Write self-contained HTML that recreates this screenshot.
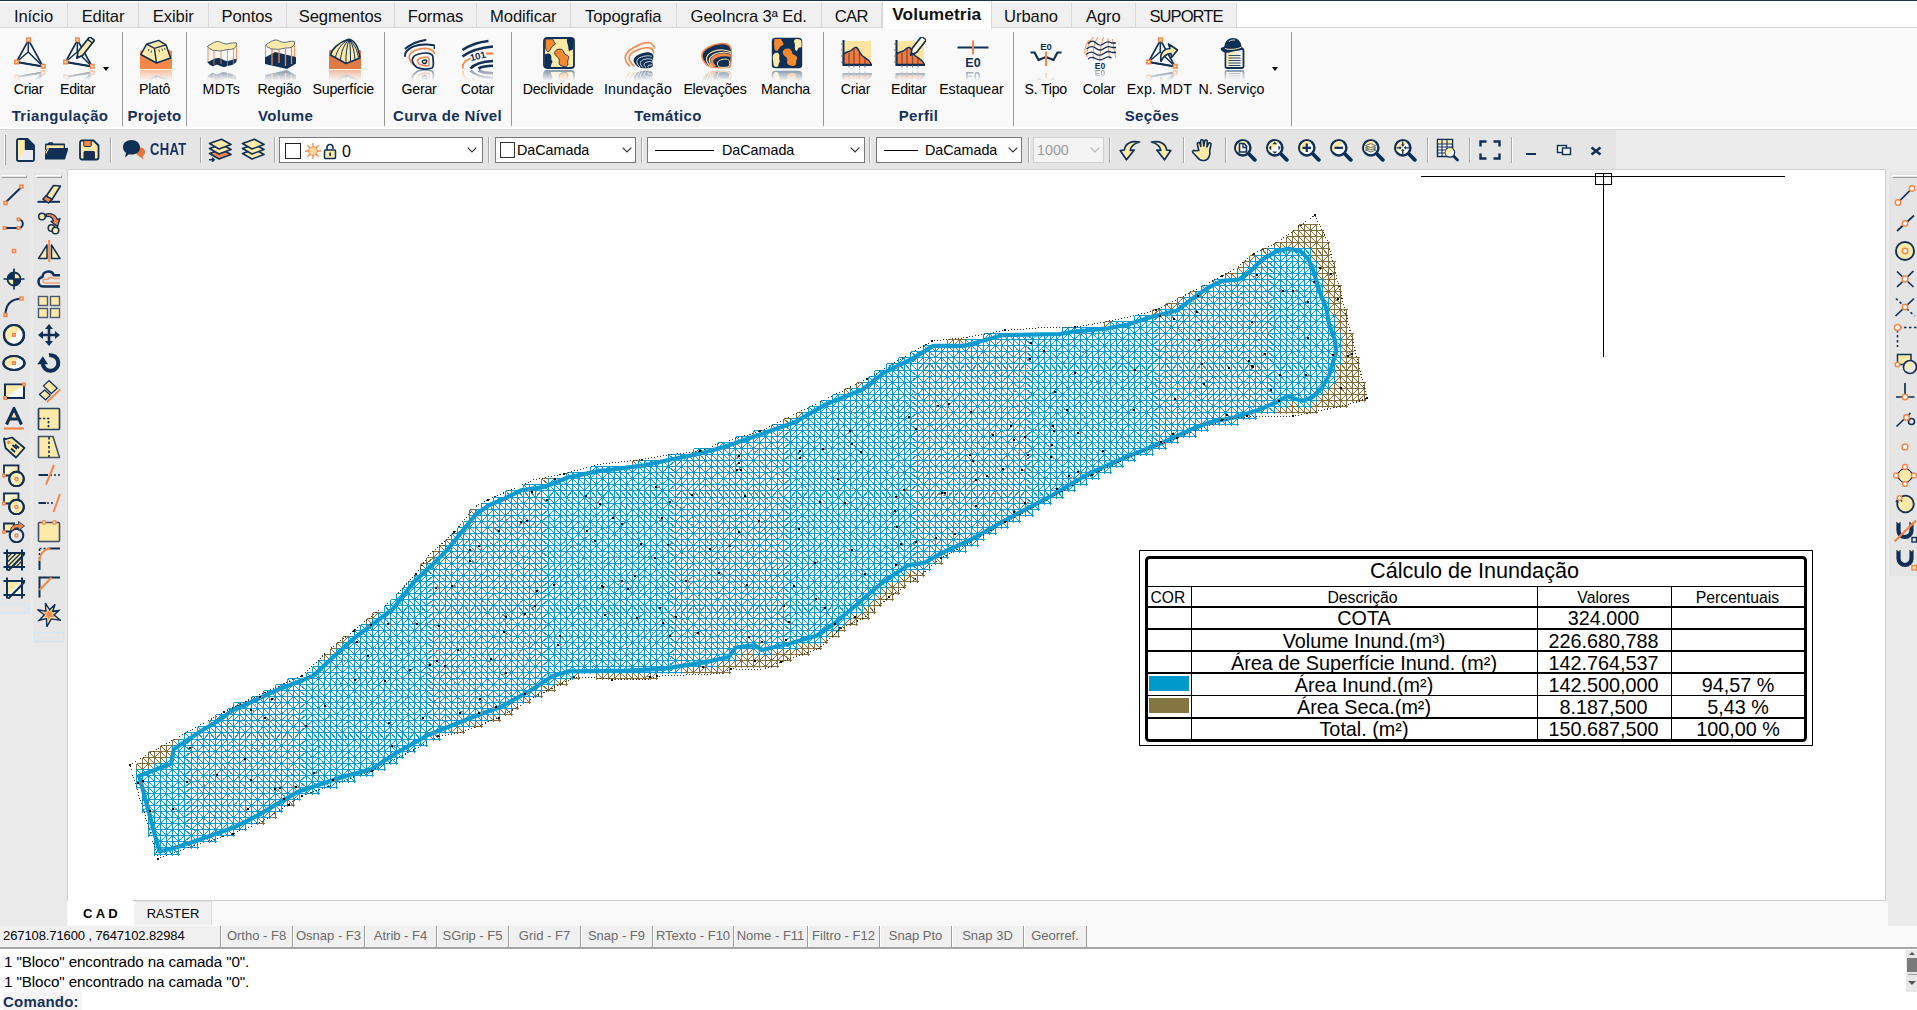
<!DOCTYPE html><html><head><meta charset="utf-8"><title>CAD</title><style>
*{box-sizing:border-box;margin:0;padding:0}
html,body{width:1917px;height:1010px;overflow:hidden;background:#fff}
body{font-family:"Liberation Sans",sans-serif;position:relative;color:#000}
.a{position:absolute}
#topline{left:0;top:0;width:1917px;height:1.4px;background:#1b3558}
#tabbar{left:0;top:3px;width:1917px;height:25px;background:#fff;border-bottom:1px solid #d4d4d4}
.tab{position:absolute;top:0;height:24px;background:#f0f0f0;border-right:1px solid #d9d9d9;font-size:16.6px;line-height:27px;text-align:center;color:#111;letter-spacing:-.1px}
.tab.on{background:#fff;font-weight:bold;top:-2px;height:28px;border-left:1px solid #d9d9d9;border-right:1px solid #d9d9d9;z-index:2;font-size:17.3px;line-height:27px;letter-spacing:.1px}
#ribbon{left:0;top:29px;width:1917px;height:98px;background:#f9f9f9}
.rb{position:absolute;top:7.7px;width:32px;height:46px}
.rl{position:absolute;top:50.6px;height:18px;font-size:14.2px;line-height:18px;white-space:nowrap;transform:translateX(-50%);letter-spacing:-.25px;color:#000}
.gl{position:absolute;top:76.7px;height:20px;font-size:15px;font-weight:bold;line-height:20px;white-space:nowrap;transform:translateX(-50%);color:#17315a;letter-spacing:.35px}
.gs{position:absolute;top:2.5px;width:1px;height:94.5px;background:#9a9a9a}
.dd{position:absolute;width:0;height:0;border-left:3.4px solid transparent;border-right:3.4px solid transparent;border-top:4.6px solid #000}
#ribline{left:0;top:129px;width:1917px;height:1px;background:#d6d6d6}
#toolbar{left:0;top:130px;width:1616px;height:39px;background:#e5e5e5}
#toolbar2{left:1616px;top:130px;width:301px;height:39px;background:#ececec}
.ts{position:absolute;top:12px;width:2px;height:26px;border-left:1px solid #a9a9a9;border-right:1px solid #fafafa}
.ti{position:absolute;top:8px;width:24px;height:24px}
.cb{position:absolute;top:7px;height:26px;background:#fff;border:1px solid #7a7a7a;font-size:14.3px;line-height:24px;white-space:nowrap}
.cb .t{position:absolute;top:0}
.chev{position:absolute;top:9px;width:10px;height:6px}
#leftp{left:0;top:169px;width:67px;height:757px;background:#eaeaea}
#lc1{left:0;top:172px;width:30px;height:442px;background:#e6e6e6}
#lc2{left:33px;top:172px;width:32px;height:471px;background:#e6e6e6}
#rightp{left:1886px;top:169px;width:31px;height:757px;background:#ebebeb}
#rc{left:1889px;top:172px;width:28px;height:404px;background:#e5e5e5}
.li{position:absolute;width:24px;height:24px}
#canvas{left:67px;top:169px;width:1819px;height:732px;background:#fff;border:1px solid #cfcfcf}
#btabs{left:67px;top:901px;width:1821px;height:25px;background:#f9f9f9}
#stat{left:0;top:926px;width:1917px;height:22px;background:#f9f9f9}
#statl{left:0;top:926px;width:1087px;height:22px;background:#f0f0f0}
#statline{left:0;top:947px;width:1917px;height:2px;background:#a6a6a6}
.sb{position:absolute;top:0;height:21px;border-left:1px solid #9d9d9d;font-size:13px;line-height:19px;text-align:center;color:#6a6a6a;white-space:nowrap;box-shadow:inset 1px 0 0 #fff}
#cmd{left:0;top:949px;width:1917px;height:61px;background:#fff;font-size:15.2px}
#cmd div{position:absolute;left:4px;white-space:nowrap;line-height:20px;letter-spacing:-.1px}
</style></head><body><div class="a" id="tabbar"><div class="tab" style="left:0.0px;width:68.0px">Início</div><div class="tab" style="left:68.0px;width:71.0px">Editar</div><div class="tab" style="left:139.0px;width:69.5px">Exibir</div><div class="tab" style="left:208.5px;width:78.0px">Pontos</div><div class="tab" style="left:286.5px;width:108.5px">Segmentos</div><div class="tab" style="left:395.0px;width:82.0px">Formas</div><div class="tab" style="left:477.0px;width:93.5px">Modificar</div><div class="tab" style="left:570.5px;width:106.5px">Topografia</div><div class="tab" style="left:677.0px;width:144.5px">GeoIncra 3ª Ed.</div><div class="tab" style="left:821.5px;width:60.5px;letter-spacing:-.7px">CAR</div><div class="tab on" style="left:882.0px;width:109.5px">Volumetria</div><div class="tab" style="left:991.5px;width:80.0px">Urbano</div><div class="tab" style="left:1071.5px;width:64.5px">Agro</div><div class="tab" style="left:1136.0px;width:101.0px;letter-spacing:-1px">SUPORTE</div></div><div class="a" id="topline"></div><div class="a" id="ribbon"><svg class="rb" style="left:14px" viewBox="0 0 32 46"><defs><linearGradient id="g_tri_criar" x1="0" y1="33" x2="0" y2="46" gradientUnits="userSpaceOnUse"><stop offset="0" stop-color="#fff" stop-opacity=".5"/><stop offset=".85" stop-color="#fff" stop-opacity="0"/></linearGradient><mask id="m_tri_criar" maskUnits="userSpaceOnUse" x="0" y="32" width="32" height="14"><rect x="0" y="32" width="32" height="14" fill="url(#g_tri_criar)"/></mask></defs><g id="i_tri_criar"><g fill="none" stroke="#0f2f55" stroke-linejoin="round"><path d="M14.5 3L2.5 25L29 29.5Z" stroke-width="1.6"/><path d="M2.5 25L29 29.5" stroke-width="2.2"/><path d="M14.5 3L14.2 15L2.5 25M14.2 15L29 29.5" stroke-width="1.5"/></g><rect x="12.0" y="0.2999999999999998" width="5" height="5" fill="#f5874a"/><rect x="13.5" y="1.7999999999999998" width="2" height="2" fill="#fde3c0"/><rect x="0.10000000000000009" y="22.5" width="5" height="5" fill="#f5874a"/><rect x="1.6" y="24.0" width="2" height="2" fill="#fde3c0"/><rect x="26.7" y="26.8" width="5" height="5" fill="#f5874a"/><rect x="28.2" y="28.3" width="2" height="2" fill="#fde3c0"/></g><g mask="url(#m_tri_criar)"><use href="#i_tri_criar" transform="translate(0 65) scale(1 -1)"/></g></svg><div class="rl" style="left:28.5px">Criar</div><svg class="rb" style="left:63px" viewBox="0 0 32 46"><defs><linearGradient id="g_tri_editar" x1="0" y1="33" x2="0" y2="46" gradientUnits="userSpaceOnUse"><stop offset="0" stop-color="#fff" stop-opacity=".5"/><stop offset=".85" stop-color="#fff" stop-opacity="0"/></linearGradient><mask id="m_tri_editar" maskUnits="userSpaceOnUse" x="0" y="32" width="32" height="14"><rect x="0" y="32" width="32" height="14" fill="url(#g_tri_editar)"/></mask></defs><g id="i_tri_editar"><g fill="none" stroke="#0f2f55" stroke-linejoin="round"><path d="M14.5 3L2.5 25L29 29.5Z" stroke-width="1.6"/><path d="M2.5 25L29 29.5" stroke-width="2.2"/><path d="M14.5 3L14.2 15L2.5 25M14.2 15L29 29.5" stroke-width="1.5"/></g><rect x="12.0" y="0.2999999999999998" width="5" height="5" fill="#f5874a"/><rect x="13.5" y="1.7999999999999998" width="2" height="2" fill="#fde3c0"/><rect x="0.10000000000000009" y="22.5" width="5" height="5" fill="#f5874a"/><rect x="1.6" y="24.0" width="2" height="2" fill="#fde3c0"/><rect x="26.7" y="26.8" width="5" height="5" fill="#f5874a"/><rect x="28.2" y="28.3" width="2" height="2" fill="#fde3c0"/><g transform="translate(20.5 12.5) rotate(38)"><path d="M-3 -14h6v19l-3 6l-3 -6z" fill="#fde9a8" stroke="#0f2f55" stroke-width="1.700" stroke-linejoin="round"/><path d="M-3 -10.500h6" stroke="#0f2f55" stroke-width="1.400"/><path d="M-1.600 8l1.600 3l1.600 -3z" fill="#0f2f55"/></g></g><g mask="url(#m_tri_editar)"><use href="#i_tri_editar" transform="translate(0 65) scale(1 -1)"/></g></svg><div class="rl" style="left:77.8px">Editar</div><svg class="rb" style="left:140px" viewBox="0 0 32 46"><defs><linearGradient id="g_plato" x1="0" y1="33" x2="0" y2="46" gradientUnits="userSpaceOnUse"><stop offset="0" stop-color="#fff" stop-opacity=".5"/><stop offset=".85" stop-color="#fff" stop-opacity="0"/></linearGradient><mask id="m_plato" maskUnits="userSpaceOnUse" x="0" y="32" width="32" height="14"><rect x="0" y="32" width="32" height="14" fill="url(#g_plato)"/></mask></defs><g id="i_plato"><path d="M0 14l4 -1.5l24 0l4 1.5V32H0z" fill="#f5874a"/><path d="M6.6 7.2L18.6 3.4L26 7.8L30.6 21L16.5 26L.8 17.5z" fill="#fde9a8" stroke="#0f2f55" stroke-width="1.5" stroke-linejoin="round"/><path d="M6.6 7.2L14.4 11.3L26 7.8M14.4 11.3L16.5 26" fill="none" stroke="#0f2f55" stroke-width="1.4"/><path d="M9 12l-.6 2M11.5 13.5l-.4 2.4M19 12.5l.4 2.6M22 11.5l.5 2.4M24.5 11l.6 2" stroke="#0f2f55" stroke-width=".8" fill="none"/></g><g mask="url(#m_plato)"><use href="#i_plato" transform="translate(0 65) scale(1 -1)"/></g></svg><div class="rl" style="left:154.5px">Platô</div><svg class="rb" style="left:206px" viewBox="0 0 32 46"><defs><linearGradient id="g_mdts" x1="0" y1="33" x2="0" y2="46" gradientUnits="userSpaceOnUse"><stop offset="0" stop-color="#fff" stop-opacity=".5"/><stop offset=".85" stop-color="#fff" stop-opacity="0"/></linearGradient><mask id="m_mdts" maskUnits="userSpaceOnUse" x="0" y="32" width="32" height="14"><rect x="0" y="32" width="32" height="14" fill="url(#g_mdts)"/></mask></defs><g id="i_mdts"><g stroke="#f5874a" stroke-width="1.1" fill="none" opacity=".85"><path d="M2 10V26M8 13V28M15 14V27M21.5 13V29M27.5 11V27M30.5 7V24"/></g><path d="M1.5 25C5 24 8 21 12 21S18 24 21 24S27 22 30.5 22C31 24 30 26 28 27C25 29 23 28 20 29.5S15 29 12 28S8 30 6 29C4 28 2.5 27 1.5 25z" fill="#0f2f55"/><g stroke="#f5874a" stroke-width="1.1" fill="none" opacity=".7"><path d="M8 22V28M15 22V27M21.5 24V29M27.5 22V27"/></g><path d="M1.5 9.5C5 7 8 5 11 4.5S17 7 20 7S27 5 30.5 6C31 8 30 10 28 11.5C25 13 22 12 19 13S13 14 10 13.5S6.5 14 6 12.5C4 12 2.5 11 1.5 9.5z" fill="#fde9a8" stroke="#4a5f73" stroke-width=".9" stroke-linejoin="round"/></g><g mask="url(#m_mdts)"><use href="#i_mdts" transform="translate(0 65) scale(1 -1)"/></g></svg><div class="rl" style="left:221.3px;letter-spacing:.3px">MDTs</div><svg class="rb" style="left:264px" viewBox="0 0 32 46"><defs><linearGradient id="g_regiao" x1="0" y1="33" x2="0" y2="46" gradientUnits="userSpaceOnUse"><stop offset="0" stop-color="#fff" stop-opacity=".5"/><stop offset=".85" stop-color="#fff" stop-opacity="0"/></linearGradient><mask id="m_regiao" maskUnits="userSpaceOnUse" x="0" y="32" width="32" height="14"><rect x="0" y="32" width="32" height="14" fill="url(#g_regiao)"/></mask></defs><g id="i_regiao"><g stroke="#f5874a" stroke-width="1.1" fill="none" opacity=".85"><path d="M1.5 8V25M30.5 6V24"/></g><path d="M1 20.5L11 15L32 20V26.5L23 32L1 27z" fill="#0f2f55"/><g stroke="#f5874a" stroke-width="1.3" fill="none"><path d="M8 12V28M15 13V26M21.5 12V29M27.5 10V27"/></g><path d="M1.5 9.5C5 7 8 5 11 4.5S17 7 20 7S27 5 30.5 6C31 8 30 10 28 11.5C25 13 22 12 19 13S13 14 10 13.5S6.5 14 6 12.5C4 12 2.5 11 1.5 9.5z" transform="translate(0 -1.5)" fill="#fde9a8" stroke="#4a5f73" stroke-width=".9" stroke-linejoin="round"/></g><g mask="url(#m_regiao)"><use href="#i_regiao" transform="translate(0 65) scale(1 -1)"/></g></svg><div class="rl" style="left:279.3px">Região</div><svg class="rb" style="left:329px" viewBox="0 0 32 46"><defs><linearGradient id="g_superficie" x1="0" y1="33" x2="0" y2="46" gradientUnits="userSpaceOnUse"><stop offset="0" stop-color="#fff" stop-opacity=".5"/><stop offset=".85" stop-color="#fff" stop-opacity="0"/></linearGradient><mask id="m_superficie" maskUnits="userSpaceOnUse" x="0" y="32" width="32" height="14"><rect x="0" y="32" width="32" height="14" fill="url(#g_superficie)"/></mask></defs><g id="i_superficie"><path d="M0 13.5L3 12.5H29l3 1V32H0z" fill="#de7b45"/><path d="M1.5 18C3 12 10 5 19.5 2.2C26 3 29.5 10 31 21L17 26.5z" fill="#fde9a8" stroke="#0f2f55" stroke-width="1.5" stroke-linejoin="round"/><path d="M19.5 2.5C12 7 8 13 6.5 20.5M19.8 2.5C15 8 12 15 11.5 23M20 2.5C18 9 16.5 17 17 26M20.3 2.5C21.5 9 21.5 17 21.5 24.5M20.6 2.6C24 8 25.5 15 26 23M21 3C26 8 28.5 14 29.5 21.5" fill="none" stroke="#0f2f55" stroke-width="1"/></g><g mask="url(#m_superficie)"><use href="#i_superficie" transform="translate(0 65) scale(1 -1)"/></g></svg><div class="rl" style="left:343.3px">Superfície</div><svg class="rb" style="left:403px" viewBox="0 0 32 46"><defs><linearGradient id="g_gerar" x1="0" y1="33" x2="0" y2="46" gradientUnits="userSpaceOnUse"><stop offset="0" stop-color="#fff" stop-opacity=".5"/><stop offset=".85" stop-color="#fff" stop-opacity="0"/></linearGradient><mask id="m_gerar" maskUnits="userSpaceOnUse" x="0" y="32" width="32" height="14"><rect x="0" y="32" width="32" height="14" fill="url(#g_gerar)"/></mask></defs><g id="i_gerar"><g fill="none" stroke-linecap="round"><path d="M2.5 11.5C8 7 16 4 22.5 3" stroke="#0f2f55" stroke-width="2"/><path d="M2 19C2 12 12 7 24 7.5S31 10.5 31.5 11" stroke="#0f2f55" stroke-width="2"/><path d="M12.5 29C5 24 3.5 17 12 13.5S30 11 31.5 16.5" stroke="#f5874a" stroke-width="1.7"/><path d="M14 30.5C7 25 8 19 16 17S30 16 30 20.5S31.5 29.5 29 31C24 32.5 18 32 14 30.5z" stroke="#0f2f55" stroke-width="1.7"/><path d="M17 27.5C12.5 24 14.5 21.5 19.5 20.5S26.5 20.5 26 23.5S27 28 25.5 28.5S19.5 28.5 17 27.5z" stroke="#f5874a" stroke-width="1.6"/><path d="M19.5 25.5C18.5 23.5 20 23 22.5 23S23 25 23 26S20.500 26.5 19.5 25.5z" fill="#f4ec8a" stroke="#0f2f55" stroke-width="1.4"/></g></g><g mask="url(#m_gerar)"><use href="#i_gerar" transform="translate(0 65) scale(1 -1)"/></g></svg><div class="rl" style="left:419.0px">Gerar</div><svg class="rb" style="left:461px" viewBox="0 0 32 46"><defs><linearGradient id="g_cotar" x1="0" y1="33" x2="0" y2="46" gradientUnits="userSpaceOnUse"><stop offset="0" stop-color="#fff" stop-opacity=".5"/><stop offset=".85" stop-color="#fff" stop-opacity="0"/></linearGradient><mask id="m_cotar" maskUnits="userSpaceOnUse" x="0" y="32" width="32" height="14"><rect x="0" y="32" width="32" height="14" fill="url(#g_cotar)"/></mask></defs><g id="i_cotar"><g fill="none"><path d="M1.500 13C9 8 18 5 27.500 4" stroke="#0f2f55" stroke-width="2.6"/><path d="M1.500 19.5C9 14 20 10.5 32 9.5" stroke="#0f2f55" stroke-width="2.6"/><path d="M25 16.5H32" stroke="#f5874a" stroke-width="2.2"/><path d="M2 31.500C1 27 4 23.500 9.500 21.5" stroke="#f5874a" stroke-width="1.8"/><path d="M9.5 31.500C13 27.500 21 24.5 32 24" stroke="#0f2f55" stroke-width="2.6"/><path d="M17.5 31.500C21 29.500 26 28.800 32 28.800" stroke="#0f2f55" stroke-width="2.6"/></g><text x="17" y="22.5" font-family="Liberation Sans, sans-serif" font-weight="bold" font-size="9.5" fill="#0f2f55" text-anchor="middle" transform="rotate(-14 17 20)">101</text></g><g mask="url(#m_cotar)"><use href="#i_cotar" transform="translate(0 65) scale(1 -1)"/></g></svg><div class="rl" style="left:477.5px">Cotar</div><svg class="rb" style="left:543px" viewBox="0 0 32 46"><defs><linearGradient id="g_decliv" x1="0" y1="33" x2="0" y2="46" gradientUnits="userSpaceOnUse"><stop offset="0" stop-color="#fff" stop-opacity=".5"/><stop offset=".85" stop-color="#fff" stop-opacity="0"/></linearGradient><mask id="m_decliv" maskUnits="userSpaceOnUse" x="0" y="32" width="32" height="14"><rect x="0" y="32" width="32" height="14" fill="url(#g_decliv)"/></mask></defs><g id="i_decliv"><rect x="1" y="1" width="30" height="30" rx="3" fill="#fde9a8" stroke="#0f2f55" stroke-width="1.8"/><path d="M2.5 2H9.500C10.500 4 11.500 5 12.500 7C11 8.500 8.500 9 8 11S6.500 14.500 5 14.500S3 13 2.500 11z" fill="#f48a2c" stroke="#0f2f55" stroke-width=".8"/><path d="M24 2H30V12C29 14 27 12.500 26.500 14.500C25 13 25.500 10 25 8.500S23.500 4 24 2z" fill="#0f2f55"/><path d="M2 17.500C4.500 16 7 16 8 18.500S7.500 22 9 23.500S7.500 27 8 30H2z" fill="#0f2f55"/><path d="M12 14.500C14 11.500 18.500 11.500 20 13.500S20.500 17 23.500 18S26 21 25 23S25.500 26.500 24.500 28.500S19 29.500 17 28S17.500 23 15.500 21S11 18 12 14.500z" fill="#f48a2c" stroke="#0f2f55" stroke-width=".9"/></g><g mask="url(#m_decliv)"><use href="#i_decliv" transform="translate(0 65) scale(1 -1)"/></g></svg><div class="rl" style="left:558.0px">Declividade</div><svg class="rb" style="left:623px" viewBox="0 0 32 46"><defs><linearGradient id="g_inund" x1="0" y1="33" x2="0" y2="46" gradientUnits="userSpaceOnUse"><stop offset="0" stop-color="#fff" stop-opacity=".5"/><stop offset=".85" stop-color="#fff" stop-opacity="0"/></linearGradient><mask id="m_inund" maskUnits="userSpaceOnUse" x="0" y="32" width="32" height="14"><rect x="0" y="32" width="32" height="14" fill="url(#g_inund)"/></mask></defs><g id="i_inund"><g transform="translate(0 4.500)"><g fill="none" stroke="#f5874a" stroke-width="1.6" stroke-linecap="round"><path d="M6.500 24.500C1.500 19 -1 13 10 6.500S24 1 26.500 1.200S30 4 32 6.500"/><path d="M11 24.500C5 19 3.500 14 12 9.500S27 6 29 7.500S30.500 10 30.500 11.500"/></g><path d="M14.500 25C10 21 8.500 17 15 13.500S27 10 29.500 12.500S28.500 18 29.500 21.500S29 26 26.500 26.500S18 27 14.500 25z" fill="#0f2f55"/><g fill="none" stroke="#e9eef4" stroke-width=".9"><path d="M17 25.500C12.500 21.500 12.500 17.500 18.500 15.500S28 14.500 29 15"/><path d="M20 26C16 22.500 16.500 19.500 21 18S28 17.500 29 18"/><path d="M23 26C20 23.500 20.500 21.500 24 20.500S28.500 20.500 29.500 21"/><path d="M25.500 26C24 24.500 24.500 23.500 29 23.500"/></g></g></g><g mask="url(#m_inund)"><use href="#i_inund" transform="translate(0 65) scale(1 -1)"/></g></svg><div class="rl" style="left:638.0px;letter-spacing:.2px">Inundação</div><svg class="rb" style="left:700px" viewBox="0 0 32 46"><defs><linearGradient id="g_elev" x1="0" y1="33" x2="0" y2="46" gradientUnits="userSpaceOnUse"><stop offset="0" stop-color="#fff" stop-opacity=".5"/><stop offset=".85" stop-color="#fff" stop-opacity="0"/></linearGradient><mask id="m_elev" maskUnits="userSpaceOnUse" x="0" y="32" width="32" height="14"><rect x="0" y="32" width="32" height="14" fill="url(#g_elev)"/></mask></defs><g id="i_elev"><g transform="translate(0 2.500)"><path d="M7.500 26C1 20 -1 13 8 8S27 3 30 7S31.500 15 31 22S30 27.500 26 28S11 28.500 7.500 26z" fill="#0f2f55" stroke="#f5874a" stroke-width="1.5"/><g fill="none"><path d="M10.500 27C5 21.500 5 16 12 12.500S28 10.500 31 12.500" stroke="#fde9a8" stroke-width="1.1"/><path d="M15 27.500C10 22.500 11 18.500 17 16.500S29 15.500 31 16.500" stroke="#f5874a" stroke-width="3"/><path d="M12.500 27.500C7.500 22 8.500 17.500 15 14.500S29 13 31 14" stroke="#fde9a8" stroke-width="1.1"/></g><path d="M19 27.500C16 23.500 17.500 21 22 20S29.500 20 29.500 22.500S30 27 28 27.500S21 28 19 27.500z" fill="#0f2f55" stroke="#fde9a8" stroke-width="1"/></g></g><g mask="url(#m_elev)"><use href="#i_elev" transform="translate(0 65) scale(1 -1)"/></g></svg><div class="rl" style="left:715.0px">Elevações</div><svg class="rb" style="left:771px" viewBox="0 0 32 46"><defs><linearGradient id="g_mancha" x1="0" y1="33" x2="0" y2="46" gradientUnits="userSpaceOnUse"><stop offset="0" stop-color="#fff" stop-opacity=".5"/><stop offset=".85" stop-color="#fff" stop-opacity="0"/></linearGradient><mask id="m_mancha" maskUnits="userSpaceOnUse" x="0" y="32" width="32" height="14"><rect x="0" y="32" width="32" height="14" fill="url(#g_mancha)"/></mask></defs><g id="i_mancha"><rect x=".8" y=".8" width="30.400" height="30.400" rx="3.500" fill="#0f2f55"/><path d="M3.500 2H10C10.500 4 12.500 5.500 12.500 7.500C11 9 9 9 8 11.500S6 14 4.500 13.500S3.500 9 3 7z" fill="#f48a2c"/><path d="M24 2.500C26 1.500 30 2 30.500 4.500V10C29.500 11 28 9.500 27 12S24.500 14.500 24 12S24.500 8 23.500 6S23 3.500 24 2.500z" fill="#fde9a8"/><path d="M2.500 17.500C3.500 15.500 7 15 8 17S7.500 21.500 8.500 23S7.500 26 7.500 28S5 30.500 3.500 29.500S2.500 25.500 2 23S1.500 19.500 2.500 17.500z" fill="#fde9a8"/><path d="M12 14C14 11 18.500 11 20 13S20.500 17 23.500 18S26.500 21 25.500 23S26 26.500 24.500 28S19 29 17 27.500S17.500 22.500 15.500 20.500S11 17.500 12 14z" fill="#f48a2c"/></g><g mask="url(#m_mancha)"><use href="#i_mancha" transform="translate(0 65) scale(1 -1)"/></g></svg><div class="rl" style="left:785.5px">Mancha</div><svg class="rb" style="left:841px" viewBox="0 0 32 46"><defs><linearGradient id="g_perf_criar" x1="0" y1="33" x2="0" y2="46" gradientUnits="userSpaceOnUse"><stop offset="0" stop-color="#fff" stop-opacity=".5"/><stop offset=".85" stop-color="#fff" stop-opacity="0"/></linearGradient><mask id="m_perf_criar" maskUnits="userSpaceOnUse" x="0" y="32" width="32" height="14"><rect x="0" y="32" width="32" height="14" fill="url(#g_perf_criar)"/></mask></defs><g id="i_perf_criar"><rect x="3" y="4" width="27" height="24.500" fill="#fde5a0"/><path d="M2.500 27.500V17C5 14.500 8 15 10 13.500S13.500 9.500 15.500 10.500S18.500 16 21 18.500S27 21.500 30 26.500V27.500z" fill="#f5793a" stroke="#0f2f55" stroke-width="1.400" stroke-linejoin="round"/><path d="M8 16V27M13 11V27M18.500 16V27M24 21V27" stroke="#0f2f55" stroke-width="1.300" opacity=".55"/><path d="M2.500 3V28H31" fill="none" stroke="#0f2f55" stroke-width="2"/><path d="M0 7h2.500M0 13h2.500M0 19h2.500M0 25h2.500M8 28v2.500M13 28v2.500M18.500 28v2.500M24 28v2.500" stroke="#5b6b7d" stroke-width="1"/></g><g mask="url(#m_perf_criar)"><use href="#i_perf_criar" transform="translate(0 65) scale(1 -1)"/></g></svg><div class="rl" style="left:855.5px">Criar</div><svg class="rb" style="left:894px" viewBox="0 0 32 46"><defs><linearGradient id="g_perf_editar" x1="0" y1="33" x2="0" y2="46" gradientUnits="userSpaceOnUse"><stop offset="0" stop-color="#fff" stop-opacity=".5"/><stop offset=".85" stop-color="#fff" stop-opacity="0"/></linearGradient><mask id="m_perf_editar" maskUnits="userSpaceOnUse" x="0" y="32" width="32" height="14"><rect x="0" y="32" width="32" height="14" fill="url(#g_perf_editar)"/></mask></defs><g id="i_perf_editar"><rect x="3" y="4" width="27" height="24.500" fill="#fde5a0"/><path d="M2.500 27.500V17C5 14.500 8 15 10 13.500S13.500 9.500 15.500 10.500S18.500 16 21 18.500S27 21.500 30 26.500V27.500z" fill="#f5793a" stroke="#0f2f55" stroke-width="1.400" stroke-linejoin="round"/><path d="M8 16V27M13 11V27M18.500 16V27M24 21V27" stroke="#0f2f55" stroke-width="1.300" opacity=".55"/><path d="M2.500 3V28H31" fill="none" stroke="#0f2f55" stroke-width="2"/><path d="M0 7h2.500M0 13h2.500M0 19h2.500M0 25h2.500M8 28v2.500M13 28v2.500M18.500 28v2.500M24 28v2.500" stroke="#5b6b7d" stroke-width="1"/><g transform="translate(23.5 9.5) rotate(38)"><path d="M-3 -14h6v19l-3 6l-3 -6z" fill="#fff7d8" stroke="#0f2f55" stroke-width="1.700" stroke-linejoin="round"/><path d="M-3 -10.500h6" stroke="#0f2f55" stroke-width="1.400"/><path d="M-1.600 8l1.600 3l1.600 -3z" fill="#0f2f55"/></g></g><g mask="url(#m_perf_editar)"><use href="#i_perf_editar" transform="translate(0 65) scale(1 -1)"/></g></svg><div class="rl" style="left:908.8px">Editar</div><svg class="rb" style="left:957px" viewBox="0 0 32 46"><defs><linearGradient id="g_estaq" x1="0" y1="33" x2="0" y2="46" gradientUnits="userSpaceOnUse"><stop offset="0" stop-color="#fff" stop-opacity=".5"/><stop offset=".85" stop-color="#fff" stop-opacity="0"/></linearGradient><mask id="m_estaq" maskUnits="userSpaceOnUse" x="0" y="32" width="32" height="14"><rect x="0" y="32" width="32" height="14" fill="url(#g_estaq)"/></mask></defs><g id="i_estaq"><path d="M.500 10.500H31.500" stroke="#0f2f55" stroke-width="2"/><path d="M16 3.500V17.500" stroke="#f5874a" stroke-width="2"/><text x="16" y="30" font-family="Liberation Sans, sans-serif" font-weight="bold" font-size="12.500" fill="#0f2f55" text-anchor="middle">E0</text></g><g mask="url(#m_estaq)"><use href="#i_estaq" transform="translate(0 65) scale(1 -1)"/></g></svg><div class="rl" style="left:971.5px;letter-spacing:0">Estaquear</div><svg class="rb" style="left:1030px" viewBox="0 0 32 46"><defs><linearGradient id="g_stipo" x1="0" y1="33" x2="0" y2="46" gradientUnits="userSpaceOnUse"><stop offset="0" stop-color="#fff" stop-opacity=".5"/><stop offset=".85" stop-color="#fff" stop-opacity="0"/></linearGradient><mask id="m_stipo" maskUnits="userSpaceOnUse" x="0" y="32" width="32" height="14"><rect x="0" y="32" width="32" height="14" fill="url(#g_stipo)"/></mask></defs><g id="i_stipo"><text x="16" y="12.500" font-family="Liberation Sans, sans-serif" font-weight="bold" font-size="9.500" fill="#0f2f55" text-anchor="middle">E0</text><path d="M.500 15.500H4.500L8.500 23L16 20L23.500 23L27.500 15.500H31.500" fill="none" stroke="#0f2f55" stroke-width="2.200" stroke-linejoin="round"/><path d="M16 14.500V29" stroke="#f5874a" stroke-width="2"/></g><g mask="url(#m_stipo)"><use href="#i_stipo" transform="translate(0 65) scale(1 -1)"/></g></svg><div class="rl" style="left:1045.8px">S. Tipo</div><svg class="rb" style="left:1084px" viewBox="0 0 32 46"><defs><linearGradient id="g_colar" x1="0" y1="33" x2="0" y2="46" gradientUnits="userSpaceOnUse"><stop offset="0" stop-color="#fff" stop-opacity=".5"/><stop offset=".85" stop-color="#fff" stop-opacity="0"/></linearGradient><mask id="m_colar" maskUnits="userSpaceOnUse" x="0" y="32" width="32" height="14"><rect x="0" y="32" width="32" height="14" fill="url(#g_colar)"/></mask></defs><g id="i_colar"><g fill="none" stroke="#f5874a" stroke-width="1.100" opacity=".8"><path d="M9.500 0C5 5 2.500 12 3 20M14 0C10 6 8.500 14 9.500 23M19.500 0C17 7 15.500 16 16 24M24 1C24 8 24.500 16 26 22M28.500 2C29.500 9 30.500 16 32 21M5 3C2 7 .500 12 1 17"/></g><g fill="none" stroke="#0f2f55" stroke-width="1.300"><path d="M4 6.500C7 3.500 9 3 12 6S17 9 20 6.500S25 4.500 27.500 6H32"/><path d="M2.500 12C6 9 8.500 8.500 11.500 11S17 14 20 11.500S25 9 28 10.500H32"/><path d="M2 17.500C5 15 8.500 14.500 11 16.500S16.500 19 20 16.500S25 14 28 15.500H32"/><path d="M4 22C7 19.500 9 20 11.500 21.500S17 23.500 20 21.500S25 19 27.500 21"/></g><text x="16" y="32" font-family="Liberation Sans, sans-serif" font-weight="bold" font-size="8.500" fill="#0f2f55" text-anchor="middle">E0</text></g><g mask="url(#m_colar)"><use href="#i_colar" transform="translate(0 65) scale(1 -1)"/></g></svg><div class="rl" style="left:1099.0px">Colar</div><svg class="rb" style="left:1146px" viewBox="0 0 32 46"><defs><linearGradient id="g_expmdt" x1="0" y1="33" x2="0" y2="46" gradientUnits="userSpaceOnUse"><stop offset="0" stop-color="#fff" stop-opacity=".5"/><stop offset=".85" stop-color="#fff" stop-opacity="0"/></linearGradient><mask id="m_expmdt" maskUnits="userSpaceOnUse" x="0" y="32" width="32" height="14"><rect x="0" y="32" width="32" height="14" fill="url(#g_expmdt)"/></mask></defs><g id="i_expmdt"><g fill="none" stroke="#0f2f55" stroke-linejoin="round"><path d="M14.500 3L2.500 25L29 29.500Z" stroke-width="1.600"/><path d="M2.500 25L29 29.500" stroke-width="2.200"/><path d="M14.500 3L14.200 15L2.500 25M14.200 15L29 29.500" stroke-width="1.500"/></g><rect x="12.0" y="0.2999999999999998" width="5" height="5" fill="#f5874a"/><rect x="13.5" y="1.7999999999999998" width="2" height="2" fill="#fde3c0"/><rect x="0.10000000000000009" y="22.5" width="5" height="5" fill="#f5874a"/><rect x="1.6" y="24.0" width="2" height="2" fill="#fde3c0"/><rect x="26.7" y="26.8" width="5" height="5" fill="#f5874a"/><rect x="28.2" y="28.3" width="2" height="2" fill="#fde3c0"/><path d="M15 24.500C13.500 17 17 12 24 11.500L22.500 7L31.500 13L25.500 20.500L25 16.500C21 16.500 17.500 19 15 24.500z" fill="#fde9a8" stroke="#0f2f55" stroke-width="1.600" stroke-linejoin="round"/></g><g mask="url(#m_expmdt)"><use href="#i_expmdt" transform="translate(0 65) scale(1 -1)"/></g></svg><div class="rl" style="left:1159.5px;letter-spacing:.3px">Exp. MDT</div><svg class="rb" style="left:1217px" viewBox="0 0 32 46"><defs><linearGradient id="g_nserv" x1="0" y1="33" x2="0" y2="46" gradientUnits="userSpaceOnUse"><stop offset="0" stop-color="#fff" stop-opacity=".5"/><stop offset=".85" stop-color="#fff" stop-opacity="0"/></linearGradient><mask id="m_nserv" maskUnits="userSpaceOnUse" x="0" y="32" width="32" height="14"><rect x="0" y="32" width="32" height="14" fill="url(#g_nserv)"/></mask></defs><g id="i_nserv"><rect x="8.500" y="12" width="18" height="19" rx="1.500" fill="#f3f1e6" stroke="#0f2f55" stroke-width="1.800"/><path d="M9.500 13H19L11 30H9.500z" fill="#fde9a8" opacity=".8"/><path d="M11.500 18.500H23.500M11.500 21H23.500M11.500 23.500H23.500M11.500 26H23.500M11.500 28.500H23.500" stroke="#0f2f55" stroke-width="1" opacity=".85"/><path d="M4 11C5 10.500 7 10 7.500 9C8 4 11.500 1 16 1S24 4 24.500 9.500C25.500 10.500 26.500 11 26.500 12.500C22 14 19 13.500 16 14.500S9 16.500 6.500 15S3 12 4 11z" fill="#0f2f55"/><path d="M8 11.500C12 13 20 12.500 24.500 10" fill="none" stroke="#fde9a8" stroke-width="1"/><path d="M12 4.500C14 3 16 2.800 18 3.200" fill="none" stroke="#fde9a8" stroke-width=".9"/></g><g mask="url(#m_nserv)"><use href="#i_nserv" transform="translate(0 65) scale(1 -1)"/></g></svg><div class="rl" style="left:1231.5px;letter-spacing:.05px">N. Serviço</div><div class="gs" style="left:122.0px"></div><div class="gs" style="left:186.0px"></div><div class="gs" style="left:384.0px"></div><div class="gs" style="left:511.0px"></div><div class="gs" style="left:823.0px"></div><div class="gs" style="left:1013.0px"></div><div class="gs" style="left:1291.0px"></div><div class="gl" style="left:60.0px">Triangulação</div><div class="gl" style="left:154.5px">Projeto</div><div class="gl" style="left:285.5px">Volume</div><div class="gl" style="left:447.5px">Curva de Nível</div><div class="gl" style="left:668.0px">Temático</div><div class="gl" style="left:918.5px">Perfil</div><div class="gl" style="left:1152.0px">Seções</div><div class="dd" style="left:103.2px;top:37.5px"></div><div class="dd" style="left:1272.2px;top:37.5px"></div></div><div class="a" id="ribline"></div><div class="a" id="toolbar2"></div><div class="a" id="toolbar"><div class="ts" style="left:4px;top:5px;height:30px;border-left-color:#fff;border-right-color:#a0a0a0"></div><div class="ts" style="left:109.5px;top:7px"></div><div class="ts" style="left:199.5px;top:7px"></div><div class="ts" style="left:273.5px;top:7px"></div><div class="ts" style="left:488.0px;top:7px"></div><div class="ts" style="left:640.5px;top:7px"></div><div class="ts" style="left:869.0px;top:7px"></div><div class="ts" style="left:1027.5px;top:7px"></div><div class="ts" style="left:1108.5px;top:7px"></div><div class="ts" style="left:1182.5px;top:7px"></div><div class="ts" style="left:1224.5px;top:7px"></div><div class="ts" style="left:1426.5px;top:7px"></div><div class="ts" style="left:1468.5px;top:7px"></div><div class="ts" style="left:1510.5px;top:7px"></div><svg class="ti" style="left:13px" viewBox="0 0 24 24"><path d="M4 2.800A1.800 1.800 0 0 1 5.800 1H14.500L21 7.500V21.200a1.800 1.800 0 0 1 -1.800 1.800H5.800A1.800 1.800 0 0 1 4 21.200z" fill="#e9edf1" stroke="#0f2f55" stroke-width="1.900" stroke-linejoin="round"/><path d="M5 2H11.800V11.500L5 21.800z" fill="#fde9a8"/><path d="M11.800 1.500H14.500L20.500 7.700V12H11.800z" fill="#0f2f55"/></svg><svg class="ti" style="left:44px" viewBox="0 0 24 24"><path d="M1 6.500a1 1 0 0 1 1 -1h2l.800 -1.200h3.800l.800 1.200h10.600a1 1 0 0 1 1 1V12H1z" fill="#0f2f55"/><path d="M2.300 7.300H19.700V14H2.300z" fill="#fde9a8"/><path d="M1 21.500V13.500L4 10H24.500L21 21.500z" fill="#0f2f55"/><path d="M1.800 15.500L4.500 10.500" stroke="#fde9a8" stroke-width="1.200"/></svg><svg class="ti" style="left:77px" viewBox="0 0 24 24"><path d="M3 4.500A2 2 0 0 1 5 2.500H16.500L21.500 7.500V19.500a2 2 0 0 1 -2 2H5a2 2 0 0 1 -2 -2z" fill="#fde9a8" stroke="#0f2f55" stroke-width="1.800" stroke-linejoin="round"/><path d="M6.800 2.500h7.400v5a1 1 0 0 1 -1 1H7.800a1 1 0 0 1 -1 -1z" fill="#f5874a" stroke="#0f2f55" stroke-width="1"/><path d="M6.500 21V14.500a1.500 1.500 0 0 1 1.500 -1.500H16.500a1.500 1.500 0 0 1 1.500 1.500V21z" fill="#1b3050"/></svg><svg class="ti" style="left:122px" viewBox="0 0 24 24"><path d="M14 13.500C14 11 16 9.500 18.500 9.500S23 11 23 14C23 16 22 17.500 20.500 18L21.500 21.500L17.500 18.500C15.500 18 14 16 14 13.500z" fill="#e5743b"/><path d="M1 9C1 5 4.500 2 9.500 2S18 5 18 9.500S14.500 16.500 9.500 16.500C8.500 16.500 7.500 16.400 6.800 16.200L3 19.500L4 15C2 13.500 1 11.500 1 9z" fill="#0f2f55"/></svg><svg class="ti" style="left:208px" viewBox="0 0 24 24"><path d="M1.500 15.5 L13.500 11.2 L23 16.5 L11 21.0 Z" fill="#f5874a" stroke="#0f2f55" stroke-width="1.600" stroke-linejoin="round"/><path d="M1.500 10.5 L13.500 6.2 L23 11.5 L11 16.0 Z" fill="#fde9a8" stroke="#0f2f55" stroke-width="1.600" stroke-linejoin="round"/><path d="M1.500 5.5 L13.500 1.2000000000000002 L23 6.5 L11 11.0 Z" fill="#fde9a8" stroke="#0f2f55" stroke-width="1.600" stroke-linejoin="round"/><path d="M1 21.800h4.500M4 19.800l2.200 2l-2.200 2" fill="none" stroke="#0f2f55" stroke-width="1.500"/></svg><svg class="ti" style="left:241px" viewBox="0 0 24 24"><path d="M1.500 15.5 L13.500 11.2 L23 16.5 L11 21.0 Z" fill="#fde9a8" stroke="#0f2f55" stroke-width="1.600" stroke-linejoin="round"/><path d="M1.500 10.5 L13.500 6.2 L23 11.5 L11 16.0 Z" fill="#fde9a8" stroke="#0f2f55" stroke-width="1.600" stroke-linejoin="round"/><path d="M1.500 5.5 L13.500 1.2000000000000002 L23 6.5 L11 11.0 Z" fill="#fde9a8" stroke="#0f2f55" stroke-width="1.600" stroke-linejoin="round"/></svg><svg class="ti" style="left:1117px" viewBox="0 0 24 24"><path d="M22.500 4C14 2.300 8.300 5.500 7.300 12L3.200 12.600L9.500 21.800L17.200 12L13.200 12.300C13.800 8.500 17 5.500 22.500 4z" fill="#fde9a8" stroke="#0f2f55" stroke-width="1.700" stroke-linejoin="round"/></svg><svg class="ti" style="left:1150px" viewBox="0 0 24 24"><path d="M1.500 4C10 2.300 15.700 5.500 16.700 12L20.800 12.600L14.500 21.800L6.800 12L10.800 12.300C10.200 8.500 7 5.500 1.500 4z" fill="#fde9a8" stroke="#0f2f55" stroke-width="1.700" stroke-linejoin="round"/></svg><svg class="ti" style="left:1191px" viewBox="0 0 24 24"><path d="M7.800 12.500L6.300 6.200a1.350 1.350 0 0 1 2.600 -.700L9.800 8.500L9.600 3.200a1.350 1.350 0 0 1 2.700 -.100L12.800 8L13.600 3.300a1.350 1.350 0 0 1 2.700 .400L15.900 9L17.500 5.600a1.350 1.350 0 0 1 2.500 1L18.700 12.500C19.600 17 17.500 22.500 13 22.500H11.500C9 22.500 7.500 21 6 19L1.800 14.500C.900 13.200 2.600 11.700 4 12.800z" fill="#fde9a8" stroke="#0f2f55" stroke-width="1.600" stroke-linejoin="round"/></svg><svg class="ti" style="left:1233px" viewBox="0 0 24 24"><path d="M15.500 15.500L21.800 21.800" stroke="#0f2f55" stroke-width="3.800" stroke-linecap="round"/><circle cx="9.800" cy="9.800" r="7.600" fill="#fff" stroke="#0f2f55" stroke-width="2.500"/><path d="M4.300 14A7 7 0 0 1 14 4.300z" fill="#fde9a8"/><path d="M6.500 5.500h4.500l2.500 2.500v6h-7z" fill="#fff" stroke="#0f2f55" stroke-width="1.600"/><path d="M10 6v3.500h3.500" fill="none" stroke="#0f2f55" stroke-width="1.300"/></svg><svg class="ti" style="left:1265px" viewBox="0 0 24 24"><path d="M15.500 15.500L21.800 21.800" stroke="#0f2f55" stroke-width="3.800" stroke-linecap="round"/><circle cx="9.800" cy="9.800" r="7.600" fill="#fff" stroke="#0f2f55" stroke-width="2.500"/><path d="M4.300 14A7 7 0 0 1 14 4.300z" fill="#fde9a8"/><path d="M9.800 3.800l2.400 2.400h-4.800zM9.800 15.800l2.400 -2.400h-4.800zM3.800 9.800l2.400 -2.400v4.800zM15.800 9.800l-2.400 -2.400v4.800z" fill="#0f2f55"/></svg><svg class="ti" style="left:1297px" viewBox="0 0 24 24"><path d="M15.500 15.500L21.800 21.800" stroke="#0f2f55" stroke-width="3.800" stroke-linecap="round"/><circle cx="9.800" cy="9.800" r="7.600" fill="#fff" stroke="#0f2f55" stroke-width="2.500"/><path d="M4.300 14A7 7 0 0 1 14 4.300z" fill="#fde9a8"/><path d="M5.500 9.800h8.600M9.800 5.500v8.600" stroke="#0f2f55" stroke-width="2.200"/></svg><svg class="ti" style="left:1329px" viewBox="0 0 24 24"><path d="M15.500 15.500L21.800 21.800" stroke="#0f2f55" stroke-width="3.800" stroke-linecap="round"/><circle cx="9.800" cy="9.800" r="7.600" fill="#fff" stroke="#0f2f55" stroke-width="2.500"/><path d="M4.300 14A7 7 0 0 1 14 4.300z" fill="#fde9a8"/><path d="M5.500 9.800h8.600" stroke="#0f2f55" stroke-width="2.200"/></svg><svg class="ti" style="left:1361px" viewBox="0 0 24 24"><path d="M15.500 15.500L21.800 21.800" stroke="#0f2f55" stroke-width="3.800" stroke-linecap="round"/><circle cx="9.800" cy="9.800" r="7.600" fill="#fff" stroke="#0f2f55" stroke-width="2.500"/><path d="M4.300 14A7 7 0 0 1 14 4.300z" fill="#fde9a8"/><g fill="#fde9a8" stroke="#56657a" stroke-width=".9"><path d="M4.500 12l5.300 -2l5.300 2l-5.300 2z"/><path d="M4.500 9.800l5.300 -2l5.300 2l-5.300 2z"/><path d="M4.500 7.600l5.300 -2l5.300 2l-5.300 2z"/></g></svg><svg class="ti" style="left:1393px" viewBox="0 0 24 24"><path d="M15.500 15.500L21.800 21.800" stroke="#0f2f55" stroke-width="3.800" stroke-linecap="round"/><circle cx="9.800" cy="9.800" r="7.600" fill="#fff" stroke="#0f2f55" stroke-width="2.500"/><path d="M4.300 14A7 7 0 0 1 14 4.300z" fill="#fde9a8"/><path d="M9.800 3.500v4M9.800 16v-4M3.500 9.800h4M16 9.800h-4" stroke="#0f2f55" stroke-width="1.300"/><path d="M9.800 8.800l-1.800 -2.200h3.600zM9.800 10.800l-1.800 2.200h3.600zM8.800 9.800l-2.200 -1.800v3.600zM10.800 9.800l2.200 -1.800v3.600z" fill="#0f2f55"/></svg><svg class="ti" style="left:1435px" viewBox="0 0 24 24"><rect x="2.500" y="1.500" width="15" height="17" fill="#fff" stroke="#0f2f55" stroke-width="1.500"/><rect x="3.200" y="2.200" width="13.600" height="3.500" fill="#fde9a8"/><path d="M2.500 6h15M2.500 9h15M2.500 12h15M2.500 15h15M7 1.500v17M12 1.500v17" stroke="#0f2f55" stroke-width="1.100"/><path d="M18 17.500L22.500 22" stroke="#0f2f55" stroke-width="2.600" stroke-linecap="round"/><circle cx="15" cy="14.500" r="4.600" fill="#fff" stroke="#0f2f55" stroke-width="1.300"/><path d="M11.800 17.700A4.500 4.500 0 0 1 18.200 11.300z" fill="#fde9a8"/></svg><svg class="ti" style="left:1478px" viewBox="0 0 24 24"><path d="M2.500 8.500V3.500H8.500M15.500 3.500H21.500V8.500M21.500 15.500V20.500H15.500M8.500 20.500H2.500V15.500" fill="none" stroke="#0f2f55" stroke-width="2.400"/></svg><svg class="ti" style="left:1519px" viewBox="0 0 24 24"><rect x="7" y="15" width="10" height="2" fill="#0f2f55"/></svg><svg class="ti" style="left:1551px" viewBox="0 0 24 24"><rect x="6.500" y="7.500" width="9" height="7" fill="#f2f2f2" stroke="#0f2f55" stroke-width="1.400"/><rect x="11.500" y="10" width="8" height="6.500" fill="#f2f2f2" stroke="#0f2f55" stroke-width="1.400"/></svg><svg class="ti" style="left:1584px" viewBox="0 0 24 24"><path d="M7.500 9.500L16.500 16.500M16.500 9.500L7.500 16.500" stroke="#0f2f55" stroke-width="2.500"/></svg><div class="a" style="left:150px;top:10.5px;font-size:16px;font-weight:bold;color:#17315a;letter-spacing:.3px;line-height:18px;transform:scaleX(.82);transform-origin:0 0">CHAT</div><div class="cb" style="left:279px;width:204px"><svg class="a" style="left:5px;top:3px" width="62" height="20" viewBox="0 0 62 20"><rect x=".500" y="2.500" width="15" height="15" fill="#fff" stroke="#222" stroke-width="1"/><g stroke="#f5874a" stroke-width="1.300"><path d="M28 2v16M20 10h16M22.300 4.300l11.400 11.400M33.700 4.300L22.300 15.700"/></g><circle cx="28" cy="10" r="4.300" fill="#fcd9a0" stroke="#f5874a" stroke-width="1"/><path d="M42 9V6.500a3 3 0 0 1 6 0V8" fill="none" stroke="#0f2f55" stroke-width="1.600"/><rect x="39.500" y="9" width="11" height="8.500" rx="1" fill="#fde9a8" stroke="#0f2f55" stroke-width="1.500"/><rect x="44.300" y="11.500" width="1.600" height="3.500" fill="#0f2f55"/></svg><span class="t" style="left:62px;top:1.5px;font-size:16px">0</span><svg class="chev" style="left:187px" viewBox="0 0 10 6"><path d="M.7 .7L5 5L9.3 .7" fill="none" stroke="#333" stroke-width="1.2"/></svg></div><div class="cb" style="left:495px;width:141px"><div class="a" style="left:4px;top:4px;width:15px;height:16px;border:1px solid #333;background:#fff"></div><span class="t" style="left:21px">DaCamada</span><svg class="chev" style="left:126px" viewBox="0 0 10 6"><path d="M.7 .7L5 5L9.3 .7" fill="none" stroke="#333" stroke-width="1.2"/></svg></div><div class="cb" style="left:647px;width:218px"><div class="a" style="left:7px;top:12px;width:59px;height:1px;background:#000"></div><span class="t" style="left:74px">DaCamada</span><svg class="chev" style="left:202px" viewBox="0 0 10 6"><path d="M.7 .7L5 5L9.3 .7" fill="none" stroke="#333" stroke-width="1.2"/></svg></div><div class="cb" style="left:876px;width:146px"><div class="a" style="left:7px;top:12px;width:34px;height:1px;background:#000"></div><span class="t" style="left:48px">DaCamada</span><svg class="chev" style="left:131px" viewBox="0 0 10 6"><path d="M.7 .7L5 5L9.3 .7" fill="none" stroke="#333" stroke-width="1.2"/></svg></div><div class="cb" style="left:1033px;width:71px;border-color:#cfcfcf;background:#f4f4f4;color:#9a9a9a"><span class="t" style="left:3px">1000</span><svg class="chev" style="left:56px" viewBox="0 0 10 6"><path d="M.7 .7L5 5L9.3 .7" fill="none" stroke="#b5b5b5" stroke-width="1.2"/></svg></div></div><div class="a" id="leftp"></div><div class="a" id="lc1"></div><div class="a" id="lc2"></div><div class="a" id="rightp"></div><div class="a" id="rc"></div><div class="a" style="left:1px;top:175px;width:26px;height:3px;border-top:1px solid #fff;border-left:1px solid #fff;border-bottom:1px solid #a0a0a0;border-right:1px solid #a0a0a0"></div><div class="a" style="left:36px;top:175px;width:26px;height:3px;border-top:1px solid #fff;border-left:1px solid #fff;border-bottom:1px solid #a0a0a0;border-right:1px solid #a0a0a0"></div><div class="a" style="left:1892px;top:175px;width:26px;height:3px;border-top:1px solid #fff;border-left:1px solid #fff;border-bottom:1px solid #a0a0a0;border-right:1px solid #a0a0a0"></div><div class="a" style="left:-1px;top:604px;width:30px;height:10px;border:1px solid #cfe6fb"></div><div class="a" style="left:34px;top:632px;width:30px;height:10px;border:1px solid #cfe6fb"></div><svg class="li" style="left:2px;top:183px" viewBox="0 0 24 24"><path d="M3 20L20 3.500" stroke="#0f2f55" stroke-width="2"/><rect x="1.25" y="17.75" width="4.5" height="4.5" fill="#f5874a"/><rect x="2.75" y="19.25" width="1.5" height="1.5" fill="#fde3c0"/><rect x="17.25" y="1.25" width="4.5" height="4.5" fill="#f5874a"/><rect x="18.75" y="2.75" width="1.5" height="1.5" fill="#fde3c0"/></svg><svg class="li" style="left:2px;top:211px" viewBox="0 0 24 24"><g transform="translate(0 1)"><path d="M2.500 16H16.500a4.300 4.300 0 0 0 0 -8.600" fill="none" stroke="#0f2f55" stroke-width="2"/><rect x="0.5" y="14.0" width="4" height="4" fill="#f5874a"/><rect x="2.0" y="15.5" width="1" height="1" fill="#fde3c0"/><rect x="14.5" y="14.0" width="4" height="4" fill="#f5874a"/><rect x="16.0" y="15.5" width="1" height="1" fill="#fde3c0"/><rect x="14.5" y="5.4" width="4" height="4" fill="#f5874a"/><rect x="16.0" y="6.9" width="1" height="1" fill="#fde3c0"/></g></svg><svg class="li" style="left:2px;top:239px" viewBox="0 0 24 24"><rect x="9.75" y="9.75" width="4.5" height="4.5" fill="#f5874a"/><rect x="11.25" y="11.25" width="1.5" height="1.5" fill="#fde3c0"/></svg><svg class="li" style="left:2px;top:267px" viewBox="0 0 24 24"><circle cx="12" cy="12" r="6.500" fill="#fde9a8" stroke="#0f2f55" stroke-width="1.800"/><path d="M12 12V5.500A6.500 6.500 0 0 0 5.500 12zM12 12V18.500A6.500 6.500 0 0 0 18.500 12z" fill="#0f2f55"/><path d="M12 1.500V22.500M1.500 12H22.500" stroke="#0f2f55" stroke-width="1.700"/></svg><svg class="li" style="left:2px;top:295px" viewBox="0 0 24 24"><path d="M3.500 20C3.500 10 9 4 19.500 3.500" fill="none" stroke="#0f2f55" stroke-width="2"/><rect x="17.25" y="1.25" width="4.5" height="4.5" fill="#f5874a"/><rect x="18.75" y="2.75" width="1.5" height="1.5" fill="#fde3c0"/><rect x="1.25" y="17.75" width="4.5" height="4.5" fill="#f5874a"/><rect x="2.75" y="19.25" width="1.5" height="1.5" fill="#fde3c0"/></svg><svg class="li" style="left:2px;top:323px" viewBox="0 0 24 24"><circle cx="12" cy="12" r="10" fill="#fff" stroke="#0f2f55" stroke-width="2.200"/><path d="M12 12L19 4.800A10 10 0 0 1 22 12A10 10 0 0 1 5 19z" fill="#fde9a8" transform="rotate(180 12 12)"/><circle cx="12" cy="12" r="10" fill="none" stroke="#0f2f55" stroke-width="2.200"/><rect x="10.0" y="10.0" width="4" height="4" fill="#f5874a"/><rect x="11.5" y="11.5" width="1" height="1" fill="#fde3c0"/></svg><svg class="li" style="left:2px;top:351px" viewBox="0 0 24 24"><ellipse cx="12" cy="12" rx="10.500" ry="7" fill="#fff" stroke="#0f2f55" stroke-width="2.200"/><path d="M2 12A10 6.500 0 0 1 17 6.200L6 17.500A10 6.500 0 0 1 2 12z" fill="#fde9a8"/><ellipse cx="12" cy="12" rx="10.500" ry="7" fill="none" stroke="#0f2f55" stroke-width="2.200"/><rect x="10.0" y="10.0" width="4" height="4" fill="#f5874a"/><rect x="11.5" y="11.5" width="1" height="1" fill="#fde3c0"/></svg><svg class="li" style="left:2px;top:379px" viewBox="0 0 24 24"><rect x="3" y="5.500" width="19" height="13.500" fill="#fff" stroke="#0f2f55" stroke-width="2"/><path d="M4 6.500H21L4 18z" fill="#fde9a8"/><rect x="1.0" y="17.0" width="4" height="4" fill="#f5874a"/><rect x="2.5" y="18.5" width="1" height="1" fill="#fde3c0"/><rect x="20.0" y="3.5" width="4" height="4" fill="#f5874a"/><rect x="21.5" y="5.0" width="1" height="1" fill="#fde3c0"/></svg><svg class="li" style="left:2px;top:407px" viewBox="0 0 24 24"><path d="M12 4L8.500 11.500H15.500z" fill="#fde9a8"/><path d="M4.500 17.500L12 1.500L19.500 17.500M7.500 12H16.500" fill="none" stroke="#0f2f55" stroke-width="3"/><path d="M2 21.500H22" stroke="#f5874a" stroke-width="2.200"/></svg><svg class="li" style="left:2px;top:435px" viewBox="0 0 24 24"><path d="M2 4.500L10 2.500L22.500 13L14 22.500L3.500 13z" fill="#fde9a8" stroke="#0f2f55" stroke-width="1.800" stroke-linejoin="round"/><circle cx="6.800" cy="7.500" r="1.800" fill="#f5874a"/><path d="M10.500 10l4.500 4M9 13.500l4 3.500M13 9.500l4 3.500" stroke="#0f2f55" stroke-width="1.800"/><path d="M1.500 3l3 1.500" stroke="#0f2f55" stroke-width="1.600"/></svg><svg class="li" style="left:2px;top:463px" viewBox="0 0 24 24"><path d="M2 2.500H16.500V12.500H2z" fill="#fde9a8" stroke="#0f2f55" stroke-width="1.800"/><path d="M3 3.500H15.500L3 11.500z" fill="#fff" opacity=".55"/><circle cx="14.500" cy="16" r="7.300" fill="#fde9a8" stroke="#0f2f55" stroke-width="2"/><path d="M9.500 20.500L19.500 11" stroke="#fff" stroke-width="2.500" opacity=".7"/><circle cx="14.500" cy="16" r="7.300" fill="none" stroke="#0f2f55" stroke-width="2"/><circle cx="1.8" cy="12.5" r="1.5" fill="#fff" stroke="#f5874a" stroke-width="1.5"/><circle cx="14.5" cy="16" r="1.5" fill="#fff" stroke="#f5874a" stroke-width="1.5"/></svg><svg class="li" style="left:2px;top:491px" viewBox="0 0 24 24"><path d="M2 2.500H16.500V12.500H2z" fill="#fde9a8" stroke="#0f2f55" stroke-width="1.800"/><path d="M3 3.500H15.500L3 11.500z" fill="#fff" opacity=".55"/><circle cx="14.500" cy="16" r="7.300" fill="#fde9a8" stroke="#0f2f55" stroke-width="2"/><path d="M9.500 20.500L19.500 11" stroke="#fff" stroke-width="2.500" opacity=".7"/><circle cx="14.500" cy="16" r="7.300" fill="none" stroke="#0f2f55" stroke-width="2"/><circle cx="1.8" cy="12.5" r="1.5" fill="#fff" stroke="#f5874a" stroke-width="1.5"/><circle cx="14.5" cy="16" r="1.5" fill="#fff" stroke="#f5874a" stroke-width="1.5"/></svg><svg class="li" style="left:2px;top:519px" viewBox="0 0 24 24"><path d="M2 4.500H12V12.500H2z" fill="#fde9a8" stroke="#0f2f55" stroke-width="1.800"/><circle cx="14.500" cy="16.500" r="6.800" fill="#e8e8e8" stroke="#0f2f55" stroke-width="2"/><path d="M8.500 11.500C9 7 12.500 5 16.500 5.500V2.500L22.500 7L16.500 11.500V8.800C13.500 8.300 11.500 9.500 11 11.800z" fill="#f5874a" stroke="#0f2f55" stroke-width=".8" stroke-linejoin="round"/><circle cx="1.8" cy="13" r="1.5" fill="#fff" stroke="#f5874a" stroke-width="1.5"/><circle cx="14.5" cy="16.5" r="1.5" fill="#fff" stroke="#f5874a" stroke-width="1.5"/></svg><svg class="li" style="left:2px;top:547px" viewBox="0 0 24 24"><g transform="translate(0 1)"><rect x="5" y="5" width="15" height="14" fill="#fde9a8"/><g stroke="#0f2f55" stroke-width="1.300"><path d="M5 10l5 -5M5 14.500l9.500 -9.500M5 19l14 -14M9.500 19l10.500 -10.500M14 19l6 -6"/></g><path d="M5 1.500V22.500M20 1.500V22.500M1.500 5H23M1.500 19H23M6 23L22.500 6" fill="none" stroke="#0f2f55" stroke-width="2"/></g></svg><svg class="li" style="left:2px;top:575px" viewBox="0 0 24 24"><g transform="translate(0 1)"><rect x="5" y="5" width="15" height="14" fill="#fff"/><path d="M5.500 5.500H19.500L5.500 18.500z" fill="#fde9a8"/><path d="M5 1.500V22.500M20 1.500V22.500M1.500 5H23M1.500 19H23M6 23L22.500 6" fill="none" stroke="#0f2f55" stroke-width="2"/></g></svg><svg class="li" style="left:37px;top:183px" viewBox="0 0 24 24"><path d="M.500 18.800H23" stroke="#0f2f55" stroke-width="2"/><path d="M9 13.500L16.500 2.500L23.500 3L15 16.500z" fill="#fde9a8" stroke="#0f2f55" stroke-width="1.700" stroke-linejoin="round"/><path d="M5.800 16.200L9 12.800L15 16.300L11.500 20z" fill="#f5874a" stroke="#0f2f55" stroke-width="1.500" stroke-linejoin="round"/></svg><svg class="li" style="left:37px;top:211px" viewBox="0 0 24 24"><circle cx="5" cy="5.500" r="3.300" fill="#fde9a8" stroke="#0f2f55" stroke-width="1.500"/><circle cx="14.500" cy="17" r="3.300" fill="#fde9a8" stroke="#0f2f55" stroke-width="1.500"/><circle cx="18.500" cy="19.500" r="3.300" fill="#fde9a8" stroke="#0f2f55" stroke-width="1.500"/><path d="M9 3C14 1.500 19 4 20.500 8.500L23 7.500L20.500 15.500L14 10.500L16.500 9.800C15.500 6.500 13 5 9.500 5.500z" fill="#f5874a" stroke="#0f2f55" stroke-width="1.300" stroke-linejoin="round"/></svg><svg class="li" style="left:37px;top:239px" viewBox="0 0 24 24"><path d="M10 6V19.500H1.500zM14.500 6V19.500H23z" fill="#fde9a8" stroke="#0f2f55" stroke-width="1.500" stroke-linejoin="round"/><path d="M12.200 1V23" stroke="#f5874a" stroke-width="2"/></svg><svg class="li" style="left:37px;top:267px" viewBox="0 0 24 24"><path d="M23 19.500H6a4.800 4.800 0 0 1 -.600 -9.500a6 6 0 0 1 11.500 -1.800H23" fill="none" stroke="#0f2f55" stroke-width="2.500" stroke-linejoin="round"/><path d="M23 16H8a1.900 1.900 0 0 1 0 -3.800h3.300a2.500 2.500 0 0 1 4.500 -.800H23" fill="none" stroke="#f0a27c" stroke-width="1.500"/></svg><svg class="li" style="left:37px;top:295px" viewBox="0 0 24 24"><g fill="#fde9a8" stroke="#4a5a70" stroke-width="1.400"><rect x="1.500" y="1.500" width="9" height="9"/><rect x="13.500" y="1.500" width="9" height="9"/><rect x="1.500" y="13.500" width="9" height="9"/><rect x="13.500" y="13.500" width="9" height="9"/></g></svg><svg class="li" style="left:37px;top:323px" viewBox="0 0 24 24"><path d="M12 1L16 6H13.300V10.700H18V8L23 12L18 16V13.300H13.300V18H16L12 23L8 18H10.700V13.300H6V16L1 12L6 8V10.700H10.700V6H8z" fill="#0f2f55"/></svg><svg class="li" style="left:37px;top:351px" viewBox="0 0 24 24"><path d="M12.100 4.300A7.800 7.800 0 1 1 5.700 12" fill="none" stroke="#0f2f55" stroke-width="4"/><path d="M.300 13.200H11L5.800 5.300z" fill="#0f2f55"/></svg><svg class="li" style="left:37px;top:379px" viewBox="0 0 24 24"><path d="M11.900 1.600L20.200 9.200L14.400 14.500L6.400 6.900z" fill="#fde9a8" stroke="#0f2f55" stroke-width="1.300" stroke-linejoin="round"/><path d="M7.700 10.900L13.300 16.100L8.600 20.700L2.400 15.400z" fill="#fde9a8" stroke="#0f2f55" stroke-width="1.300" stroke-linejoin="round"/><path d="M9.900 23L23.300 10.500" stroke="#f5874a" stroke-width="1.800"/></svg><svg class="li" style="left:37px;top:407px" viewBox="0 0 24 24"><rect x="1.500" y="1.500" width="21" height="21" rx="1" fill="#fde9a8" stroke="#26405e" stroke-width="1.700"/><path d="M2 11.500H11.500V22" fill="none" stroke="#0f2f55" stroke-width="1.700" stroke-dasharray="2.200 1.800"/></svg><svg class="li" style="left:37px;top:435px" viewBox="0 0 24 24"><path d="M3 1.500H16L22.500 22.500H1.500V1.500z" fill="#fde9a8" stroke="#3e5068" stroke-width="1.600" stroke-linejoin="round"/><path d="M12 2V22" stroke="#0f2f55" stroke-width="1.600" stroke-dasharray="2.500 2"/></svg><svg class="li" style="left:37px;top:463px" viewBox="0 0 24 24"><path d="M1.500 12H11" stroke="#0f2f55" stroke-width="2"/><path d="M13 12H23" stroke="#0f2f55" stroke-width="1.500" stroke-dasharray="2 2"/><path d="M9 21.500L17 2" stroke="#f5874a" stroke-width="2"/></svg><svg class="li" style="left:37px;top:491px" viewBox="0 0 24 24"><path d="M1.500 12H9" stroke="#0f2f55" stroke-width="2"/><path d="M10 12H17" stroke="#0f2f55" stroke-width="1.500" stroke-dasharray="2 2"/><path d="M16.500 21L23 3" stroke="#f5874a" stroke-width="2"/></svg><svg class="li" style="left:37px;top:519px" viewBox="0 0 24 24"><rect x="1.500" y="3.500" width="21" height="19" rx="1" fill="#fde9a8" stroke="#3e5068" stroke-width="1.600"/><circle cx="7" cy="3.5" r="1.7" fill="#fff" stroke="#f5874a" stroke-width="1.5"/><circle cx="17.5" cy="3.5" r="1.7" fill="#fff" stroke="#f5874a" stroke-width="1.5"/></svg><svg class="li" style="left:37px;top:547px" viewBox="0 0 24 24"><path d="M2.500 1.500H12" stroke="#0f2f55" stroke-width="1.600" stroke-dasharray="2 2"/><path d="M2.500 2v10" stroke="#0f2f55" stroke-width="1.600" stroke-dasharray="2 2"/><path d="M12 1.500H23M2.500 13.500V23" stroke="#0f2f55" stroke-width="2"/><path d="M2.500 14C2.500 7 7 2 13.500 1.500" fill="none" stroke="#f5874a" stroke-width="2"/></svg><svg class="li" style="left:37px;top:575px" viewBox="0 0 24 24"><path d="M2.500 22.500V2.500H23" fill="none" stroke="#0f2f55" stroke-width="2"/><path d="M2.500 15L14.500 2.500" stroke="#f5874a" stroke-width="2"/></svg><svg class="li" style="left:37px;top:603px" viewBox="0 0 24 24"><path d="M8.4 0.2L12.7 6.8L18.1 1.2L15.7 8.3L21.9 7.5L17.0 12.0L23.3 17.2L14.3 15.9L9.8 23.7L9.5 15.5L2.2 17.2L7.4 11.8L0.4 6.8L8.9 8.1z" fill="#fde9a8" stroke="#0f2f55" stroke-width="1.400" stroke-linejoin="miter"/><path d="M10.3 5.9L12.4 9.2L15.2 6.4L13.9 9.9L17.0 9.6L14.6 11.8L17.8 14.4L13.2 13.8L11.0 17.6L10.8 13.6L7.2 14.4L9.8 11.7L6.3 9.2L10.6 9.8z" fill="#f5874a"/></svg><svg class="li" style="left:1893px;top:183px" viewBox="0 0 24 24"><path d="M5 19.500L19 5.500" stroke="#0f2f55" stroke-width="1.700"/><circle cx="5" cy="19.5" r="2.7" fill="#fff" stroke="#f5874a" stroke-width="1.5"/><circle cx="19" cy="5.5" r="2.7" fill="#fff" stroke="#f5874a" stroke-width="1.5"/></svg><svg class="li" style="left:1893px;top:211px" viewBox="0 0 24 24"><path d="M4 20L21 4.500" stroke="#0f2f55" stroke-width="1.700"/><circle cx="12" cy="12.5" r="2.7" fill="#fff" stroke="#f5874a" stroke-width="1.5"/></svg><svg class="li" style="left:1893px;top:239px" viewBox="0 0 24 24"><circle cx="12" cy="12" r="9" fill="#fde9a8" stroke="#0f2f55" stroke-width="1.900"/><circle cx="12" cy="12" r="2.7" fill="#fff" stroke="#f5874a" stroke-width="1.5"/></svg><svg class="li" style="left:1893px;top:267px" viewBox="0 0 24 24"><path d="M4 4.500L20.500 20M20.500 4L4 20" stroke="#0f2f55" stroke-width="1.700"/><circle cx="12" cy="12" r="2.9" fill="#fff" stroke="#f5874a" stroke-width="1.5"/></svg><svg class="li" style="left:1893px;top:295px" viewBox="0 0 24 24"><path d="M3 3.500L21.500 21" stroke="#0f2f55" stroke-width="1.600" stroke-dasharray="2.500 2.500"/><path d="M21 3.500L2.500 21" stroke="#0f2f55" stroke-width="1.700"/><circle cx="12" cy="12" r="2.7" fill="#fff" stroke="#f5874a" stroke-width="1.5"/></svg><svg class="li" style="left:1893px;top:323px" viewBox="0 0 24 24"><path d="M6 4.500H24M4.500 7V24" stroke="#0f2f55" stroke-width="1.600" stroke-dasharray="2.500 2.500"/><circle cx="4.5" cy="4.5" r="3" fill="#fff" stroke="#f5874a" stroke-width="1.5"/></svg><svg class="li" style="left:1893px;top:351px" viewBox="0 0 24 24"><rect x="4.500" y="3.500" width="13.500" height="10" fill="#fde9a8" stroke="#0f2f55" stroke-width="1.500"/><circle cx="17" cy="16" r="6.500" fill="#e8e8e8" stroke="#0f2f55" stroke-width="1.700"/><path d="M12 20A6.500 6.500 0 0 1 21 12z" fill="#fde9a8"/><circle cx="4.5" cy="13.5" r="2.3" fill="#fff" stroke="#f5874a" stroke-width="1.5"/></svg><svg class="li" style="left:1893px;top:379px" viewBox="0 0 24 24"><path d="M12 4V18M3 18H21.500" stroke="#0f2f55" stroke-width="1.700"/><circle cx="12" cy="18" r="2.7" fill="#fff" stroke="#f5874a" stroke-width="1.5"/></svg><svg class="li" style="left:1893px;top:407px" viewBox="0 0 24 24"><path d="M3.500 19.500L17.500 6" stroke="#0f2f55" stroke-width="1.700"/><circle cx="18.500" cy="14.500" r="3" fill="#e8e8e8" stroke="#0f2f55" stroke-width="1.600"/><circle cx="13.5" cy="10.5" r="2.7" fill="#fff" stroke="#f5874a" stroke-width="1.5"/></svg><svg class="li" style="left:1893px;top:435px" viewBox="0 0 24 24"><circle cx="12" cy="12" r="3" fill="#fff" stroke="#f5874a" stroke-width="1.5"/></svg><svg class="li" style="left:1893px;top:463px" viewBox="0 0 24 24"><path d="M12 4L21 12.500L12 21L3 12.500z" fill="#fde9a8" stroke="#0f2f55" stroke-width="1.800" stroke-linejoin="round"/><circle cx="12" cy="12.500" r="6.300" fill="#fde9a8"/><circle cx="12" cy="4" r="2.5" fill="#fff" stroke="#f5874a" stroke-width="1.5"/><circle cx="21" cy="12.5" r="2.5" fill="#fff" stroke="#f5874a" stroke-width="1.5"/><circle cx="12" cy="21" r="2.5" fill="#fff" stroke="#f5874a" stroke-width="1.5"/><circle cx="3" cy="12.5" r="2.5" fill="#fff" stroke="#f5874a" stroke-width="1.5"/></svg><svg class="li" style="left:1893px;top:491px" viewBox="0 0 24 24"><circle cx="12.500" cy="13" r="8.300" fill="#fde9a8" stroke="#0f2f55" stroke-width="1.800"/><path d="M3 11l3 -4l3 3.500" fill="none" stroke="#0f2f55" stroke-width="1.600"/><circle cx="6.5" cy="7" r="2.3" fill="#fff" stroke="#f5874a" stroke-width="1.5"/></svg><svg class="li" style="left:1893px;top:519px" viewBox="0 0 24 24"><path d="M5.500 3V11.500a6.500 6.500 0 0 0 13 0V3" fill="none" stroke="#0f2f55" stroke-width="4.200"/><path d="M4.500 3.500h2M17.500 3.500h2" stroke="#fde9a8" stroke-width="1.500"/><rect x="19" y="18.500" width="4.500" height="4.500" fill="#e8e8e8" stroke="#0f2f55" stroke-width="1.400"/><path d="M1.500 22.500L23 1.500" stroke="#f5874a" stroke-width="2.400"/></svg><svg class="li" style="left:1893px;top:547px" viewBox="0 0 24 24"><path d="M5.500 3V11.500a6.500 6.500 0 0 0 13 0V3" fill="none" stroke="#0f2f55" stroke-width="4.200"/><path d="M4.500 3.500h2M17.500 3.500h2" stroke="#fde9a8" stroke-width="1.500"/><rect x="19" y="18.500" width="4.500" height="4.500" fill="#fde9a8" stroke="#f5874a" stroke-width="1.400"/></svg><div class="a" id="canvas"></div><svg class="a" style="left:0;top:0" width="1917" height="1010" viewBox="0 0 1917 1010"><g transform="translate(.5 .5)" stroke="#85703d" stroke-width="1" fill="none" shape-rendering="crispEdges"><path d="M1298 224H1317M1292 230H1323M1286 236H1323M1274 242H1329M1261 248H1268M1310 248H1329M1249 255H1256M1310 255H1329M1243 261H1250M1316 261H1335M1237 267H1244M1316 267H1335M1225 273H1238M1316 273H1335M1322 279H1335M1322 285H1341M1189 291H1196M1322 291H1341M1177 297H1184M1328 297H1341M1165 303H1178M1328 303H1341M1152 309H1160M1328 309H1347M1334 315H1347M1104 321H1111M1334 321H1347M1334 327H1347M1340 333H1353M947 339H966M1340 339H1353M1340 345H1353M1340 351H1353M1340 357H1359M1340 363H1359M1334 370H1359M1334 376H1359M856 382H863M1334 382H1365M844 388H851M1328 388H1365M1322 394H1365M1316 400H1365M1286 406H1299M1310 406H1347M796 412H803M1274 412H1317M783 418H791M632 460H639M541 478H549M469 509H476M445 539H452M439 545H446M433 551H440M426 557H434M420 563H427M935 563H942M904 575H924M898 581H918M886 587H905M880 593H899M874 599H893M868 605H881M372 612H379M862 612H875M366 618H373M850 618H869M844 624H857M838 630H845M342 636H349M826 636H839M336 642H343M820 642H827M330 648H337M796 648H821M324 654H331M741 654H754M771 654H809M735 660H791M717 666H778M681 672H730M572 678H579M596 678H657M554 684H567M541 690H555M535 696H542M523 702H530M511 708H518M499 714H512M487 720H500M469 726H482M451 732H464M172 739H179M160 745H173M148 751H173M142 757H167M136 763H155M287 805H294M269 817H276M257 823H264"/><path d="M136 763V770M142 757V770M148 751V770M154 751V764M160 745V764M166 745V758M172 739V746M263 817V824M275 811V818M293 799V806M324 654V661M330 648V655M336 642V649M342 636V643M366 618V625M372 612V619M420 563V570M426 557V564M433 551V558M439 545V552M445 539V546M457 726V733M463 726V733M469 509V516M475 720V727M481 720V727M493 714V721M499 714V721M505 708V715M511 708V715M517 702V709M529 696V703M541 478V485M541 690V697M548 684V691M554 684V691M560 678V685M566 678V685M578 672V679M596 672V679M602 672V679M608 672V679M614 672V679M620 672V679M626 672V679M632 460V467M632 672V679M638 672V679M644 672V679M650 672V679M656 672V679M687 666V673M693 666V673M699 666V673M705 666V673M711 666V673M717 666V673M723 660V673M729 660V673M735 660V667M741 654V667M747 648V667M753 654V667M759 654V667M765 654V667M771 654V667M777 648V667M783 418V425M783 648V661M790 648V661M796 412V419M796 648V655M802 642V655M808 642V655M814 642V649M820 642V649M826 636V643M832 630V637M838 630V637M844 388V395M844 624V631M850 618V625M856 382V389M856 612V625M862 612V619M868 605V619M874 599V613M880 593V606M886 587V600M892 581V600M898 581V594M904 575V588M910 569V582M917 569V582M923 569V576M941 557V564M947 339V346M953 339V346M959 339V346M1104 321V328M1152 309V316M1165 303V310M1171 303V310M1177 297V304M1189 291V298M1225 273V280M1231 273V280M1237 267V274M1243 261V268M1249 255V262M1261 248V256M1274 242V249M1280 242V249M1280 406V413M1286 236V249M1286 406V413M1292 230V249M1292 400V413M1298 224V249M1298 406V413M1304 224V249M1304 406V413M1310 224V249M1310 406V413M1316 224V262M1316 400V413M1322 230V280M1322 394V407M1328 242V298M1328 388V407M1334 261V316M1334 382V407M1340 285V334M1340 363V407M1346 309V407M1352 333V401M1358 357V401M1364 382V401"/><path transform="translate(.5 .5)" d="M1298 224l5 5M1304 224l5 5M1310 229l5 -5M1292 230l5 5M1298 230l5 5M1304 230l5 5M1310 230l5 5M1316 230l5 5M1286 236l5 5M1292 236l5 5M1298 236l5 5M1304 236l5 5M1310 236l5 5M1316 241l5 -5M1274 242l5 5M1280 242l5 5M1286 247l5 -5M1292 247l5 -5M1298 242l5 5M1304 242l5 5M1310 247l5 -5M1316 242l5 5M1322 247l5 -5M1261 248l5 6M1310 248l5 6M1316 248l5 6M1322 248l5 6M1249 260l5 -5M1310 255l5 5M1316 255l5 5M1322 260l5 -5M1243 261l5 5M1316 261l5 5M1322 261l5 5M1328 261l5 5M1237 267l5 5M1316 272l5 -5M1322 267l5 5M1328 267l5 5M1225 273l5 5M1231 273l5 5M1316 273l5 5M1322 278l5 -5M1328 278l5 -5M1322 279l5 5M1328 279l5 5M1322 285l5 5M1328 290l5 -5M1334 290l5 -5M1189 291l5 5M1322 296l5 -5M1328 291l5 5M1334 291l5 5M1177 302l5 -5M1328 297l5 5M1334 297l5 5M1165 303l5 5M1171 308l5 -5M1328 308l5 -5M1334 303l5 5M1152 314l6 -5M1328 309l5 5M1334 314l5 -5M1340 309l5 5M1334 315l5 5M1340 315l5 5M1104 326l5 -5M1334 326l5 -5M1340 321l5 5M1334 332l5 -5M1340 327l5 5M1340 338l5 -5M1346 338l5 -5M947 344l5 -5M953 344l5 -5M959 339l5 5M1340 339l5 5M1346 344l5 -5M1340 345l5 5M1346 345l5 5M1340 351l5 5M1346 351l5 5M1340 357l5 5M1346 362l5 -5M1352 357l5 5M1334 363l5 6M1340 363l5 6M1346 369l5 -6M1352 363l5 6M1334 370l5 5M1340 370l5 5M1346 375l5 -5M1352 375l5 -5M1334 381l5 -5M1340 376l5 5M1346 376l5 5M1352 376l5 5M856 387l5 -5M1328 387l5 -5M1334 382l5 5M1340 382l5 5M1346 382l5 5M1352 382l5 5M1358 382l5 5M844 388l5 5M1322 388l5 5M1328 388l5 5M1334 388l5 5M1340 388l5 5M1346 388l5 5M1352 393l5 -5M1358 393l5 -5M1316 394l5 5M1322 394l5 5M1328 399l5 -5M1334 394l5 5M1340 399l5 -5M1346 399l5 -5M1352 399l5 -5M1358 399l5 -5M1286 400l5 5M1292 400l5 5M1310 400l5 5M1316 405l5 -5M1322 400l5 5M1328 400l5 5M1334 400l5 5M1340 400l5 5M1274 406l5 5M1280 406l5 5M1286 406l5 5M1292 406l5 5M1298 406l5 5M1304 406l5 5M1310 406l5 5M796 417l5 -5M783 418l6 5M632 460l5 5M541 478l6 5M469 509l5 5M445 539l5 5M439 545l5 5M433 556l5 -5M426 562l6 -5M935 557l5 5M420 563l5 5M904 569l5 5M910 569l6 5M917 569l5 5M898 575l5 5M904 580l5 -5M910 575l6 5M886 581l5 5M892 586l5 -5M898 581l5 5M880 587l5 5M886 587l5 5M892 587l5 5M874 593l5 5M880 598l5 -5M886 598l5 -5M868 604l5 -5M874 599l5 5M862 605l5 6M868 605l5 6M372 617l5 -5M850 612l5 5M856 617l5 -5M862 612l5 5M366 618l5 5M844 623l5 -5M850 623l5 -5M838 629l5 -5M826 635l5 -5M832 635l5 -5M342 641l5 -5M820 636l5 5M336 642l5 5M796 642l5 5M802 642l5 5M808 642l5 5M814 642l5 5M330 648l5 5M741 653l5 -5M747 653l5 -5M771 648l5 5M777 653l5 -5M783 653l6 -5M790 653l5 -5M796 648l5 5M802 648l5 5M324 654l5 5M735 654l5 5M741 654l5 5M747 659l5 -5M753 659l5 -5M759 659l5 -5M765 654l5 5M771 659l5 -5M777 659l5 -5M783 654l6 5M717 665l5 -5M723 665l5 -5M729 665l5 -5M735 665l5 -5M741 660l5 5M747 660l5 5M753 665l5 -5M759 660l5 5M765 665l5 -5M771 665l5 -5M681 666l5 5M687 666l5 5M693 671l5 -5M699 671l5 -5M705 666l5 5M711 666l5 5M717 666l5 5M723 671l5 -5M572 677l5 -5M596 672l5 5M602 677l5 -5M608 677l5 -5M614 677l5 -5M620 672l5 5M626 672l5 5M632 672l5 5M638 672l5 5M644 677l5 -5M650 677l5 -5M554 678l5 5M560 683l5 -5M541 684l6 5M548 689l5 -5M535 695l5 -5M523 696l5 5M511 702l5 5M499 708l5 5M505 708l5 5M487 714l5 5M493 714l5 5M469 720l5 5M475 720l5 5M451 731l5 -5M457 726l5 5M172 739l5 5M160 745l5 5M166 750l5 -5M148 751l5 5M154 756l5 -5M160 751l5 5M166 751l5 5M142 757l5 5M148 757l5 5M154 757l5 5M160 757l5 5M136 763l5 5M142 768l5 -5M148 763l5 5M287 799l5 5M269 816l5 -5M257 817l5 5"/></g>
<g transform="translate(.5 .5)" stroke="#0c9bd0" stroke-width="1" fill="none" shape-rendering="crispEdges"><path d="M1267 248H1311M1255 255H1311M1249 261H1317M1243 267H1317M1237 273H1317M1213 279H1323M1201 285H1323M1195 291H1323M1183 297H1329M1177 303H1329M1159 309H1329M1134 315H1335M1110 321H1335M1062 327H1335M983 333H1341M965 339H1341M923 345H1341M910 351H1341M898 357H1341M886 363H1341M874 370H1335M868 376H1335M862 382H1335M850 388H1329M832 394H1323M820 400H1317M808 406H1287M1298 406H1311M802 412H1275M790 418H1256M771 424H1238M753 430H1208M735 436H1196M717 442H1178M693 448H1166M668 454H1153M638 460H1135M590 466H1123M566 472H1111M548 478H1099M523 484H1087M505 490H1075M493 497H1063M481 503H1051M475 509H1039M469 515H1033M463 521H1020M457 527H1008M451 533H996M451 539H984M445 545H978M439 551H966M433 557H948M426 563H936M420 569H930M414 575H905M408 581H899M402 587H887M396 593H881M390 599H875M384 605H869M378 612H863M372 618H851M360 624H845M354 630H839M348 636H827M342 642H821M336 648H797M330 654H742M753 654H772M318 660H736M312 666H718M306 672H682M287 678H573M275 684H555M263 690H542M251 696H536M233 702H524M227 708H512M215 714H500M209 720H488M197 726H470M184 732H452M178 739H440M172 745H427M172 751H415M166 757H403M154 763H397M136 769H385M136 775H373M136 781H355M136 787H337M142 793H319M142 799H300M142 805H288M142 811H282M148 817H270M148 823H258M148 829H246M148 835H234M154 841H216M154 847H198M154 854H179"/><path d="M136 769V788M142 769V812M148 769V836M154 763V855M160 763V855M166 757V855M172 745V855M178 739V855M184 732V848M191 732V848M197 726V848M203 726V842M209 720V842M215 714V842M221 714V836M227 708V836M233 702V836M239 702V830M245 702V830M251 696V824M257 696V824M263 690V818M269 690V818M275 684V812M281 684V812M287 678V806M293 678V800M299 678V800M306 672V794M312 666V794M318 660V794M324 660V788M330 654V788M336 648V788M342 642V782M348 636V782M354 630V782M360 624V776M366 624V776M372 618V776M378 612V770M384 605V770M390 599V764M396 593V764M402 587V758M408 581V752M414 575V752M420 569V746M426 563V746M433 557V740M439 551V740M445 545V733M451 533V733M457 527V727M463 521V727M469 515V727M475 509V721M481 503V721M487 503V721M493 497V715M499 497V715M505 490V709M511 490V709M517 490V703M523 484V703M529 484V697M535 484V697M541 484V691M548 478V685M554 478V685M560 478V679M566 472V679M572 472V679M578 472V673M584 472V673M590 466V673M596 466V673M602 466V673M608 466V673M614 466V673M620 466V673M626 466V673M632 466V673M638 460V673M644 460V673M650 460V673M656 460V673M662 460V673M668 454V673M675 454V673M681 454V673M687 454V667M693 448V667M699 448V667M705 448V667M711 448V667M717 442V667M723 442V661M729 442V661M735 436V661M741 436V655M747 436V649M753 430V655M759 430V655M765 430V655M771 424V655M777 424V649M783 424V649M790 418V649M796 418V649M802 412V643M808 406V643M814 406V643M820 400V643M826 400V637M832 394V631M838 394V631M844 394V625M850 388V619M856 388V613M862 382V613M868 376V606M874 370V600M880 370V594M886 363V588M892 363V582M898 357V582M904 357V576M910 351V570M917 351V570M923 345V570M929 345V570M935 345V564M941 345V558M947 345V558M953 345V552M959 345V552M965 339V552M971 339V546M977 339V546M983 333V540M989 333V534M995 333V534M1001 333V528M1007 333V528M1013 333V522M1019 333V522M1025 333V516M1032 333V516M1038 333V510M1044 333V504M1050 333V504M1056 333V498M1062 327V498M1068 327V491M1074 327V491M1080 327V485M1086 327V485M1092 327V479M1098 327V479M1104 327V473M1110 321V473M1116 321V467M1122 321V467M1128 321V461M1134 315V461M1140 315V455M1146 315V455M1152 315V455M1159 309V449M1165 309V449M1171 309V443M1177 303V443M1183 297V437M1189 297V437M1195 291V437M1201 285V431M1207 285V431M1213 279V425M1219 279V425M1225 279V425M1231 279V425M1237 273V425M1243 267V419M1249 261V419M1255 255V419M1261 255V413M1267 248V413M1274 248V413M1280 248V407M1286 248V407M1292 248V401M1298 248V407M1304 248V407M1310 248V407M1316 261V401M1322 279V395M1328 297V389M1334 315V383M1340 333V364"/><path transform="translate(.5 .5)" d="M1267 248l6 6M1274 248l5 6M1280 248l5 6M1286 254l5 -6M1292 248l5 6M1298 248l5 6M1304 248l5 6M1255 255l5 5M1261 260l5 -5M1267 255l6 5M1274 255l5 5M1280 260l5 -5M1286 260l5 -5M1292 255l5 5M1298 255l5 5M1304 255l5 5M1249 261l5 5M1255 266l5 -5M1261 261l5 5M1267 261l6 5M1274 261l5 5M1280 266l5 -5M1286 266l5 -5M1292 266l5 -5M1298 266l5 -5M1304 261l5 5M1310 261l5 5M1243 272l5 -5M1249 272l5 -5M1255 267l5 5M1261 267l5 5M1267 267l6 5M1274 267l5 5M1280 267l5 5M1286 267l5 5M1292 272l5 -5M1298 272l5 -5M1304 272l5 -5M1310 267l5 5M1237 278l5 -5M1243 278l5 -5M1249 273l5 5M1255 278l5 -5M1261 278l5 -5M1267 273l6 5M1274 278l5 -5M1280 273l5 5M1286 273l5 5M1292 278l5 -5M1298 278l5 -5M1304 273l5 5M1310 273l5 5M1213 279l5 5M1219 279l5 5M1225 279l5 5M1231 279l5 5M1237 284l5 -5M1243 279l5 5M1249 279l5 5M1255 279l5 5M1261 279l5 5M1267 279l6 5M1274 284l5 -5M1280 279l5 5M1286 279l5 5M1292 284l5 -5M1298 284l5 -5M1304 284l5 -5M1310 279l5 5M1316 279l5 5M1201 285l5 5M1207 290l5 -5M1213 285l5 5M1219 285l5 5M1225 285l5 5M1231 290l5 -5M1237 290l5 -5M1243 285l5 5M1249 285l5 5M1255 290l5 -5M1261 285l5 5M1267 290l6 -5M1274 285l5 5M1280 285l5 5M1286 290l5 -5M1292 285l5 5M1298 285l5 5M1304 290l5 -5M1310 290l5 -5M1316 290l5 -5M1195 291l5 5M1201 296l5 -5M1207 291l5 5M1213 296l5 -5M1219 291l5 5M1225 291l5 5M1231 291l5 5M1237 296l5 -5M1243 291l5 5M1249 291l5 5M1255 291l5 5M1261 291l5 5M1267 291l6 5M1274 291l5 5M1280 291l5 5M1286 291l5 5M1292 291l5 5M1298 291l5 5M1304 296l5 -5M1310 291l5 5M1316 291l5 5M1183 297l5 5M1189 297l5 5M1195 297l5 5M1201 297l5 5M1207 297l5 5M1213 302l5 -5M1219 297l5 5M1225 297l5 5M1231 297l5 5M1237 302l5 -5M1243 297l5 5M1249 302l5 -5M1255 297l5 5M1261 297l5 5M1267 302l6 -5M1274 297l5 5M1280 297l5 5M1286 302l5 -5M1292 302l5 -5M1298 297l5 5M1304 302l5 -5M1310 302l5 -5M1316 302l5 -5M1322 297l5 5M1177 303l5 5M1183 303l5 5M1189 303l5 5M1195 303l5 5M1201 308l5 -5M1207 303l5 5M1213 303l5 5M1219 303l5 5M1225 308l5 -5M1231 308l5 -5M1237 308l5 -5M1243 303l5 5M1249 303l5 5M1255 303l5 5M1261 303l5 5M1267 303l6 5M1274 303l5 5M1280 303l5 5M1286 308l5 -5M1292 308l5 -5M1298 303l5 5M1304 303l5 5M1310 308l5 -5M1316 303l5 5M1322 303l5 5M1159 309l5 5M1165 309l5 5M1171 309l5 5M1177 309l5 5M1183 309l5 5M1189 309l5 5M1195 309l5 5M1201 309l5 5M1207 309l5 5M1213 309l5 5M1219 309l5 5M1225 309l5 5M1231 309l5 5M1237 309l5 5M1243 309l5 5M1249 309l5 5M1255 314l5 -5M1261 314l5 -5M1267 314l6 -5M1274 314l5 -5M1280 309l5 5M1286 309l5 5M1292 314l5 -5M1298 309l5 5M1304 314l5 -5M1310 314l5 -5M1316 309l5 5M1322 314l5 -5M1134 320l5 -5M1140 320l5 -5M1146 320l5 -5M1152 320l6 -5M1159 315l5 5M1165 315l5 5M1171 315l5 5M1177 320l5 -5M1183 320l5 -5M1189 320l5 -5M1195 315l5 5M1201 320l5 -5M1207 320l5 -5M1213 320l5 -5M1219 315l5 5M1225 315l5 5M1231 315l5 5M1237 315l5 5M1243 315l5 5M1249 320l5 -5M1255 315l5 5M1261 320l5 -5M1267 320l6 -5M1274 320l5 -5M1280 315l5 5M1286 315l5 5M1292 320l5 -5M1298 320l5 -5M1304 315l5 5M1310 315l5 5M1316 320l5 -5M1322 315l5 5M1328 320l5 -5M1110 321l5 5M1116 321l5 5M1122 321l5 5M1128 326l5 -5M1134 321l5 5M1140 326l5 -5M1146 326l5 -5M1152 321l6 5M1159 321l5 5M1165 321l5 5M1171 326l5 -5M1177 326l5 -5M1183 321l5 5M1189 326l5 -5M1195 321l5 5M1201 321l5 5M1207 321l5 5M1213 326l5 -5M1219 321l5 5M1225 321l5 5M1231 321l5 5M1237 321l5 5M1243 321l5 5M1249 326l5 -5M1255 326l5 -5M1261 326l5 -5M1267 321l6 5M1274 321l5 5M1280 321l5 5M1286 321l5 5M1292 321l5 5M1298 326l5 -5M1304 321l5 5M1310 326l5 -5M1316 326l5 -5M1322 321l5 5M1328 321l5 5M1062 332l5 -5M1068 332l5 -5M1074 327l5 5M1080 327l5 5M1086 327l5 5M1092 332l5 -5M1098 327l5 5M1104 327l5 5M1110 327l5 5M1116 327l5 5M1122 332l5 -5M1128 327l5 5M1134 332l5 -5M1140 327l5 5M1146 332l5 -5M1152 332l6 -5M1159 327l5 5M1165 332l5 -5M1171 327l5 5M1177 327l5 5M1183 327l5 5M1189 327l5 5M1195 327l5 5M1201 327l5 5M1207 327l5 5M1213 327l5 5M1219 327l5 5M1225 332l5 -5M1231 327l5 5M1237 332l5 -5M1243 332l5 -5M1249 327l5 5M1255 332l5 -5M1261 332l5 -5M1267 332l6 -5M1274 327l5 5M1280 327l5 5M1286 327l5 5M1292 332l5 -5M1298 327l5 5M1304 327l5 5M1310 327l5 5M1316 327l5 5M1322 327l5 5M1328 327l5 5M983 338l5 -5M989 333l5 5M995 338l5 -5M1001 333l5 5M1007 333l5 5M1013 333l5 5M1019 333l5 5M1025 333l6 5M1032 338l5 -5M1038 338l5 -5M1044 338l5 -5M1050 338l5 -5M1056 338l5 -5M1062 338l5 -5M1068 333l5 5M1074 338l5 -5M1080 333l5 5M1086 338l5 -5M1092 333l5 5M1098 338l5 -5M1104 338l5 -5M1110 333l5 5M1116 333l5 5M1122 338l5 -5M1128 333l5 5M1134 333l5 5M1140 333l5 5M1146 333l5 5M1152 338l6 -5M1159 338l5 -5M1165 333l5 5M1171 338l5 -5M1177 333l5 5M1183 333l5 5M1189 333l5 5M1195 333l5 5M1201 333l5 5M1207 333l5 5M1213 338l5 -5M1219 333l5 5M1225 333l5 5M1231 338l5 -5M1237 338l5 -5M1243 333l5 5M1249 333l5 5M1255 333l5 5M1261 333l5 5M1267 333l6 5M1274 333l5 5M1280 333l5 5M1286 333l5 5M1292 333l5 5M1298 338l5 -5M1304 338l5 -5M1310 333l5 5M1316 333l5 5M1322 333l5 5M1328 333l5 5M1334 333l5 5M965 339l5 5M971 339l5 5M977 344l5 -5M983 339l5 5M989 339l5 5M995 344l5 -5M1001 344l5 -5M1007 339l5 5M1013 339l5 5M1019 339l5 5M1025 339l6 5M1032 339l5 5M1038 344l5 -5M1044 344l5 -5M1050 344l5 -5M1056 339l5 5M1062 339l5 5M1068 344l5 -5M1074 344l5 -5M1080 339l5 5M1086 339l5 5M1092 339l5 5M1098 339l5 5M1104 344l5 -5M1110 344l5 -5M1116 344l5 -5M1122 344l5 -5M1128 339l5 5M1134 339l5 5M1140 339l5 5M1146 339l5 5M1152 344l6 -5M1159 344l5 -5M1165 344l5 -5M1171 344l5 -5M1177 344l5 -5M1183 339l5 5M1189 339l5 5M1195 339l5 5M1201 344l5 -5M1207 339l5 5M1213 344l5 -5M1219 344l5 -5M1225 339l5 5M1231 339l5 5M1237 339l5 5M1243 344l5 -5M1249 344l5 -5M1255 339l5 5M1261 339l5 5M1267 339l6 5M1274 339l5 5M1280 339l5 5M1286 339l5 5M1292 339l5 5M1298 339l5 5M1304 339l5 5M1310 339l5 5M1316 344l5 -5M1322 344l5 -5M1328 344l5 -5M1334 339l5 5M923 345l5 5M929 345l5 5M935 350l5 -5M941 350l5 -5M947 345l5 5M953 345l5 5M959 345l5 5M965 350l5 -5M971 345l5 5M977 345l5 5M983 350l5 -5M989 350l5 -5M995 345l5 5M1001 345l5 5M1007 345l5 5M1013 345l5 5M1019 350l5 -5M1025 345l6 5M1032 350l5 -5M1038 350l5 -5M1044 345l5 5M1050 345l5 5M1056 350l5 -5M1062 345l5 5M1068 350l5 -5M1074 345l5 5M1080 345l5 5M1086 350l5 -5M1092 345l5 5M1098 350l5 -5M1104 345l5 5M1110 345l5 5M1116 345l5 5M1122 345l5 5M1128 350l5 -5M1134 350l5 -5M1140 345l5 5M1146 345l5 5M1152 345l6 5M1159 350l5 -5M1165 345l5 5M1171 345l5 5M1177 345l5 5M1183 345l5 5M1189 350l5 -5M1195 350l5 -5M1201 350l5 -5M1207 350l5 -5M1213 350l5 -5M1219 345l5 5M1225 345l5 5M1231 350l5 -5M1237 350l5 -5M1243 345l5 5M1249 350l5 -5M1255 345l5 5M1261 345l5 5M1267 345l6 5M1274 345l5 5M1280 345l5 5M1286 345l5 5M1292 345l5 5M1298 350l5 -5M1304 345l5 5M1310 350l5 -5M1316 345l5 5M1322 345l5 5M1328 350l5 -5M1334 350l5 -5M910 351l6 5M917 351l5 5M923 351l5 5M929 351l5 5M935 356l5 -5M941 351l5 5M947 351l5 5M953 356l5 -5M959 351l5 5M965 351l5 5M971 356l5 -5M977 356l5 -5M983 351l5 5M989 351l5 5M995 351l5 5M1001 356l5 -5M1007 351l5 5M1013 356l5 -5M1019 356l5 -5M1025 351l6 5M1032 351l5 5M1038 356l5 -5M1044 351l5 5M1050 351l5 5M1056 356l5 -5M1062 351l5 5M1068 351l5 5M1074 351l5 5M1080 356l5 -5M1086 356l5 -5M1092 356l5 -5M1098 356l5 -5M1104 351l5 5M1110 351l5 5M1116 351l5 5M1122 356l5 -5M1128 356l5 -5M1134 351l5 5M1140 351l5 5M1146 351l5 5M1152 351l6 5M1159 356l5 -5M1165 351l5 5M1171 356l5 -5M1177 356l5 -5M1183 356l5 -5M1189 356l5 -5M1195 351l5 5M1201 351l5 5M1207 351l5 5M1213 351l5 5M1219 356l5 -5M1225 351l5 5M1231 351l5 5M1237 356l5 -5M1243 351l5 5M1249 351l5 5M1255 351l5 5M1261 351l5 5M1267 351l6 5M1274 356l5 -5M1280 356l5 -5M1286 356l5 -5M1292 351l5 5M1298 351l5 5M1304 351l5 5M1310 351l5 5M1316 356l5 -5M1322 351l5 5M1328 351l5 5M1334 351l5 5M898 362l5 -5M904 362l5 -5M910 362l6 -5M917 362l5 -5M923 362l5 -5M929 357l5 5M935 362l5 -5M941 357l5 5M947 357l5 5M953 357l5 5M959 362l5 -5M965 357l5 5M971 357l5 5M977 357l5 5M983 357l5 5M989 362l5 -5M995 357l5 5M1001 357l5 5M1007 357l5 5M1013 362l5 -5M1019 357l5 5M1025 357l6 5M1032 362l5 -5M1038 362l5 -5M1044 362l5 -5M1050 357l5 5M1056 357l5 5M1062 362l5 -5M1068 362l5 -5M1074 362l5 -5M1080 357l5 5M1086 357l5 5M1092 357l5 5M1098 357l5 5M1104 362l5 -5M1110 357l5 5M1116 362l5 -5M1122 357l5 5M1128 362l5 -5M1134 357l5 5M1140 357l5 5M1146 362l5 -5M1152 362l6 -5M1159 357l5 5M1165 357l5 5M1171 357l5 5M1177 357l5 5M1183 357l5 5M1189 357l5 5M1195 357l5 5M1201 357l5 5M1207 357l5 5M1213 362l5 -5M1219 357l5 5M1225 357l5 5M1231 357l5 5M1237 362l5 -5M1243 357l5 5M1249 357l5 5M1255 357l5 5M1261 362l5 -5M1267 357l6 5M1274 357l5 5M1280 357l5 5M1286 357l5 5M1292 357l5 5M1298 362l5 -5M1304 357l5 5M1310 357l5 5M1316 362l5 -5M1322 357l5 5M1328 357l5 5M1334 357l5 5M886 369l5 -6M892 363l5 6M898 363l5 6M904 363l5 6M910 363l6 6M917 369l5 -6M923 369l5 -6M929 363l5 6M935 363l5 6M941 369l5 -6M947 363l5 6M953 363l5 6M959 369l5 -6M965 363l5 6M971 369l5 -6M977 363l5 6M983 369l5 -6M989 363l5 6M995 363l5 6M1001 363l5 6M1007 363l5 6M1013 369l5 -6M1019 369l5 -6M1025 363l6 6M1032 369l5 -6M1038 363l5 6M1044 363l5 6M1050 363l5 6M1056 363l5 6M1062 363l5 6M1068 369l5 -6M1074 363l5 6M1080 363l5 6M1086 369l5 -6M1092 369l5 -6M1098 363l5 6M1104 363l5 6M1110 369l5 -6M1116 369l5 -6M1122 363l5 6M1128 363l5 6M1134 369l5 -6M1140 363l5 6M1146 369l5 -6M1152 369l6 -6M1159 369l5 -6M1165 363l5 6M1171 369l5 -6M1177 363l5 6M1183 363l5 6M1189 369l5 -6M1195 369l5 -6M1201 363l5 6M1207 363l5 6M1213 363l5 6M1219 363l5 6M1225 363l5 6M1231 363l5 6M1237 363l5 6M1243 369l5 -6M1249 369l5 -6M1255 363l5 6M1261 363l5 6M1267 369l6 -6M1274 363l5 6M1280 369l5 -6M1286 363l5 6M1292 363l5 6M1298 363l5 6M1304 369l5 -6M1310 363l5 6M1316 363l5 6M1322 363l5 6M1328 363l5 6M874 375l5 -5M880 370l5 5M886 370l5 5M892 370l5 5M898 370l5 5M904 370l5 5M910 370l6 5M917 375l5 -5M923 375l5 -5M929 370l5 5M935 370l5 5M941 370l5 5M947 370l5 5M953 370l5 5M959 370l5 5M965 370l5 5M971 370l5 5M977 370l5 5M983 370l5 5M989 375l5 -5M995 370l5 5M1001 375l5 -5M1007 375l5 -5M1013 370l5 5M1019 370l5 5M1025 370l6 5M1032 370l5 5M1038 375l5 -5M1044 370l5 5M1050 375l5 -5M1056 375l5 -5M1062 375l5 -5M1068 375l5 -5M1074 370l5 5M1080 375l5 -5M1086 370l5 5M1092 375l5 -5M1098 375l5 -5M1104 370l5 5M1110 375l5 -5M1116 375l5 -5M1122 370l5 5M1128 370l5 5M1134 375l5 -5M1140 370l5 5M1146 375l5 -5M1152 370l6 5M1159 375l5 -5M1165 370l5 5M1171 370l5 5M1177 375l5 -5M1183 370l5 5M1189 370l5 5M1195 370l5 5M1201 370l5 5M1207 370l5 5M1213 370l5 5M1219 370l5 5M1225 375l5 -5M1231 375l5 -5M1237 375l5 -5M1243 370l5 5M1249 375l5 -5M1255 370l5 5M1261 370l5 5M1267 375l6 -5M1274 370l5 5M1280 375l5 -5M1286 370l5 5M1292 370l5 5M1298 375l5 -5M1304 370l5 5M1310 375l5 -5M1316 375l5 -5M1322 370l5 5M1328 375l5 -5M868 376l5 5M874 381l5 -5M880 376l5 5M886 376l5 5M892 381l5 -5M898 376l5 5M904 376l5 5M910 381l6 -5M917 376l5 5M923 381l5 -5M929 376l5 5M935 381l5 -5M941 381l5 -5M947 376l5 5M953 381l5 -5M959 376l5 5M965 376l5 5M971 376l5 5M977 376l5 5M983 376l5 5M989 376l5 5M995 376l5 5M1001 381l5 -5M1007 376l5 5M1013 376l5 5M1019 381l5 -5M1025 376l6 5M1032 376l5 5M1038 376l5 5M1044 376l5 5M1050 376l5 5M1056 376l5 5M1062 376l5 5M1068 376l5 5M1074 376l5 5M1080 381l5 -5M1086 376l5 5M1092 376l5 5M1098 381l5 -5M1104 376l5 5M1110 376l5 5M1116 376l5 5M1122 381l5 -5M1128 381l5 -5M1134 381l5 -5M1140 376l5 5M1146 376l5 5M1152 376l6 5M1159 381l5 -5M1165 376l5 5M1171 376l5 5M1177 381l5 -5M1183 376l5 5M1189 381l5 -5M1195 381l5 -5M1201 376l5 5M1207 381l5 -5M1213 376l5 5M1219 376l5 5M1225 376l5 5M1231 376l5 5M1237 376l5 5M1243 381l5 -5M1249 376l5 5M1255 376l5 5M1261 381l5 -5M1267 376l6 5M1274 376l5 5M1280 376l5 5M1286 376l5 5M1292 381l5 -5M1298 381l5 -5M1304 376l5 5M1310 376l5 5M1316 376l5 5M1322 376l5 5M1328 381l5 -5M862 387l5 -5M868 387l5 -5M874 382l5 5M880 387l5 -5M886 387l5 -5M892 382l5 5M898 387l5 -5M904 382l5 5M910 382l6 5M917 382l5 5M923 382l5 5M929 382l5 5M935 382l5 5M941 387l5 -5M947 387l5 -5M953 387l5 -5M959 387l5 -5M965 382l5 5M971 382l5 5M977 382l5 5M983 387l5 -5M989 382l5 5M995 382l5 5M1001 387l5 -5M1007 387l5 -5M1013 382l5 5M1019 387l5 -5M1025 382l6 5M1032 382l5 5M1038 382l5 5M1044 387l5 -5M1050 387l5 -5M1056 387l5 -5M1062 382l5 5M1068 387l5 -5M1074 382l5 5M1080 382l5 5M1086 387l5 -5M1092 387l5 -5M1098 387l5 -5M1104 387l5 -5M1110 387l5 -5M1116 382l5 5M1122 387l5 -5M1128 387l5 -5M1134 387l5 -5M1140 382l5 5M1146 387l5 -5M1152 382l6 5M1159 382l5 5M1165 382l5 5M1171 387l5 -5M1177 382l5 5M1183 387l5 -5M1189 382l5 5M1195 382l5 5M1201 382l5 5M1207 387l5 -5M1213 382l5 5M1219 382l5 5M1225 382l5 5M1231 382l5 5M1237 387l5 -5M1243 387l5 -5M1249 387l5 -5M1255 387l5 -5M1261 382l5 5M1267 382l6 5M1274 382l5 5M1280 387l5 -5M1286 387l5 -5M1292 387l5 -5M1298 382l5 5M1304 387l5 -5M1310 387l5 -5M1316 387l5 -5M1322 382l5 5M850 388l5 5M856 388l5 5M862 388l5 5M868 393l5 -5M874 393l5 -5M880 393l5 -5M886 393l5 -5M892 393l5 -5M898 388l5 5M904 388l5 5M910 388l6 5M917 393l5 -5M923 388l5 5M929 388l5 5M935 388l5 5M941 388l5 5M947 388l5 5M953 388l5 5M959 393l5 -5M965 388l5 5M971 388l5 5M977 393l5 -5M983 388l5 5M989 393l5 -5M995 388l5 5M1001 388l5 5M1007 388l5 5M1013 388l5 5M1019 393l5 -5M1025 388l6 5M1032 393l5 -5M1038 388l5 5M1044 388l5 5M1050 393l5 -5M1056 388l5 5M1062 393l5 -5M1068 388l5 5M1074 388l5 5M1080 388l5 5M1086 393l5 -5M1092 393l5 -5M1098 388l5 5M1104 388l5 5M1110 388l5 5M1116 393l5 -5M1122 388l5 5M1128 388l5 5M1134 388l5 5M1140 393l5 -5M1146 388l5 5M1152 393l6 -5M1159 388l5 5M1165 388l5 5M1171 393l5 -5M1177 388l5 5M1183 388l5 5M1189 393l5 -5M1195 388l5 5M1201 393l5 -5M1207 393l5 -5M1213 393l5 -5M1219 393l5 -5M1225 388l5 5M1231 388l5 5M1237 388l5 5M1243 393l5 -5M1249 388l5 5M1255 393l5 -5M1261 388l5 5M1267 388l6 5M1274 388l5 5M1280 393l5 -5M1286 388l5 5M1292 388l5 5M1298 393l5 -5M1304 388l5 5M1310 388l5 5M1316 388l5 5M832 399l5 -5M838 399l5 -5M844 399l5 -5M850 394l5 5M856 394l5 5M862 394l5 5M868 399l5 -5M874 399l5 -5M880 399l5 -5M886 394l5 5M892 394l5 5M898 399l5 -5M904 394l5 5M910 394l6 5M917 394l5 5M923 399l5 -5M929 394l5 5M935 394l5 5M941 394l5 5M947 399l5 -5M953 399l5 -5M959 394l5 5M965 394l5 5M971 394l5 5M977 394l5 5M983 394l5 5M989 394l5 5M995 394l5 5M1001 394l5 5M1007 399l5 -5M1013 399l5 -5M1019 394l5 5M1025 399l6 -5M1032 394l5 5M1038 394l5 5M1044 399l5 -5M1050 399l5 -5M1056 399l5 -5M1062 394l5 5M1068 394l5 5M1074 399l5 -5M1080 394l5 5M1086 394l5 5M1092 394l5 5M1098 394l5 5M1104 394l5 5M1110 399l5 -5M1116 399l5 -5M1122 394l5 5M1128 399l5 -5M1134 394l5 5M1140 394l5 5M1146 394l5 5M1152 394l6 5M1159 399l5 -5M1165 399l5 -5M1171 394l5 5M1177 394l5 5M1183 399l5 -5M1189 394l5 5M1195 394l5 5M1201 399l5 -5M1207 399l5 -5M1213 399l5 -5M1219 399l5 -5M1225 399l5 -5M1231 399l5 -5M1237 399l5 -5M1243 394l5 5M1249 394l5 5M1255 399l5 -5M1261 394l5 5M1267 394l6 5M1274 399l5 -5M1280 399l5 -5M1286 399l5 -5M1292 394l5 5M1298 394l5 5M1304 394l5 5M1310 399l5 -5M820 400l5 5M826 405l5 -5M832 405l5 -5M838 400l5 5M844 405l5 -5M850 405l5 -5M856 400l5 5M862 400l5 5M868 405l5 -5M874 400l5 5M880 400l5 5M886 400l5 5M892 405l5 -5M898 405l5 -5M904 400l5 5M910 400l6 5M917 400l5 5M923 400l5 5M929 405l5 -5M935 400l5 5M941 405l5 -5M947 405l5 -5M953 400l5 5M959 400l5 5M965 405l5 -5M971 400l5 5M977 405l5 -5M983 400l5 5M989 405l5 -5M995 400l5 5M1001 405l5 -5M1007 400l5 5M1013 400l5 5M1019 400l5 5M1025 400l6 5M1032 400l5 5M1038 400l5 5M1044 400l5 5M1050 405l5 -5M1056 400l5 5M1062 400l5 5M1068 400l5 5M1074 405l5 -5M1080 405l5 -5M1086 400l5 5M1092 400l5 5M1098 405l5 -5M1104 400l5 5M1110 400l5 5M1116 400l5 5M1122 405l5 -5M1128 405l5 -5M1134 405l5 -5M1140 400l5 5M1146 400l5 5M1152 400l6 5M1159 405l5 -5M1165 400l5 5M1171 405l5 -5M1177 405l5 -5M1183 405l5 -5M1189 400l5 5M1195 400l5 5M1201 400l5 5M1207 400l5 5M1213 405l5 -5M1219 400l5 5M1225 405l5 -5M1231 400l5 5M1237 400l5 5M1243 400l5 5M1249 400l5 5M1255 400l5 5M1261 400l5 5M1267 405l6 -5M1274 400l5 5M1280 400l5 5M1298 400l5 5M1304 400l5 5M808 406l5 5M814 411l5 -5M820 411l5 -5M826 406l5 5M832 411l5 -5M838 411l5 -5M844 406l5 5M850 411l5 -5M856 411l5 -5M862 411l5 -5M868 406l5 5M874 411l5 -5M880 411l5 -5M886 406l5 5M892 406l5 5M898 411l5 -5M904 411l5 -5M910 406l6 5M917 406l5 5M923 406l5 5M929 406l5 5M935 411l5 -5M941 406l5 5M947 406l5 5M953 411l5 -5M959 411l5 -5M965 406l5 5M971 411l5 -5M977 406l5 5M983 411l5 -5M989 411l5 -5M995 411l5 -5M1001 411l5 -5M1007 411l5 -5M1013 406l5 5M1019 411l5 -5M1025 406l6 5M1032 411l5 -5M1038 406l5 5M1044 411l5 -5M1050 406l5 5M1056 406l5 5M1062 406l5 5M1068 406l5 5M1074 406l5 5M1080 406l5 5M1086 406l5 5M1092 406l5 5M1098 406l5 5M1104 406l5 5M1110 406l5 5M1116 411l5 -5M1122 406l5 5M1128 411l5 -5M1134 406l5 5M1140 406l5 5M1146 411l5 -5M1152 411l6 -5M1159 406l5 5M1165 406l5 5M1171 411l5 -5M1177 406l5 5M1183 411l5 -5M1189 411l5 -5M1195 406l5 5M1201 406l5 5M1207 411l5 -5M1213 411l5 -5M1219 406l5 5M1225 411l5 -5M1231 406l5 5M1237 406l5 5M1243 411l5 -5M1249 406l5 5M1255 411l5 -5M1261 411l5 -5M1267 406l6 5M802 417l5 -5M808 412l5 5M814 412l5 5M820 412l5 5M826 417l5 -5M832 412l5 5M838 412l5 5M844 412l5 5M850 412l5 5M856 417l5 -5M862 412l5 5M868 417l5 -5M874 412l5 5M880 412l5 5M886 412l5 5M892 412l5 5M898 417l5 -5M904 417l5 -5M910 417l6 -5M917 412l5 5M923 412l5 5M929 412l5 5M935 412l5 5M941 417l5 -5M947 417l5 -5M953 412l5 5M959 417l5 -5M965 417l5 -5M971 412l5 5M977 412l5 5M983 412l5 5M989 412l5 5M995 412l5 5M1001 417l5 -5M1007 412l5 5M1013 417l5 -5M1019 417l5 -5M1025 417l6 -5M1032 412l5 5M1038 412l5 5M1044 417l5 -5M1050 417l5 -5M1056 412l5 5M1062 417l5 -5M1068 412l5 5M1074 417l5 -5M1080 412l5 5M1086 417l5 -5M1092 412l5 5M1098 412l5 5M1104 412l5 5M1110 417l5 -5M1116 417l5 -5M1122 417l5 -5M1128 412l5 5M1134 417l5 -5M1140 417l5 -5M1146 412l5 5M1152 412l6 5M1159 412l5 5M1165 412l5 5M1171 412l5 5M1177 412l5 5M1183 417l5 -5M1189 417l5 -5M1195 412l5 5M1201 412l5 5M1207 412l5 5M1213 412l5 5M1219 417l5 -5M1225 412l5 5M1231 417l5 -5M1237 412l5 5M1243 412l5 5M1249 412l5 5M790 418l5 5M796 423l5 -5M802 423l5 -5M808 418l5 5M814 418l5 5M820 418l5 5M826 423l5 -5M832 418l5 5M838 418l5 5M844 418l5 5M850 418l5 5M856 423l5 -5M862 418l5 5M868 423l5 -5M874 418l5 5M880 423l5 -5M886 418l5 5M892 418l5 5M898 423l5 -5M904 418l5 5M910 423l6 -5M917 418l5 5M923 418l5 5M929 423l5 -5M935 423l5 -5M941 423l5 -5M947 423l5 -5M953 418l5 5M959 423l5 -5M965 423l5 -5M971 418l5 5M977 423l5 -5M983 418l5 5M989 423l5 -5M995 423l5 -5M1001 418l5 5M1007 418l5 5M1013 423l5 -5M1019 423l5 -5M1025 418l6 5M1032 418l5 5M1038 423l5 -5M1044 418l5 5M1050 423l5 -5M1056 418l5 5M1062 418l5 5M1068 418l5 5M1074 418l5 5M1080 418l5 5M1086 423l5 -5M1092 418l5 5M1098 423l5 -5M1104 418l5 5M1110 423l5 -5M1116 423l5 -5M1122 418l5 5M1128 418l5 5M1134 423l5 -5M1140 423l5 -5M1146 423l5 -5M1152 418l6 5M1159 418l5 5M1165 418l5 5M1171 423l5 -5M1177 423l5 -5M1183 423l5 -5M1189 418l5 5M1195 418l5 5M1201 423l5 -5M1207 423l5 -5M1213 418l5 5M1219 418l5 5M1225 418l5 5M1231 423l5 -5M771 424l5 5M777 429l5 -5M783 424l6 5M790 429l5 -5M796 429l5 -5M802 424l5 5M808 424l5 5M814 424l5 5M820 424l5 5M826 424l5 5M832 429l5 -5M838 429l5 -5M844 424l5 5M850 429l5 -5M856 429l5 -5M862 429l5 -5M868 424l5 5M874 424l5 5M880 429l5 -5M886 429l5 -5M892 429l5 -5M898 429l5 -5M904 424l5 5M910 424l6 5M917 424l5 5M923 429l5 -5M929 424l5 5M935 429l5 -5M941 429l5 -5M947 424l5 5M953 424l5 5M959 429l5 -5M965 424l5 5M971 424l5 5M977 424l5 5M983 429l5 -5M989 429l5 -5M995 424l5 5M1001 424l5 5M1007 429l5 -5M1013 429l5 -5M1019 424l5 5M1025 424l6 5M1032 429l5 -5M1038 429l5 -5M1044 424l5 5M1050 424l5 5M1056 424l5 5M1062 424l5 5M1068 424l5 5M1074 424l5 5M1080 429l5 -5M1086 424l5 5M1092 424l5 5M1098 424l5 5M1104 424l5 5M1110 424l5 5M1116 424l5 5M1122 429l5 -5M1128 424l5 5M1134 424l5 5M1140 429l5 -5M1146 429l5 -5M1152 424l6 5M1159 424l5 5M1165 424l5 5M1171 424l5 5M1177 424l5 5M1183 424l5 5M1189 429l5 -5M1195 429l5 -5M1201 424l5 5M753 430l5 5M759 430l5 5M765 435l5 -5M771 430l5 5M777 435l5 -5M783 435l6 -5M790 435l5 -5M796 435l5 -5M802 430l5 5M808 430l5 5M814 430l5 5M820 430l5 5M826 430l5 5M832 430l5 5M838 430l5 5M844 435l5 -5M850 430l5 5M856 435l5 -5M862 435l5 -5M868 430l5 5M874 430l5 5M880 430l5 5M886 430l5 5M892 435l5 -5M898 430l5 5M904 430l5 5M910 435l6 -5M917 435l5 -5M923 435l5 -5M929 430l5 5M935 430l5 5M941 430l5 5M947 435l5 -5M953 435l5 -5M959 430l5 5M965 430l5 5M971 430l5 5M977 430l5 5M983 435l5 -5M989 435l5 -5M995 435l5 -5M1001 430l5 5M1007 435l5 -5M1013 435l5 -5M1019 435l5 -5M1025 435l6 -5M1032 430l5 5M1038 430l5 5M1044 435l5 -5M1050 435l5 -5M1056 435l5 -5M1062 430l5 5M1068 430l5 5M1074 435l5 -5M1080 430l5 5M1086 430l5 5M1092 430l5 5M1098 430l5 5M1104 430l5 5M1110 430l5 5M1116 430l5 5M1122 430l5 5M1128 435l5 -5M1134 430l5 5M1140 435l5 -5M1146 430l5 5M1152 430l6 5M1159 435l5 -5M1165 430l5 5M1171 435l5 -5M1177 435l5 -5M1183 435l5 -5M1189 430l5 5M735 436l5 5M741 436l5 5M747 441l5 -5M753 441l5 -5M759 441l5 -5M765 436l5 5M771 436l5 5M777 441l5 -5M783 436l6 5M790 441l5 -5M796 436l5 5M802 436l5 5M808 436l5 5M814 441l5 -5M820 436l5 5M826 436l5 5M832 441l5 -5M838 436l5 5M844 436l5 5M850 436l5 5M856 436l5 5M862 441l5 -5M868 436l5 5M874 436l5 5M880 436l5 5M886 436l5 5M892 441l5 -5M898 436l5 5M904 441l5 -5M910 436l6 5M917 441l5 -5M923 441l5 -5M929 436l5 5M935 436l5 5M941 436l5 5M947 436l5 5M953 436l5 5M959 436l5 5M965 441l5 -5M971 441l5 -5M977 441l5 -5M983 436l5 5M989 436l5 5M995 441l5 -5M1001 436l5 5M1007 441l5 -5M1013 436l5 5M1019 441l5 -5M1025 436l6 5M1032 441l5 -5M1038 436l5 5M1044 436l5 5M1050 436l5 5M1056 441l5 -5M1062 436l5 5M1068 436l5 5M1074 436l5 5M1080 441l5 -5M1086 436l5 5M1092 436l5 5M1098 436l5 5M1104 436l5 5M1110 441l5 -5M1116 441l5 -5M1122 436l5 5M1128 436l5 5M1134 436l5 5M1140 436l5 5M1146 436l5 5M1152 436l6 5M1159 436l5 5M1165 436l5 5M1171 441l5 -5M717 447l5 -5M723 442l5 5M729 442l5 5M735 442l5 5M741 447l5 -5M747 442l5 5M753 447l5 -5M759 442l5 5M765 447l5 -5M771 442l5 5M777 447l5 -5M783 447l6 -5M790 442l5 5M796 442l5 5M802 447l5 -5M808 442l5 5M814 447l5 -5M820 442l5 5M826 442l5 5M832 447l5 -5M838 442l5 5M844 442l5 5M850 442l5 5M856 442l5 5M862 442l5 5M868 442l5 5M874 442l5 5M880 442l5 5M886 442l5 5M892 447l5 -5M898 447l5 -5M904 447l5 -5M910 442l6 5M917 447l5 -5M923 442l5 5M929 447l5 -5M935 442l5 5M941 447l5 -5M947 447l5 -5M953 442l5 5M959 442l5 5M965 442l5 5M971 442l5 5M977 442l5 5M983 447l5 -5M989 442l5 5M995 442l5 5M1001 442l5 5M1007 442l5 5M1013 447l5 -5M1019 442l5 5M1025 442l6 5M1032 447l5 -5M1038 442l5 5M1044 442l5 5M1050 442l5 5M1056 442l5 5M1062 442l5 5M1068 447l5 -5M1074 442l5 5M1080 447l5 -5M1086 447l5 -5M1092 442l5 5M1098 442l5 5M1104 442l5 5M1110 442l5 5M1116 442l5 5M1122 442l5 5M1128 442l5 5M1134 442l5 5M1140 442l5 5M1146 447l5 -5M1152 442l6 5M1159 442l5 5M693 453l5 -5M699 448l5 5M705 453l5 -5M711 453l5 -5M717 448l5 5M723 448l5 5M729 453l5 -5M735 448l5 5M741 448l5 5M747 453l5 -5M753 453l5 -5M759 448l5 5M765 448l5 5M771 448l5 5M777 448l5 5M783 453l6 -5M790 453l5 -5M796 453l5 -5M802 453l5 -5M808 453l5 -5M814 448l5 5M820 448l5 5M826 453l5 -5M832 453l5 -5M838 448l5 5M844 448l5 5M850 453l5 -5M856 448l5 5M862 448l5 5M868 448l5 5M874 448l5 5M880 448l5 5M886 448l5 5M892 448l5 5M898 453l5 -5M904 453l5 -5M910 453l6 -5M917 453l5 -5M923 453l5 -5M929 453l5 -5M935 453l5 -5M941 448l5 5M947 453l5 -5M953 448l5 5M959 453l5 -5M965 448l5 5M971 448l5 5M977 453l5 -5M983 453l5 -5M989 448l5 5M995 448l5 5M1001 448l5 5M1007 453l5 -5M1013 448l5 5M1019 448l5 5M1025 453l6 -5M1032 448l5 5M1038 448l5 5M1044 453l5 -5M1050 448l5 5M1056 448l5 5M1062 448l5 5M1068 448l5 5M1074 448l5 5M1080 448l5 5M1086 448l5 5M1092 448l5 5M1098 448l5 5M1104 448l5 5M1110 448l5 5M1116 448l5 5M1122 448l5 5M1128 453l5 -5M1134 448l5 5M1140 448l5 5M1146 453l5 -5M668 454l6 5M675 459l5 -5M681 454l5 5M687 454l5 5M693 454l5 5M699 454l5 5M705 454l5 5M711 454l5 5M717 454l5 5M723 454l5 5M729 454l5 5M735 454l5 5M741 454l5 5M747 454l5 5M753 459l5 -5M759 454l5 5M765 454l5 5M771 454l5 5M777 454l5 5M783 459l6 -5M790 454l5 5M796 459l5 -5M802 454l5 5M808 454l5 5M814 459l5 -5M820 454l5 5M826 454l5 5M832 454l5 5M838 454l5 5M844 459l5 -5M850 454l5 5M856 454l5 5M862 459l5 -5M868 459l5 -5M874 454l5 5M880 454l5 5M886 454l5 5M892 459l5 -5M898 454l5 5M904 459l5 -5M910 459l6 -5M917 454l5 5M923 459l5 -5M929 459l5 -5M935 459l5 -5M941 454l5 5M947 459l5 -5M953 459l5 -5M959 459l5 -5M965 454l5 5M971 459l5 -5M977 454l5 5M983 459l5 -5M989 454l5 5M995 454l5 5M1001 459l5 -5M1007 454l5 5M1013 454l5 5M1019 459l5 -5M1025 459l6 -5M1032 454l5 5M1038 454l5 5M1044 454l5 5M1050 454l5 5M1056 459l5 -5M1062 454l5 5M1068 454l5 5M1074 454l5 5M1080 454l5 5M1086 454l5 5M1092 459l5 -5M1098 459l5 -5M1104 454l5 5M1110 454l5 5M1116 454l5 5M1122 454l5 5M1128 454l5 5M638 460l5 5M644 460l5 5M650 460l5 5M656 465l5 -5M662 460l5 5M668 465l6 -5M675 465l5 -5M681 465l5 -5M687 460l5 5M693 460l5 5M699 465l5 -5M705 460l5 5M711 460l5 5M717 460l5 5M723 460l5 5M729 465l5 -5M735 465l5 -5M741 460l5 5M747 465l5 -5M753 460l5 5M759 460l5 5M765 465l5 -5M771 460l5 5M777 460l5 5M783 460l6 5M790 460l5 5M796 465l5 -5M802 465l5 -5M808 460l5 5M814 460l5 5M820 460l5 5M826 460l5 5M832 460l5 5M838 460l5 5M844 465l5 -5M850 465l5 -5M856 460l5 5M862 460l5 5M868 465l5 -5M874 465l5 -5M880 460l5 5M886 460l5 5M892 465l5 -5M898 460l5 5M904 460l5 5M910 465l6 -5M917 465l5 -5M923 460l5 5M929 460l5 5M935 465l5 -5M941 465l5 -5M947 465l5 -5M953 465l5 -5M959 465l5 -5M965 460l5 5M971 460l5 5M977 460l5 5M983 460l5 5M989 460l5 5M995 460l5 5M1001 460l5 5M1007 465l5 -5M1013 460l5 5M1019 460l5 5M1025 465l6 -5M1032 465l5 -5M1038 460l5 5M1044 460l5 5M1050 465l5 -5M1056 460l5 5M1062 465l5 -5M1068 460l5 5M1074 460l5 5M1080 465l5 -5M1086 460l5 5M1092 465l5 -5M1098 460l5 5M1104 460l5 5M1110 460l5 5M1116 460l5 5M590 471l5 -5M596 466l5 5M602 471l5 -5M608 466l5 5M614 466l5 5M620 466l5 5M626 466l5 5M632 471l5 -5M638 466l5 5M644 466l5 5M650 466l5 5M656 466l5 5M662 471l5 -5M668 466l6 5M675 471l5 -5M681 466l5 5M687 466l5 5M693 471l5 -5M699 466l5 5M705 471l5 -5M711 466l5 5M717 466l5 5M723 466l5 5M729 466l5 5M735 471l5 -5M741 466l5 5M747 466l5 5M753 466l5 5M759 466l5 5M765 466l5 5M771 471l5 -5M777 466l5 5M783 471l6 -5M790 466l5 5M796 471l5 -5M802 466l5 5M808 466l5 5M814 471l5 -5M820 471l5 -5M826 466l5 5M832 471l5 -5M838 471l5 -5M844 466l5 5M850 466l5 5M856 471l5 -5M862 466l5 5M868 471l5 -5M874 466l5 5M880 466l5 5M886 471l5 -5M892 466l5 5M898 466l5 5M904 471l5 -5M910 466l6 5M917 471l5 -5M923 466l5 5M929 466l5 5M935 466l5 5M941 466l5 5M947 471l5 -5M953 466l5 5M959 466l5 5M965 466l5 5M971 466l5 5M977 466l5 5M983 466l5 5M989 466l5 5M995 466l5 5M1001 471l5 -5M1007 466l5 5M1013 466l5 5M1019 466l5 5M1025 466l6 5M1032 466l5 5M1038 466l5 5M1044 471l5 -5M1050 466l5 5M1056 466l5 5M1062 471l5 -5M1068 466l5 5M1074 466l5 5M1080 471l5 -5M1086 466l5 5M1092 466l5 5M1098 471l5 -5M1104 471l5 -5M566 472l5 5M572 472l5 5M578 477l5 -5M584 472l5 5M590 477l5 -5M596 472l5 5M602 477l5 -5M608 472l5 5M614 472l5 5M620 472l5 5M626 472l5 5M632 477l5 -5M638 472l5 5M644 477l5 -5M650 472l5 5M656 472l5 5M662 472l5 5M668 472l6 5M675 472l5 5M681 477l5 -5M687 472l5 5M693 472l5 5M699 472l5 5M705 472l5 5M711 477l5 -5M717 472l5 5M723 477l5 -5M729 472l5 5M735 472l5 5M741 472l5 5M747 472l5 5M753 472l5 5M759 477l5 -5M765 472l5 5M771 477l5 -5M777 472l5 5M783 472l6 5M790 472l5 5M796 472l5 5M802 472l5 5M808 472l5 5M814 472l5 5M820 472l5 5M826 472l5 5M832 477l5 -5M838 472l5 5M844 472l5 5M850 477l5 -5M856 477l5 -5M862 477l5 -5M868 477l5 -5M874 472l5 5M880 472l5 5M886 472l5 5M892 477l5 -5M898 477l5 -5M904 472l5 5M910 472l6 5M917 477l5 -5M923 477l5 -5M929 472l5 5M935 477l5 -5M941 472l5 5M947 477l5 -5M953 472l5 5M959 472l5 5M965 477l5 -5M971 477l5 -5M977 477l5 -5M983 472l5 5M989 472l5 5M995 472l5 5M1001 472l5 5M1007 472l5 5M1013 472l5 5M1019 472l5 5M1025 472l6 5M1032 477l5 -5M1038 472l5 5M1044 477l5 -5M1050 472l5 5M1056 477l5 -5M1062 472l5 5M1068 472l5 5M1074 477l5 -5M1080 472l5 5M1086 472l5 5M1092 477l5 -5M548 483l5 -5M554 478l5 5M560 478l5 5M566 483l5 -5M572 478l5 5M578 478l5 5M584 478l5 5M590 478l5 5M596 483l5 -5M602 478l5 5M608 483l5 -5M614 483l5 -5M620 478l5 5M626 483l5 -5M632 478l5 5M638 483l5 -5M644 483l5 -5M650 478l5 5M656 478l5 5M662 483l5 -5M668 478l6 5M675 483l5 -5M681 483l5 -5M687 483l5 -5M693 483l5 -5M699 483l5 -5M705 478l5 5M711 478l5 5M717 483l5 -5M723 478l5 5M729 478l5 5M735 483l5 -5M741 478l5 5M747 483l5 -5M753 478l5 5M759 483l5 -5M765 483l5 -5M771 478l5 5M777 478l5 5M783 483l6 -5M790 483l5 -5M796 478l5 5M802 478l5 5M808 478l5 5M814 478l5 5M820 478l5 5M826 478l5 5M832 478l5 5M838 478l5 5M844 483l5 -5M850 483l5 -5M856 478l5 5M862 478l5 5M868 478l5 5M874 478l5 5M880 483l5 -5M886 478l5 5M892 478l5 5M898 483l5 -5M904 478l5 5M910 478l6 5M917 478l5 5M923 483l5 -5M929 478l5 5M935 483l5 -5M941 478l5 5M947 483l5 -5M953 478l5 5M959 478l5 5M965 483l5 -5M971 483l5 -5M977 478l5 5M983 478l5 5M989 478l5 5M995 478l5 5M1001 478l5 5M1007 478l5 5M1013 478l5 5M1019 483l5 -5M1025 478l6 5M1032 478l5 5M1038 478l5 5M1044 478l5 5M1050 478l5 5M1056 478l5 5M1062 478l5 5M1068 478l5 5M1074 483l5 -5M1080 483l5 -5M523 484l5 5M529 489l5 -5M535 489l5 -5M541 484l6 5M548 484l5 5M554 484l5 5M560 484l5 5M566 484l5 5M572 484l5 5M578 484l5 5M584 489l5 -5M590 489l5 -5M596 489l5 -5M602 489l5 -5M608 489l5 -5M614 484l5 5M620 484l5 5M626 484l5 5M632 484l5 5M638 489l5 -5M644 489l5 -5M650 484l5 5M656 484l5 5M662 489l5 -5M668 489l6 -5M675 489l5 -5M681 484l5 5M687 489l5 -5M693 489l5 -5M699 489l5 -5M705 484l5 5M711 484l5 5M717 489l5 -5M723 484l5 5M729 484l5 5M735 484l5 5M741 484l5 5M747 489l5 -5M753 484l5 5M759 484l5 5M765 484l5 5M771 489l5 -5M777 489l5 -5M783 489l6 -5M790 489l5 -5M796 489l5 -5M802 484l5 5M808 484l5 5M814 484l5 5M820 484l5 5M826 484l5 5M832 484l5 5M838 489l5 -5M844 484l5 5M850 484l5 5M856 489l5 -5M862 484l5 5M868 484l5 5M874 484l5 5M880 484l5 5M886 489l5 -5M892 484l5 5M898 489l5 -5M904 489l5 -5M910 489l6 -5M917 484l5 5M923 484l5 5M929 489l5 -5M935 484l5 5M941 484l5 5M947 484l5 5M953 484l5 5M959 489l5 -5M965 489l5 -5M971 489l5 -5M977 484l5 5M983 484l5 5M989 484l5 5M995 484l5 5M1001 484l5 5M1007 484l5 5M1013 484l5 5M1019 484l5 5M1025 484l6 5M1032 489l5 -5M1038 489l5 -5M1044 489l5 -5M1050 489l5 -5M1056 489l5 -5M1062 484l5 5M1068 489l5 -5M505 490l5 6M511 496l5 -6M517 490l5 6M523 490l5 6M529 490l5 6M535 496l5 -6M541 490l6 6M548 496l5 -6M554 490l5 6M560 490l5 6M566 496l5 -6M572 490l5 6M578 490l5 6M584 496l5 -6M590 490l5 6M596 490l5 6M602 496l5 -6M608 490l5 6M614 490l5 6M620 490l5 6M626 490l5 6M632 490l5 6M638 490l5 6M644 490l5 6M650 490l5 6M656 496l5 -6M662 490l5 6M668 490l6 6M675 496l5 -6M681 490l5 6M687 490l5 6M693 490l5 6M699 490l5 6M705 490l5 6M711 490l5 6M717 490l5 6M723 490l5 6M729 490l5 6M735 490l5 6M741 490l5 6M747 490l5 6M753 490l5 6M759 490l5 6M765 490l5 6M771 496l5 -6M777 490l5 6M783 496l6 -6M790 496l5 -6M796 490l5 6M802 496l5 -6M808 496l5 -6M814 490l5 6M820 496l5 -6M826 490l5 6M832 490l5 6M838 496l5 -6M844 490l5 6M850 496l5 -6M856 490l5 6M862 496l5 -6M868 490l5 6M874 490l5 6M880 490l5 6M886 490l5 6M892 490l5 6M898 490l5 6M904 490l5 6M910 496l6 -6M917 490l5 6M923 496l5 -6M929 496l5 -6M935 496l5 -6M941 490l5 6M947 496l5 -6M953 496l5 -6M959 490l5 6M965 496l5 -6M971 490l5 6M977 496l5 -6M983 496l5 -6M989 496l5 -6M995 490l5 6M1001 490l5 6M1007 496l5 -6M1013 496l5 -6M1019 496l5 -6M1025 490l6 6M1032 490l5 6M1038 490l5 6M1044 490l5 6M1050 496l5 -6M1056 490l5 6M493 502l5 -5M499 502l5 -5M505 497l5 5M511 497l5 5M517 497l5 5M523 502l5 -5M529 497l5 5M535 497l5 5M541 497l6 5M548 497l5 5M554 502l5 -5M560 497l5 5M566 497l5 5M572 497l5 5M578 502l5 -5M584 497l5 5M590 497l5 5M596 502l5 -5M602 497l5 5M608 502l5 -5M614 502l5 -5M620 502l5 -5M626 497l5 5M632 497l5 5M638 497l5 5M644 497l5 5M650 502l5 -5M656 502l5 -5M662 497l5 5M668 497l6 5M675 502l5 -5M681 502l5 -5M687 497l5 5M693 497l5 5M699 497l5 5M705 502l5 -5M711 497l5 5M717 502l5 -5M723 497l5 5M729 497l5 5M735 497l5 5M741 497l5 5M747 502l5 -5M753 497l5 5M759 497l5 5M765 497l5 5M771 497l5 5M777 497l5 5M783 497l6 5M790 497l5 5M796 497l5 5M802 497l5 5M808 497l5 5M814 497l5 5M820 497l5 5M826 497l5 5M832 502l5 -5M838 497l5 5M844 497l5 5M850 502l5 -5M856 497l5 5M862 497l5 5M868 497l5 5M874 497l5 5M880 497l5 5M886 497l5 5M892 502l5 -5M898 502l5 -5M904 497l5 5M910 497l6 5M917 502l5 -5M923 502l5 -5M929 502l5 -5M935 502l5 -5M941 502l5 -5M947 497l5 5M953 497l5 5M959 502l5 -5M965 502l5 -5M971 502l5 -5M977 502l5 -5M983 497l5 5M989 502l5 -5M995 502l5 -5M1001 497l5 5M1007 502l5 -5M1013 497l5 5M1019 497l5 5M1025 497l6 5M1032 497l5 5M1038 497l5 5M1044 497l5 5M481 508l5 -5M487 503l5 5M493 503l5 5M499 503l5 5M505 503l5 5M511 503l5 5M517 503l5 5M523 503l5 5M529 508l5 -5M535 503l5 5M541 503l6 5M548 503l5 5M554 503l5 5M560 503l5 5M566 503l5 5M572 503l5 5M578 503l5 5M584 508l5 -5M590 503l5 5M596 508l5 -5M602 503l5 5M608 508l5 -5M614 503l5 5M620 503l5 5M626 503l5 5M632 503l5 5M638 508l5 -5M644 503l5 5M650 508l5 -5M656 503l5 5M662 508l5 -5M668 503l6 5M675 503l5 5M681 508l5 -5M687 503l5 5M693 503l5 5M699 503l5 5M705 503l5 5M711 503l5 5M717 508l5 -5M723 503l5 5M729 503l5 5M735 503l5 5M741 503l5 5M747 508l5 -5M753 508l5 -5M759 503l5 5M765 508l5 -5M771 508l5 -5M777 503l5 5M783 503l6 5M790 508l5 -5M796 508l5 -5M802 503l5 5M808 503l5 5M814 503l5 5M820 503l5 5M826 508l5 -5M832 508l5 -5M838 508l5 -5M844 503l5 5M850 503l5 5M856 508l5 -5M862 508l5 -5M868 503l5 5M874 508l5 -5M880 503l5 5M886 503l5 5M892 503l5 5M898 503l5 5M904 508l5 -5M910 503l6 5M917 503l5 5M923 503l5 5M929 503l5 5M935 503l5 5M941 503l5 5M947 508l5 -5M953 503l5 5M959 508l5 -5M965 503l5 5M971 503l5 5M977 508l5 -5M983 503l5 5M989 503l5 5M995 503l5 5M1001 503l5 5M1007 508l5 -5M1013 503l5 5M1019 508l5 -5M1025 503l6 5M1032 503l5 5M475 509l5 5M481 509l5 5M487 514l5 -5M493 509l5 5M499 509l5 5M505 514l5 -5M511 509l5 5M517 514l5 -5M523 514l5 -5M529 514l5 -5M535 509l5 5M541 514l6 -5M548 514l5 -5M554 509l5 5M560 509l5 5M566 509l5 5M572 514l5 -5M578 509l5 5M584 509l5 5M590 509l5 5M596 514l5 -5M602 514l5 -5M608 509l5 5M614 514l5 -5M620 509l5 5M626 514l5 -5M632 509l5 5M638 509l5 5M644 509l5 5M650 509l5 5M656 509l5 5M662 509l5 5M668 509l6 5M675 514l5 -5M681 509l5 5M687 509l5 5M693 509l5 5M699 514l5 -5M705 514l5 -5M711 509l5 5M717 509l5 5M723 514l5 -5M729 509l5 5M735 514l5 -5M741 509l5 5M747 514l5 -5M753 509l5 5M759 514l5 -5M765 509l5 5M771 509l5 5M777 514l5 -5M783 509l6 5M790 514l5 -5M796 509l5 5M802 514l5 -5M808 509l5 5M814 514l5 -5M820 509l5 5M826 509l5 5M832 509l5 5M838 514l5 -5M844 514l5 -5M850 514l5 -5M856 509l5 5M862 509l5 5M868 509l5 5M874 509l5 5M880 509l5 5M886 509l5 5M892 514l5 -5M898 514l5 -5M904 509l5 5M910 514l6 -5M917 509l5 5M923 509l5 5M929 509l5 5M935 514l5 -5M941 514l5 -5M947 509l5 5M953 514l5 -5M959 514l5 -5M965 509l5 5M971 509l5 5M977 509l5 5M983 514l5 -5M989 509l5 5M995 514l5 -5M1001 509l5 5M1007 509l5 5M1013 509l5 5M1019 514l5 -5M1025 509l6 5M469 520l5 -5M475 515l5 5M481 520l5 -5M487 520l5 -5M493 515l5 5M499 520l5 -5M505 520l5 -5M511 515l5 5M517 515l5 5M523 515l5 5M529 520l5 -5M535 515l5 5M541 520l6 -5M548 515l5 5M554 520l5 -5M560 515l5 5M566 515l5 5M572 520l5 -5M578 515l5 5M584 515l5 5M590 520l5 -5M596 520l5 -5M602 520l5 -5M608 520l5 -5M614 515l5 5M620 515l5 5M626 520l5 -5M632 520l5 -5M638 515l5 5M644 515l5 5M650 515l5 5M656 515l5 5M662 515l5 5M668 515l6 5M675 520l5 -5M681 515l5 5M687 520l5 -5M693 515l5 5M699 515l5 5M705 515l5 5M711 515l5 5M717 515l5 5M723 520l5 -5M729 515l5 5M735 520l5 -5M741 515l5 5M747 515l5 5M753 515l5 5M759 515l5 5M765 520l5 -5M771 515l5 5M777 515l5 5M783 520l6 -5M790 520l5 -5M796 520l5 -5M802 515l5 5M808 515l5 5M814 515l5 5M820 515l5 5M826 515l5 5M832 515l5 5M838 515l5 5M844 515l5 5M850 515l5 5M856 515l5 5M862 520l5 -5M868 520l5 -5M874 515l5 5M880 515l5 5M886 520l5 -5M892 520l5 -5M898 520l5 -5M904 520l5 -5M910 515l6 5M917 515l5 5M923 515l5 5M929 520l5 -5M935 515l5 5M941 515l5 5M947 515l5 5M953 515l5 5M959 520l5 -5M965 515l5 5M971 515l5 5M977 520l5 -5M983 515l5 5M989 515l5 5M995 515l5 5M1001 515l5 5M1007 515l5 5M1013 515l5 5M463 526l5 -5M469 526l5 -5M475 526l5 -5M481 521l5 5M487 526l5 -5M493 521l5 5M499 526l5 -5M505 521l5 5M511 521l5 5M517 526l5 -5M523 521l5 5M529 526l5 -5M535 526l5 -5M541 521l6 5M548 521l5 5M554 526l5 -5M560 521l5 5M566 526l5 -5M572 526l5 -5M578 521l5 5M584 526l5 -5M590 521l5 5M596 521l5 5M602 521l5 5M608 526l5 -5M614 521l5 5M620 526l5 -5M626 521l5 5M632 521l5 5M638 521l5 5M644 521l5 5M650 526l5 -5M656 521l5 5M662 526l5 -5M668 521l6 5M675 521l5 5M681 521l5 5M687 521l5 5M693 526l5 -5M699 521l5 5M705 521l5 5M711 521l5 5M717 526l5 -5M723 521l5 5M729 521l5 5M735 526l5 -5M741 521l5 5M747 526l5 -5M753 526l5 -5M759 526l5 -5M765 526l5 -5M771 521l5 5M777 521l5 5M783 526l6 -5M790 526l5 -5M796 521l5 5M802 521l5 5M808 521l5 5M814 521l5 5M820 521l5 5M826 526l5 -5M832 521l5 5M838 521l5 5M844 521l5 5M850 521l5 5M856 526l5 -5M862 526l5 -5M868 521l5 5M874 521l5 5M880 526l5 -5M886 526l5 -5M892 521l5 5M898 526l5 -5M904 521l5 5M910 521l6 5M917 521l5 5M923 521l5 5M929 521l5 5M935 521l5 5M941 521l5 5M947 521l5 5M953 521l5 5M959 521l5 5M965 521l5 5M971 526l5 -5M977 521l5 5M983 521l5 5M989 521l5 5M995 526l5 -5M1001 521l5 5M457 532l5 -5M463 532l5 -5M469 527l5 5M475 527l5 5M481 532l5 -5M487 527l5 5M493 527l5 5M499 527l5 5M505 527l5 5M511 527l5 5M517 532l5 -5M523 527l5 5M529 527l5 5M535 532l5 -5M541 532l6 -5M548 527l5 5M554 527l5 5M560 527l5 5M566 532l5 -5M572 527l5 5M578 532l5 -5M584 532l5 -5M590 527l5 5M596 532l5 -5M602 527l5 5M608 527l5 5M614 532l5 -5M620 527l5 5M626 527l5 5M632 527l5 5M638 532l5 -5M644 532l5 -5M650 527l5 5M656 527l5 5M662 527l5 5M668 527l6 5M675 532l5 -5M681 527l5 5M687 527l5 5M693 532l5 -5M699 527l5 5M705 527l5 5M711 527l5 5M717 532l5 -5M723 532l5 -5M729 532l5 -5M735 527l5 5M741 527l5 5M747 532l5 -5M753 527l5 5M759 532l5 -5M765 532l5 -5M771 527l5 5M777 527l5 5M783 527l6 5M790 532l5 -5M796 527l5 5M802 527l5 5M808 532l5 -5M814 527l5 5M820 527l5 5M826 532l5 -5M832 532l5 -5M838 527l5 5M844 527l5 5M850 532l5 -5M856 527l5 5M862 527l5 5M868 532l5 -5M874 532l5 -5M880 532l5 -5M886 527l5 5M892 527l5 5M898 527l5 5M904 527l5 5M910 532l6 -5M917 527l5 5M923 527l5 5M929 527l5 5M935 527l5 5M941 532l5 -5M947 527l5 5M953 527l5 5M959 527l5 5M965 527l5 5M971 527l5 5M977 532l5 -5M983 532l5 -5M989 532l5 -5M451 533l5 5M457 533l5 5M463 533l5 5M469 533l5 5M475 533l5 5M481 533l5 5M487 533l5 5M493 533l5 5M499 533l5 5M505 538l5 -5M511 533l5 5M517 538l5 -5M523 533l5 5M529 533l5 5M535 533l5 5M541 533l6 5M548 533l5 5M554 533l5 5M560 533l5 5M566 533l5 5M572 538l5 -5M578 533l5 5M584 538l5 -5M590 538l5 -5M596 533l5 5M602 533l5 5M608 538l5 -5M614 533l5 5M620 538l5 -5M626 533l5 5M632 533l5 5M638 538l5 -5M644 533l5 5M650 538l5 -5M656 533l5 5M662 533l5 5M668 533l6 5M675 538l5 -5M681 533l5 5M687 538l5 -5M693 533l5 5M699 538l5 -5M705 538l5 -5M711 533l5 5M717 533l5 5M723 538l5 -5M729 533l5 5M735 538l5 -5M741 533l5 5M747 533l5 5M753 533l5 5M759 538l5 -5M765 538l5 -5M771 533l5 5M777 538l5 -5M783 533l6 5M790 538l5 -5M796 538l5 -5M802 533l5 5M808 533l5 5M814 538l5 -5M820 533l5 5M826 538l5 -5M832 533l5 5M838 533l5 5M844 533l5 5M850 533l5 5M856 533l5 5M862 533l5 5M868 538l5 -5M874 533l5 5M880 538l5 -5M886 533l5 5M892 538l5 -5M898 538l5 -5M904 533l5 5M910 533l6 5M917 533l5 5M923 538l5 -5M929 533l5 5M935 533l5 5M941 533l5 5M947 533l5 5M953 538l5 -5M959 533l5 5M965 538l5 -5M971 533l5 5M977 538l5 -5M451 539l5 5M457 544l5 -5M463 544l5 -5M469 544l5 -5M475 539l5 5M481 539l5 5M487 539l5 5M493 544l5 -5M499 539l5 5M505 544l5 -5M511 539l5 5M517 539l5 5M523 544l5 -5M529 539l5 5M535 539l5 5M541 539l6 5M548 539l5 5M554 539l5 5M560 544l5 -5M566 544l5 -5M572 539l5 5M578 544l5 -5M584 539l5 5M590 539l5 5M596 544l5 -5M602 539l5 5M608 544l5 -5M614 544l5 -5M620 539l5 5M626 539l5 5M632 539l5 5M638 539l5 5M644 544l5 -5M650 539l5 5M656 544l5 -5M662 539l5 5M668 539l6 5M675 539l5 5M681 539l5 5M687 539l5 5M693 544l5 -5M699 539l5 5M705 539l5 5M711 539l5 5M717 539l5 5M723 539l5 5M729 544l5 -5M735 539l5 5M741 539l5 5M747 539l5 5M753 539l5 5M759 544l5 -5M765 539l5 5M771 539l5 5M777 544l5 -5M783 539l6 5M790 544l5 -5M796 544l5 -5M802 539l5 5M808 539l5 5M814 539l5 5M820 544l5 -5M826 539l5 5M832 539l5 5M838 539l5 5M844 539l5 5M850 539l5 5M856 539l5 5M862 539l5 5M868 539l5 5M874 539l5 5M880 539l5 5M886 539l5 5M892 539l5 5M898 539l5 5M904 539l5 5M910 544l6 -5M917 539l5 5M923 544l5 -5M929 539l5 5M935 544l5 -5M941 539l5 5M947 544l5 -5M953 539l5 5M959 544l5 -5M965 539l5 5M971 544l5 -5M445 545l5 5M451 545l5 5M457 545l5 5M463 545l5 5M469 545l5 5M475 545l5 5M481 550l5 -5M487 545l5 5M493 545l5 5M499 545l5 5M505 545l5 5M511 550l5 -5M517 550l5 -5M523 545l5 5M529 545l5 5M535 545l5 5M541 550l6 -5M548 545l5 5M554 545l5 5M560 550l5 -5M566 550l5 -5M572 545l5 5M578 550l5 -5M584 545l5 5M590 550l5 -5M596 545l5 5M602 550l5 -5M608 545l5 5M614 545l5 5M620 545l5 5M626 545l5 5M632 550l5 -5M638 550l5 -5M644 545l5 5M650 545l5 5M656 545l5 5M662 545l5 5M668 545l6 5M675 545l5 5M681 550l5 -5M687 550l5 -5M693 550l5 -5M699 545l5 5M705 545l5 5M711 550l5 -5M717 550l5 -5M723 550l5 -5M729 550l5 -5M735 545l5 5M741 550l5 -5M747 550l5 -5M753 550l5 -5M759 545l5 5M765 550l5 -5M771 545l5 5M777 545l5 5M783 550l6 -5M790 550l5 -5M796 550l5 -5M802 545l5 5M808 550l5 -5M814 550l5 -5M820 550l5 -5M826 550l5 -5M832 550l5 -5M838 550l5 -5M844 545l5 5M850 545l5 5M856 550l5 -5M862 550l5 -5M868 550l5 -5M874 545l5 5M880 550l5 -5M886 545l5 5M892 550l5 -5M898 545l5 5M904 550l5 -5M910 550l6 -5M917 545l5 5M923 550l5 -5M929 545l5 5M935 545l5 5M941 545l5 5M947 545l5 5M953 545l5 5M959 550l5 -5M439 556l5 -5M445 556l5 -5M451 551l5 5M457 556l5 -5M463 556l5 -5M469 556l5 -5M475 556l5 -5M481 556l5 -5M487 551l5 5M493 551l5 5M499 556l5 -5M505 556l5 -5M511 551l5 5M517 551l5 5M523 556l5 -5M529 556l5 -5M535 551l5 5M541 551l6 5M548 551l5 5M554 551l5 5M560 556l5 -5M566 551l5 5M572 551l5 5M578 551l5 5M584 551l5 5M590 551l5 5M596 551l5 5M602 556l5 -5M608 551l5 5M614 551l5 5M620 551l5 5M626 551l5 5M632 556l5 -5M638 551l5 5M644 556l5 -5M650 556l5 -5M656 551l5 5M662 556l5 -5M668 551l6 5M675 556l5 -5M681 551l5 5M687 551l5 5M693 556l5 -5M699 551l5 5M705 551l5 5M711 556l5 -5M717 551l5 5M723 556l5 -5M729 551l5 5M735 551l5 5M741 556l5 -5M747 551l5 5M753 556l5 -5M759 551l5 5M765 556l5 -5M771 551l5 5M777 551l5 5M783 551l6 5M790 551l5 5M796 556l5 -5M802 551l5 5M808 556l5 -5M814 551l5 5M820 551l5 5M826 551l5 5M832 551l5 5M838 556l5 -5M844 551l5 5M850 551l5 5M856 556l5 -5M862 556l5 -5M868 556l5 -5M874 551l5 5M880 556l5 -5M886 551l5 5M892 556l5 -5M898 551l5 5M904 556l5 -5M910 556l6 -5M917 551l5 5M923 551l5 5M929 556l5 -5M935 556l5 -5M941 551l5 5M433 557l5 5M439 562l5 -5M445 557l5 5M451 562l5 -5M457 562l5 -5M463 557l5 5M469 557l5 5M475 562l5 -5M481 562l5 -5M487 562l5 -5M493 562l5 -5M499 557l5 5M505 557l5 5M511 557l5 5M517 562l5 -5M523 562l5 -5M529 557l5 5M535 557l5 5M541 557l6 5M548 557l5 5M554 557l5 5M560 562l5 -5M566 562l5 -5M572 557l5 5M578 562l5 -5M584 557l5 5M590 557l5 5M596 557l5 5M602 562l5 -5M608 562l5 -5M614 562l5 -5M620 562l5 -5M626 557l5 5M632 562l5 -5M638 562l5 -5M644 562l5 -5M650 557l5 5M656 557l5 5M662 557l5 5M668 562l6 -5M675 562l5 -5M681 557l5 5M687 557l5 5M693 557l5 5M699 562l5 -5M705 557l5 5M711 562l5 -5M717 557l5 5M723 557l5 5M729 557l5 5M735 557l5 5M741 557l5 5M747 562l5 -5M753 562l5 -5M759 557l5 5M765 557l5 5M771 562l5 -5M777 557l5 5M783 557l6 5M790 557l5 5M796 557l5 5M802 557l5 5M808 557l5 5M814 557l5 5M820 562l5 -5M826 557l5 5M832 557l5 5M838 562l5 -5M844 557l5 5M850 562l5 -5M856 562l5 -5M862 562l5 -5M868 557l5 5M874 557l5 5M880 562l5 -5M886 557l5 5M892 557l5 5M898 562l5 -5M904 562l5 -5M910 557l6 5M917 557l5 5M923 562l5 -5M929 557l5 5M426 563l6 5M433 568l5 -5M439 563l5 5M445 568l5 -5M451 563l5 5M457 568l5 -5M463 563l5 5M469 563l5 5M475 568l5 -5M481 563l5 5M487 563l5 5M493 563l5 5M499 563l5 5M505 568l5 -5M511 568l5 -5M517 563l5 5M523 568l5 -5M529 563l5 5M535 563l5 5M541 568l6 -5M548 568l5 -5M554 568l5 -5M560 568l5 -5M566 568l5 -5M572 563l5 5M578 568l5 -5M584 568l5 -5M590 563l5 5M596 563l5 5M602 568l5 -5M608 563l5 5M614 563l5 5M620 568l5 -5M626 563l5 5M632 563l5 5M638 568l5 -5M644 568l5 -5M650 563l5 5M656 563l5 5M662 563l5 5M668 563l6 5M675 563l5 5M681 568l5 -5M687 568l5 -5M693 563l5 5M699 563l5 5M705 563l5 5M711 563l5 5M717 568l5 -5M723 568l5 -5M729 568l5 -5M735 563l5 5M741 568l5 -5M747 568l5 -5M753 563l5 5M759 568l5 -5M765 568l5 -5M771 568l5 -5M777 568l5 -5M783 568l6 -5M790 568l5 -5M796 563l5 5M802 568l5 -5M808 568l5 -5M814 563l5 5M820 563l5 5M826 563l5 5M832 563l5 5M838 568l5 -5M844 563l5 5M850 563l5 5M856 563l5 5M862 563l5 5M868 568l5 -5M874 568l5 -5M880 568l5 -5M886 563l5 5M892 568l5 -5M898 563l5 5M904 568l5 -5M910 563l6 5M917 563l5 5M923 568l5 -5M420 569l5 5M426 569l6 5M433 569l5 5M439 569l5 5M445 569l5 5M451 574l5 -5M457 569l5 5M463 574l5 -5M469 569l5 5M475 569l5 5M481 574l5 -5M487 569l5 5M493 569l5 5M499 569l5 5M505 569l5 5M511 574l5 -5M517 569l5 5M523 574l5 -5M529 574l5 -5M535 569l5 5M541 569l6 5M548 574l5 -5M554 569l5 5M560 569l5 5M566 569l5 5M572 569l5 5M578 574l5 -5M584 574l5 -5M590 569l5 5M596 569l5 5M602 569l5 5M608 569l5 5M614 569l5 5M620 574l5 -5M626 574l5 -5M632 574l5 -5M638 574l5 -5M644 569l5 5M650 574l5 -5M656 569l5 5M662 569l5 5M668 569l6 5M675 569l5 5M681 574l5 -5M687 574l5 -5M693 569l5 5M699 569l5 5M705 569l5 5M711 569l5 5M717 569l5 5M723 569l5 5M729 574l5 -5M735 569l5 5M741 569l5 5M747 569l5 5M753 574l5 -5M759 569l5 5M765 569l5 5M771 569l5 5M777 574l5 -5M783 574l6 -5M790 574l5 -5M796 574l5 -5M802 574l5 -5M808 574l5 -5M814 574l5 -5M820 569l5 5M826 569l5 5M832 569l5 5M838 574l5 -5M844 574l5 -5M850 574l5 -5M856 569l5 5M862 569l5 5M868 569l5 5M874 574l5 -5M880 574l5 -5M886 569l5 5M892 569l5 5M898 569l5 5M414 575l5 5M420 580l5 -5M426 580l6 -5M433 575l5 5M439 575l5 5M445 575l5 5M451 575l5 5M457 580l5 -5M463 575l5 5M469 580l5 -5M475 580l5 -5M481 580l5 -5M487 575l5 5M493 580l5 -5M499 575l5 5M505 575l5 5M511 575l5 5M517 575l5 5M523 575l5 5M529 575l5 5M535 575l5 5M541 580l6 -5M548 580l5 -5M554 580l5 -5M560 580l5 -5M566 575l5 5M572 580l5 -5M578 575l5 5M584 580l5 -5M590 580l5 -5M596 575l5 5M602 575l5 5M608 575l5 5M614 575l5 5M620 575l5 5M626 575l5 5M632 580l5 -5M638 580l5 -5M644 575l5 5M650 575l5 5M656 580l5 -5M662 575l5 5M668 575l6 5M675 575l5 5M681 580l5 -5M687 580l5 -5M693 575l5 5M699 580l5 -5M705 575l5 5M711 575l5 5M717 580l5 -5M723 575l5 5M729 575l5 5M735 575l5 5M741 575l5 5M747 575l5 5M753 575l5 5M759 575l5 5M765 580l5 -5M771 580l5 -5M777 575l5 5M783 575l6 5M790 580l5 -5M796 575l5 5M802 575l5 5M808 575l5 5M814 580l5 -5M820 580l5 -5M826 575l5 5M832 580l5 -5M838 580l5 -5M844 575l5 5M850 575l5 5M856 580l5 -5M862 575l5 5M868 575l5 5M874 575l5 5M880 580l5 -5M886 575l5 5M892 575l5 5M408 586l5 -5M414 586l5 -5M420 586l5 -5M426 586l6 -5M433 581l5 5M439 581l5 5M445 586l5 -5M451 586l5 -5M457 581l5 5M463 581l5 5M469 581l5 5M475 586l5 -5M481 581l5 5M487 586l5 -5M493 586l5 -5M499 586l5 -5M505 586l5 -5M511 581l5 5M517 581l5 5M523 581l5 5M529 586l5 -5M535 581l5 5M541 586l6 -5M548 586l5 -5M554 581l5 5M560 586l5 -5M566 581l5 5M572 581l5 5M578 581l5 5M584 586l5 -5M590 586l5 -5M596 586l5 -5M602 581l5 5M608 586l5 -5M614 581l5 5M620 586l5 -5M626 581l5 5M632 581l5 5M638 581l5 5M644 586l5 -5M650 581l5 5M656 581l5 5M662 581l5 5M668 581l6 5M675 581l5 5M681 581l5 5M687 586l5 -5M693 581l5 5M699 586l5 -5M705 586l5 -5M711 581l5 5M717 581l5 5M723 586l5 -5M729 581l5 5M735 581l5 5M741 581l5 5M747 586l5 -5M753 581l5 5M759 581l5 5M765 581l5 5M771 586l5 -5M777 586l5 -5M783 586l6 -5M790 581l5 5M796 581l5 5M802 581l5 5M808 586l5 -5M814 581l5 5M820 581l5 5M826 586l5 -5M832 586l5 -5M838 581l5 5M844 581l5 5M850 581l5 5M856 586l5 -5M862 581l5 5M868 581l5 5M874 581l5 5M880 581l5 5M402 587l5 5M408 592l5 -5M414 592l5 -5M420 592l5 -5M426 592l6 -5M433 592l5 -5M439 592l5 -5M445 592l5 -5M451 587l5 5M457 592l5 -5M463 592l5 -5M469 587l5 5M475 592l5 -5M481 587l5 5M487 592l5 -5M493 587l5 5M499 592l5 -5M505 587l5 5M511 587l5 5M517 587l5 5M523 587l5 5M529 587l5 5M535 587l5 5M541 592l6 -5M548 592l5 -5M554 592l5 -5M560 592l5 -5M566 592l5 -5M572 592l5 -5M578 592l5 -5M584 587l5 5M590 587l5 5M596 587l5 5M602 587l5 5M608 587l5 5M614 592l5 -5M620 592l5 -5M626 587l5 5M632 592l5 -5M638 592l5 -5M644 592l5 -5M650 592l5 -5M656 587l5 5M662 587l5 5M668 592l6 -5M675 587l5 5M681 592l5 -5M687 587l5 5M693 587l5 5M699 592l5 -5M705 587l5 5M711 587l5 5M717 592l5 -5M723 587l5 5M729 592l5 -5M735 587l5 5M741 592l5 -5M747 592l5 -5M753 592l5 -5M759 587l5 5M765 587l5 5M771 587l5 5M777 592l5 -5M783 587l6 5M790 587l5 5M796 592l5 -5M802 592l5 -5M808 587l5 5M814 587l5 5M820 592l5 -5M826 592l5 -5M832 592l5 -5M838 592l5 -5M844 587l5 5M850 587l5 5M856 587l5 5M862 592l5 -5M868 587l5 5M874 587l5 5M396 598l5 -5M402 598l5 -5M408 593l5 5M414 598l5 -5M420 593l5 5M426 598l6 -5M433 593l5 5M439 593l5 5M445 593l5 5M451 593l5 5M457 593l5 5M463 593l5 5M469 593l5 5M475 593l5 5M481 598l5 -5M487 598l5 -5M493 593l5 5M499 598l5 -5M505 593l5 5M511 593l5 5M517 593l5 5M523 593l5 5M529 598l5 -5M535 593l5 5M541 598l6 -5M548 593l5 5M554 598l5 -5M560 593l5 5M566 598l5 -5M572 593l5 5M578 598l5 -5M584 593l5 5M590 598l5 -5M596 598l5 -5M602 598l5 -5M608 593l5 5M614 593l5 5M620 593l5 5M626 598l5 -5M632 593l5 5M638 598l5 -5M644 593l5 5M650 598l5 -5M656 593l5 5M662 593l5 5M668 593l6 5M675 598l5 -5M681 593l5 5M687 598l5 -5M693 593l5 5M699 593l5 5M705 593l5 5M711 593l5 5M717 598l5 -5M723 593l5 5M729 598l5 -5M735 593l5 5M741 598l5 -5M747 593l5 5M753 598l5 -5M759 593l5 5M765 593l5 5M771 593l5 5M777 593l5 5M783 593l6 5M790 598l5 -5M796 593l5 5M802 593l5 5M808 598l5 -5M814 593l5 5M820 593l5 5M826 593l5 5M832 593l5 5M838 593l5 5M844 598l5 -5M850 593l5 5M856 598l5 -5M862 593l5 5M868 598l5 -5M390 604l5 -5M396 599l5 5M402 599l5 5M408 599l5 5M414 599l5 5M420 599l5 5M426 604l6 -5M433 599l5 5M439 599l5 5M445 599l5 5M451 599l5 5M457 599l5 5M463 599l5 5M469 599l5 5M475 599l5 5M481 599l5 5M487 599l5 5M493 604l5 -5M499 599l5 5M505 599l5 5M511 599l5 5M517 604l5 -5M523 599l5 5M529 604l5 -5M535 604l5 -5M541 604l6 -5M548 599l5 5M554 604l5 -5M560 599l5 5M566 599l5 5M572 599l5 5M578 604l5 -5M584 599l5 5M590 599l5 5M596 599l5 5M602 604l5 -5M608 599l5 5M614 604l5 -5M620 599l5 5M626 599l5 5M632 599l5 5M638 599l5 5M644 604l5 -5M650 599l5 5M656 599l5 5M662 604l5 -5M668 599l6 5M675 599l5 5M681 599l5 5M687 604l5 -5M693 599l5 5M699 599l5 5M705 599l5 5M711 604l5 -5M717 599l5 5M723 599l5 5M729 599l5 5M735 599l5 5M741 604l5 -5M747 599l5 5M753 604l5 -5M759 604l5 -5M765 604l5 -5M771 604l5 -5M777 599l5 5M783 604l6 -5M790 599l5 5M796 599l5 5M802 599l5 5M808 604l5 -5M814 599l5 5M820 599l5 5M826 599l5 5M832 599l5 5M838 599l5 5M844 599l5 5M850 604l5 -5M856 599l5 5M862 604l5 -5M384 605l5 6M390 611l5 -6M396 605l5 6M402 611l5 -6M408 605l5 6M414 605l5 6M420 605l5 6M426 611l6 -6M433 605l5 6M439 611l5 -6M445 611l5 -6M451 605l5 6M457 611l5 -6M463 605l5 6M469 611l5 -6M475 605l5 6M481 605l5 6M487 611l5 -6M493 605l5 6M499 605l5 6M505 605l5 6M511 611l5 -6M517 605l5 6M523 605l5 6M529 605l5 6M535 611l5 -6M541 605l6 6M548 605l5 6M554 605l5 6M560 605l5 6M566 605l5 6M572 611l5 -6M578 605l5 6M584 605l5 6M590 605l5 6M596 611l5 -6M602 605l5 6M608 605l5 6M614 605l5 6M620 605l5 6M626 611l5 -6M632 605l5 6M638 605l5 6M644 605l5 6M650 605l5 6M656 605l5 6M662 605l5 6M668 611l6 -6M675 611l5 -6M681 611l5 -6M687 611l5 -6M693 605l5 6M699 611l5 -6M705 605l5 6M711 605l5 6M717 611l5 -6M723 605l5 6M729 605l5 6M735 605l5 6M741 605l5 6M747 611l5 -6M753 611l5 -6M759 605l5 6M765 605l5 6M771 611l5 -6M777 611l5 -6M783 611l6 -6M790 605l5 6M796 605l5 6M802 605l5 6M808 611l5 -6M814 605l5 6M820 611l5 -6M826 611l5 -6M832 611l5 -6M838 605l5 6M844 605l5 6M850 611l5 -6M856 605l5 6M378 612l5 5M384 617l5 -5M390 612l5 5M396 612l5 5M402 612l5 5M408 612l5 5M414 617l5 -5M420 612l5 5M426 617l6 -5M433 617l5 -5M439 612l5 5M445 617l5 -5M451 617l5 -5M457 612l5 5M463 612l5 5M469 617l5 -5M475 617l5 -5M481 617l5 -5M487 612l5 5M493 617l5 -5M499 617l5 -5M505 612l5 5M511 612l5 5M517 617l5 -5M523 612l5 5M529 612l5 5M535 617l5 -5M541 617l6 -5M548 612l5 5M554 617l5 -5M560 612l5 5M566 617l5 -5M572 617l5 -5M578 612l5 5M584 612l5 5M590 612l5 5M596 612l5 5M602 612l5 5M608 612l5 5M614 612l5 5M620 612l5 5M626 612l5 5M632 612l5 5M638 617l5 -5M644 612l5 5M650 612l5 5M656 617l5 -5M662 612l5 5M668 612l6 5M675 612l5 5M681 612l5 5M687 617l5 -5M693 612l5 5M699 612l5 5M705 617l5 -5M711 617l5 -5M717 617l5 -5M723 617l5 -5M729 617l5 -5M735 617l5 -5M741 617l5 -5M747 612l5 5M753 617l5 -5M759 612l5 5M765 612l5 5M771 617l5 -5M777 612l5 5M783 617l6 -5M790 617l5 -5M796 612l5 5M802 612l5 5M808 612l5 5M814 612l5 5M820 617l5 -5M826 612l5 5M832 612l5 5M838 612l5 5M844 612l5 5M372 623l5 -5M378 618l5 5M384 618l5 5M390 618l5 5M396 623l5 -5M402 623l5 -5M408 618l5 5M414 618l5 5M420 623l5 -5M426 623l6 -5M433 618l5 5M439 618l5 5M445 618l5 5M451 618l5 5M457 618l5 5M463 618l5 5M469 618l5 5M475 618l5 5M481 618l5 5M487 618l5 5M493 618l5 5M499 623l5 -5M505 623l5 -5M511 618l5 5M517 623l5 -5M523 623l5 -5M529 618l5 5M535 618l5 5M541 618l6 5M548 623l5 -5M554 618l5 5M560 618l5 5M566 618l5 5M572 623l5 -5M578 618l5 5M584 623l5 -5M590 618l5 5M596 623l5 -5M602 623l5 -5M608 618l5 5M614 618l5 5M620 618l5 5M626 623l5 -5M632 623l5 -5M638 623l5 -5M644 618l5 5M650 618l5 5M656 623l5 -5M662 618l5 5M668 618l6 5M675 618l5 5M681 618l5 5M687 618l5 5M693 623l5 -5M699 618l5 5M705 618l5 5M711 618l5 5M717 618l5 5M723 623l5 -5M729 618l5 5M735 623l5 -5M741 618l5 5M747 618l5 5M753 623l5 -5M759 623l5 -5M765 618l5 5M771 623l5 -5M777 618l5 5M783 618l6 5M790 623l5 -5M796 618l5 5M802 618l5 5M808 618l5 5M814 623l5 -5M820 623l5 -5M826 623l5 -5M832 623l5 -5M838 623l5 -5M360 624l5 5M366 624l5 5M372 629l5 -5M378 624l5 5M384 624l5 5M390 624l5 5M396 624l5 5M402 624l5 5M408 624l5 5M414 629l5 -5M420 629l5 -5M426 624l6 5M433 624l5 5M439 624l5 5M445 624l5 5M451 624l5 5M457 624l5 5M463 629l5 -5M469 624l5 5M475 629l5 -5M481 624l5 5M487 624l5 5M493 624l5 5M499 624l5 5M505 624l5 5M511 629l5 -5M517 624l5 5M523 624l5 5M529 624l5 5M535 629l5 -5M541 629l6 -5M548 624l5 5M554 624l5 5M560 629l5 -5M566 629l5 -5M572 624l5 5M578 624l5 5M584 624l5 5M590 629l5 -5M596 624l5 5M602 624l5 5M608 629l5 -5M614 629l5 -5M620 624l5 5M626 624l5 5M632 624l5 5M638 624l5 5M644 624l5 5M650 629l5 -5M656 629l5 -5M662 624l5 5M668 624l6 5M675 624l5 5M681 624l5 5M687 629l5 -5M693 624l5 5M699 624l5 5M705 629l5 -5M711 624l5 5M717 624l5 5M723 624l5 5M729 624l5 5M735 624l5 5M741 629l5 -5M747 624l5 5M753 624l5 5M759 629l5 -5M765 624l5 5M771 624l5 5M777 624l5 5M783 624l6 5M790 629l5 -5M796 624l5 5M802 624l5 5M808 629l5 -5M814 629l5 -5M820 629l5 -5M826 624l5 5M832 629l5 -5M354 630l5 5M360 630l5 5M366 630l5 5M372 635l5 -5M378 635l5 -5M384 630l5 5M390 630l5 5M396 635l5 -5M402 630l5 5M408 635l5 -5M414 630l5 5M420 630l5 5M426 630l6 5M433 630l5 5M439 635l5 -5M445 630l5 5M451 635l5 -5M457 630l5 5M463 630l5 5M469 635l5 -5M475 630l5 5M481 630l5 5M487 630l5 5M493 635l5 -5M499 635l5 -5M505 630l5 5M511 630l5 5M517 635l5 -5M523 630l5 5M529 635l5 -5M535 635l5 -5M541 630l6 5M548 635l5 -5M554 635l5 -5M560 630l5 5M566 630l5 5M572 630l5 5M578 630l5 5M584 630l5 5M590 630l5 5M596 630l5 5M602 635l5 -5M608 630l5 5M614 635l5 -5M620 635l5 -5M626 635l5 -5M632 630l5 5M638 635l5 -5M644 635l5 -5M650 635l5 -5M656 635l5 -5M662 635l5 -5M668 635l6 -5M675 630l5 5M681 635l5 -5M687 630l5 5M693 635l5 -5M699 630l5 5M705 630l5 5M711 630l5 5M717 635l5 -5M723 630l5 5M729 635l5 -5M735 635l5 -5M741 635l5 -5M747 630l5 5M753 635l5 -5M759 635l5 -5M765 635l5 -5M771 635l5 -5M777 630l5 5M783 635l6 -5M790 630l5 5M796 630l5 5M802 630l5 5M808 635l5 -5M814 635l5 -5M820 635l5 -5M348 636l5 5M354 636l5 5M360 636l5 5M366 636l5 5M372 636l5 5M378 636l5 5M384 641l5 -5M390 636l5 5M396 636l5 5M402 636l5 5M408 641l5 -5M414 636l5 5M420 636l5 5M426 636l6 5M433 641l5 -5M439 641l5 -5M445 636l5 5M451 641l5 -5M457 641l5 -5M463 636l5 5M469 641l5 -5M475 641l5 -5M481 636l5 5M487 641l5 -5M493 636l5 5M499 636l5 5M505 636l5 5M511 641l5 -5M517 636l5 5M523 636l5 5M529 636l5 5M535 641l5 -5M541 641l6 -5M548 636l5 5M554 636l5 5M560 636l5 5M566 641l5 -5M572 641l5 -5M578 636l5 5M584 641l5 -5M590 636l5 5M596 636l5 5M602 636l5 5M608 641l5 -5M614 636l5 5M620 636l5 5M626 636l5 5M632 641l5 -5M638 641l5 -5M644 636l5 5M650 636l5 5M656 641l5 -5M662 641l5 -5M668 636l6 5M675 641l5 -5M681 641l5 -5M687 636l5 5M693 636l5 5M699 641l5 -5M705 641l5 -5M711 636l5 5M717 636l5 5M723 636l5 5M729 641l5 -5M735 636l5 5M741 636l5 5M747 636l5 5M753 641l5 -5M759 636l5 5M765 641l5 -5M771 641l5 -5M777 636l5 5M783 641l6 -5M790 636l5 5M796 641l5 -5M802 636l5 5M808 641l5 -5M814 641l5 -5M342 642l5 5M348 647l5 -5M354 642l5 5M360 642l5 5M366 642l5 5M372 647l5 -5M378 647l5 -5M384 647l5 -5M390 642l5 5M396 647l5 -5M402 642l5 5M408 642l5 5M414 647l5 -5M420 647l5 -5M426 642l6 5M433 642l5 5M439 642l5 5M445 642l5 5M451 642l5 5M457 642l5 5M463 642l5 5M469 642l5 5M475 642l5 5M481 642l5 5M487 647l5 -5M493 647l5 -5M499 642l5 5M505 642l5 5M511 642l5 5M517 642l5 5M523 642l5 5M529 647l5 -5M535 642l5 5M541 642l6 5M548 647l5 -5M554 647l5 -5M560 647l5 -5M566 647l5 -5M572 642l5 5M578 647l5 -5M584 647l5 -5M590 642l5 5M596 647l5 -5M602 642l5 5M608 642l5 5M614 642l5 5M620 647l5 -5M626 647l5 -5M632 642l5 5M638 642l5 5M644 647l5 -5M650 647l5 -5M656 642l5 5M662 647l5 -5M668 642l6 5M675 642l5 5M681 642l5 5M687 642l5 5M693 642l5 5M699 642l5 5M705 642l5 5M711 642l5 5M717 642l5 5M723 642l5 5M729 642l5 5M735 642l5 5M741 642l5 5M747 642l5 5M753 642l5 5M759 647l5 -5M765 642l5 5M771 647l5 -5M777 642l5 5M783 642l6 5M790 642l5 5M336 648l5 5M342 648l5 5M348 648l5 5M354 653l5 -5M360 653l5 -5M366 648l5 5M372 648l5 5M378 648l5 5M384 648l5 5M390 653l5 -5M396 648l5 5M402 648l5 5M408 653l5 -5M414 648l5 5M420 648l5 5M426 653l6 -5M433 653l5 -5M439 648l5 5M445 653l5 -5M451 653l5 -5M457 648l5 5M463 648l5 5M469 648l5 5M475 648l5 5M481 653l5 -5M487 653l5 -5M493 653l5 -5M499 648l5 5M505 648l5 5M511 653l5 -5M517 653l5 -5M523 648l5 5M529 653l5 -5M535 648l5 5M541 653l6 -5M548 648l5 5M554 648l5 5M560 648l5 5M566 648l5 5M572 653l5 -5M578 653l5 -5M584 648l5 5M590 648l5 5M596 648l5 5M602 648l5 5M608 648l5 5M614 653l5 -5M620 648l5 5M626 648l5 5M632 653l5 -5M638 653l5 -5M644 648l5 5M650 648l5 5M656 648l5 5M662 648l5 5M668 653l6 -5M675 648l5 5M681 648l5 5M687 648l5 5M693 648l5 5M699 653l5 -5M705 648l5 5M711 648l5 5M717 648l5 5M723 653l5 -5M729 648l5 5M735 653l5 -5M753 648l5 5M759 648l5 5M765 648l5 5M330 659l5 -5M336 654l5 5M342 654l5 5M348 654l5 5M354 654l5 5M360 659l5 -5M366 659l5 -5M372 659l5 -5M378 659l5 -5M384 654l5 5M390 659l5 -5M396 654l5 5M402 659l5 -5M408 654l5 5M414 654l5 5M420 659l5 -5M426 659l6 -5M433 654l5 5M439 654l5 5M445 659l5 -5M451 659l5 -5M457 654l5 5M463 659l5 -5M469 654l5 5M475 654l5 5M481 654l5 5M487 654l5 5M493 659l5 -5M499 659l5 -5M505 654l5 5M511 654l5 5M517 654l5 5M523 654l5 5M529 659l5 -5M535 659l5 -5M541 654l6 5M548 659l5 -5M554 654l5 5M560 654l5 5M566 654l5 5M572 654l5 5M578 659l5 -5M584 659l5 -5M590 659l5 -5M596 654l5 5M602 654l5 5M608 654l5 5M614 654l5 5M620 659l5 -5M626 654l5 5M632 654l5 5M638 659l5 -5M644 654l5 5M650 654l5 5M656 659l5 -5M662 654l5 5M668 654l6 5M675 659l5 -5M681 654l5 5M687 654l5 5M693 654l5 5M699 659l5 -5M705 659l5 -5M711 659l5 -5M717 654l5 5M723 654l5 5M729 654l5 5M318 660l5 5M324 665l5 -5M330 660l5 5M336 665l5 -5M342 665l5 -5M348 660l5 5M354 660l5 5M360 665l5 -5M366 660l5 5M372 665l5 -5M378 660l5 5M384 665l5 -5M390 660l5 5M396 665l5 -5M402 665l5 -5M408 665l5 -5M414 660l5 5M420 660l5 5M426 660l6 5M433 660l5 5M439 665l5 -5M445 665l5 -5M451 665l5 -5M457 665l5 -5M463 665l5 -5M469 665l5 -5M475 660l5 5M481 665l5 -5M487 660l5 5M493 660l5 5M499 660l5 5M505 665l5 -5M511 660l5 5M517 660l5 5M523 665l5 -5M529 660l5 5M535 665l5 -5M541 665l6 -5M548 660l5 5M554 665l5 -5M560 660l5 5M566 665l5 -5M572 660l5 5M578 660l5 5M584 665l5 -5M590 660l5 5M596 665l5 -5M602 660l5 5M608 660l5 5M614 660l5 5M620 665l5 -5M626 660l5 5M632 665l5 -5M638 660l5 5M644 665l5 -5M650 665l5 -5M656 660l5 5M662 660l5 5M668 665l6 -5M675 660l5 5M681 665l5 -5M687 660l5 5M693 660l5 5M699 665l5 -5M705 665l5 -5M711 665l5 -5M312 666l5 5M318 666l5 5M324 671l5 -5M330 671l5 -5M336 666l5 5M342 671l5 -5M348 666l5 5M354 671l5 -5M360 666l5 5M366 666l5 5M372 671l5 -5M378 666l5 5M384 671l5 -5M390 666l5 5M396 671l5 -5M402 666l5 5M408 671l5 -5M414 666l5 5M420 671l5 -5M426 666l6 5M433 666l5 5M439 671l5 -5M445 666l5 5M451 666l5 5M457 666l5 5M463 671l5 -5M469 671l5 -5M475 666l5 5M481 666l5 5M487 666l5 5M493 671l5 -5M499 671l5 -5M505 666l5 5M511 671l5 -5M517 666l5 5M523 666l5 5M529 671l5 -5M535 666l5 5M541 666l6 5M548 666l5 5M554 666l5 5M560 666l5 5M566 671l5 -5M572 666l5 5M578 671l5 -5M584 666l5 5M590 671l5 -5M596 666l5 5M602 671l5 -5M608 666l5 5M614 671l5 -5M620 671l5 -5M626 671l5 -5M632 666l5 5M638 671l5 -5M644 666l5 5M650 666l5 5M656 671l5 -5M662 671l5 -5M668 671l6 -5M675 671l5 -5M306 672l5 5M312 672l5 5M318 677l5 -5M324 677l5 -5M330 677l5 -5M336 672l5 5M342 677l5 -5M348 672l5 5M354 672l5 5M360 672l5 5M366 672l5 5M372 672l5 5M378 672l5 5M384 672l5 5M390 672l5 5M396 672l5 5M402 677l5 -5M408 672l5 5M414 672l5 5M420 677l5 -5M426 672l6 5M433 677l5 -5M439 677l5 -5M445 672l5 5M451 672l5 5M457 677l5 -5M463 672l5 5M469 672l5 5M475 672l5 5M481 672l5 5M487 672l5 5M493 672l5 5M499 672l5 5M505 677l5 -5M511 672l5 5M517 677l5 -5M523 677l5 -5M529 672l5 5M535 677l5 -5M541 677l6 -5M548 672l5 5M554 677l5 -5M560 677l5 -5M566 672l5 5M287 678l5 5M293 678l5 5M299 683l6 -5M306 678l5 5M312 683l5 -5M318 678l5 5M324 678l5 5M330 678l5 5M336 678l5 5M342 678l5 5M348 678l5 5M354 683l5 -5M360 683l5 -5M366 683l5 -5M372 683l5 -5M378 683l5 -5M384 683l5 -5M390 683l5 -5M396 678l5 5M402 678l5 5M408 678l5 5M414 683l5 -5M420 678l5 5M426 678l6 5M433 678l5 5M439 678l5 5M445 683l5 -5M451 678l5 5M457 683l5 -5M463 678l5 5M469 678l5 5M475 678l5 5M481 683l5 -5M487 678l5 5M493 683l5 -5M499 678l5 5M505 683l5 -5M511 678l5 5M517 678l5 5M523 683l5 -5M529 678l5 5M535 683l5 -5M541 678l6 5M548 683l5 -5M275 689l5 -5M281 684l5 5M287 689l5 -5M293 684l5 5M299 684l6 5M306 684l5 5M312 689l5 -5M318 689l5 -5M324 689l5 -5M330 689l5 -5M336 689l5 -5M342 689l5 -5M348 684l5 5M354 689l5 -5M360 684l5 5M366 684l5 5M372 689l5 -5M378 684l5 5M384 684l5 5M390 684l5 5M396 684l5 5M402 684l5 5M408 689l5 -5M414 684l5 5M420 684l5 5M426 684l6 5M433 684l5 5M439 684l5 5M445 684l5 5M451 684l5 5M457 684l5 5M463 684l5 5M469 684l5 5M475 689l5 -5M481 684l5 5M487 689l5 -5M493 684l5 5M499 684l5 5M505 684l5 5M511 684l5 5M517 684l5 5M523 689l5 -5M529 684l5 5M535 689l5 -5M263 695l5 -5M269 690l5 5M275 690l5 5M281 695l5 -5M287 690l5 5M293 690l5 5M299 690l6 5M306 690l5 5M312 690l5 5M318 690l5 5M324 695l5 -5M330 690l5 5M336 690l5 5M342 690l5 5M348 695l5 -5M354 690l5 5M360 690l5 5M366 690l5 5M372 690l5 5M378 695l5 -5M384 695l5 -5M390 690l5 5M396 690l5 5M402 690l5 5M408 690l5 5M414 695l5 -5M420 695l5 -5M426 690l6 5M433 695l5 -5M439 690l5 5M445 690l5 5M451 690l5 5M457 690l5 5M463 695l5 -5M469 695l5 -5M475 690l5 5M481 690l5 5M487 695l5 -5M493 690l5 5M499 695l5 -5M505 690l5 5M511 695l5 -5M517 690l5 5M523 690l5 5M529 690l5 5M251 696l5 5M257 696l5 5M263 701l5 -5M269 701l5 -5M275 696l5 5M281 696l5 5M287 701l5 -5M293 696l5 5M299 696l6 5M306 701l5 -5M312 696l5 5M318 696l5 5M324 696l5 5M330 696l5 5M336 701l5 -5M342 701l5 -5M348 696l5 5M354 696l5 5M360 696l5 5M366 696l5 5M372 701l5 -5M378 696l5 5M384 701l5 -5M390 696l5 5M396 701l5 -5M402 701l5 -5M408 696l5 5M414 696l5 5M420 696l5 5M426 696l6 5M433 701l5 -5M439 701l5 -5M445 696l5 5M451 701l5 -5M457 696l5 5M463 701l5 -5M469 701l5 -5M475 696l5 5M481 696l5 5M487 696l5 5M493 696l5 5M499 701l5 -5M505 696l5 5M511 701l5 -5M517 696l5 5M233 707l5 -5M239 702l5 5M245 707l5 -5M251 702l5 5M257 702l5 5M263 702l5 5M269 707l5 -5M275 707l5 -5M281 707l5 -5M287 702l5 5M293 707l5 -5M299 707l6 -5M306 702l5 5M312 702l5 5M318 707l5 -5M324 702l5 5M330 702l5 5M336 702l5 5M342 707l5 -5M348 707l5 -5M354 702l5 5M360 707l5 -5M366 707l5 -5M372 707l5 -5M378 702l5 5M384 707l5 -5M390 707l5 -5M396 707l5 -5M402 702l5 5M408 702l5 5M414 702l5 5M420 702l5 5M426 702l6 5M433 702l5 5M439 702l5 5M445 702l5 5M451 702l5 5M457 702l5 5M463 702l5 5M469 702l5 5M475 702l5 5M481 707l5 -5M487 702l5 5M493 702l5 5M499 702l5 5M505 707l5 -5M227 713l5 -5M233 713l5 -5M239 708l5 5M245 708l5 5M251 713l5 -5M257 708l5 5M263 708l5 5M269 708l5 5M275 708l5 5M281 713l5 -5M287 713l5 -5M293 708l5 5M299 713l6 -5M306 708l5 5M312 708l5 5M318 708l5 5M324 708l5 5M330 708l5 5M336 713l5 -5M342 713l5 -5M348 708l5 5M354 708l5 5M360 713l5 -5M366 713l5 -5M372 713l5 -5M378 713l5 -5M384 713l5 -5M390 708l5 5M396 708l5 5M402 708l5 5M408 708l5 5M414 713l5 -5M420 708l5 5M426 713l6 -5M433 713l5 -5M439 713l5 -5M445 708l5 5M451 708l5 5M457 708l5 5M463 713l5 -5M469 713l5 -5M475 708l5 5M481 708l5 5M487 708l5 5M493 708l5 5M215 719l5 -5M221 719l5 -5M227 719l5 -5M233 719l5 -5M239 714l5 5M245 714l5 5M251 714l5 5M257 719l5 -5M263 714l5 5M269 714l5 5M275 714l5 5M281 719l5 -5M287 719l5 -5M293 714l5 5M299 719l6 -5M306 719l5 -5M312 714l5 5M318 714l5 5M324 719l5 -5M330 714l5 5M336 714l5 5M342 719l5 -5M348 714l5 5M354 714l5 5M360 714l5 5M366 714l5 5M372 714l5 5M378 714l5 5M384 714l5 5M390 714l5 5M396 714l5 5M402 719l5 -5M408 714l5 5M414 719l5 -5M420 719l5 -5M426 714l6 5M433 714l5 5M439 719l5 -5M445 714l5 5M451 714l5 5M457 714l5 5M463 719l5 -5M469 719l5 -5M475 714l5 5M481 714l5 5M209 720l5 5M215 720l5 5M221 720l5 5M227 720l5 5M233 725l5 -5M239 720l5 5M245 720l5 5M251 720l5 5M257 720l5 5M263 720l5 5M269 720l5 5M275 720l5 5M281 725l5 -5M287 720l5 5M293 725l5 -5M299 720l6 5M306 725l5 -5M312 720l5 5M318 720l5 5M324 720l5 5M330 720l5 5M336 725l5 -5M342 725l5 -5M348 720l5 5M354 725l5 -5M360 720l5 5M366 725l5 -5M372 720l5 5M378 720l5 5M384 720l5 5M390 725l5 -5M396 725l5 -5M402 725l5 -5M408 720l5 5M414 720l5 5M420 725l5 -5M426 720l6 5M433 720l5 5M439 725l5 -5M445 720l5 5M451 725l5 -5M457 720l5 5M463 720l5 5M197 726l5 5M203 726l5 5M209 726l5 5M215 726l5 5M221 726l5 5M227 726l5 5M233 726l5 5M239 726l5 5M245 731l5 -5M251 726l5 5M257 731l5 -5M263 726l5 5M269 726l5 5M275 726l5 5M281 726l5 5M287 731l5 -5M293 726l5 5M299 731l6 -5M306 726l5 5M312 726l5 5M318 726l5 5M324 726l5 5M330 726l5 5M336 726l5 5M342 731l5 -5M348 726l5 5M354 726l5 5M360 731l5 -5M366 726l5 5M372 726l5 5M378 726l5 5M384 731l5 -5M390 726l5 5M396 726l5 5M402 731l5 -5M408 726l5 5M414 726l5 5M420 726l5 5M426 731l6 -5M433 731l5 -5M439 726l5 5M445 726l5 5M184 732l6 6M191 738l5 -6M197 732l5 6M203 738l5 -6M209 732l5 6M215 738l5 -6M221 732l5 6M227 732l5 6M233 738l5 -6M239 738l5 -6M245 738l5 -6M251 732l5 6M257 732l5 6M263 732l5 6M269 732l5 6M275 738l5 -6M281 738l5 -6M287 732l5 6M293 738l5 -6M299 732l6 6M306 732l5 6M312 732l5 6M318 732l5 6M324 732l5 6M330 732l5 6M336 732l5 6M342 732l5 6M348 732l5 6M354 732l5 6M360 732l5 6M366 738l5 -6M372 732l5 6M378 732l5 6M384 738l5 -6M390 732l5 6M396 732l5 6M402 732l5 6M408 738l5 -6M414 732l5 6M420 738l5 -6M426 732l6 6M433 732l5 6M178 744l5 -5M184 744l6 -5M191 744l5 -5M197 739l5 5M203 739l5 5M209 739l5 5M215 744l5 -5M221 744l5 -5M227 744l5 -5M233 739l5 5M239 744l5 -5M245 739l5 5M251 744l5 -5M257 739l5 5M263 739l5 5M269 744l5 -5M275 739l5 5M281 744l5 -5M287 744l5 -5M293 739l5 5M299 744l6 -5M306 739l5 5M312 744l5 -5M318 739l5 5M324 739l5 5M330 739l5 5M336 739l5 5M342 739l5 5M348 744l5 -5M354 739l5 5M360 739l5 5M366 739l5 5M372 739l5 5M378 744l5 -5M384 744l5 -5M390 744l5 -5M396 744l5 -5M402 739l5 5M408 744l5 -5M414 739l5 5M420 744l5 -5M172 750l5 -5M178 750l5 -5M184 745l6 5M191 745l5 5M197 750l5 -5M203 745l5 5M209 745l5 5M215 750l5 -5M221 745l5 5M227 750l5 -5M233 745l5 5M239 750l5 -5M245 745l5 5M251 745l5 5M257 750l5 -5M263 745l5 5M269 750l5 -5M275 750l5 -5M281 745l5 5M287 750l5 -5M293 745l5 5M299 745l6 5M306 745l5 5M312 750l5 -5M318 745l5 5M324 745l5 5M330 745l5 5M336 745l5 5M342 750l5 -5M348 750l5 -5M354 750l5 -5M360 745l5 5M366 745l5 5M372 745l5 5M378 750l5 -5M384 750l5 -5M390 745l5 5M396 745l5 5M402 745l5 5M408 750l5 -5M172 751l5 5M178 751l5 5M184 756l6 -5M191 751l5 5M197 756l5 -5M203 751l5 5M209 756l5 -5M215 751l5 5M221 751l5 5M227 756l5 -5M233 751l5 5M239 751l5 5M245 751l5 5M251 751l5 5M257 751l5 5M263 751l5 5M269 756l5 -5M275 751l5 5M281 756l5 -5M287 751l5 5M293 751l5 5M299 756l6 -5M306 751l5 5M312 756l5 -5M318 751l5 5M324 756l5 -5M330 756l5 -5M336 756l5 -5M342 756l5 -5M348 751l5 5M354 756l5 -5M360 756l5 -5M366 751l5 5M372 751l5 5M378 751l5 5M384 751l5 5M390 751l5 5M396 751l5 5M166 762l5 -5M172 757l5 5M178 757l5 5M184 757l6 5M191 757l5 5M197 757l5 5M203 757l5 5M209 757l5 5M215 757l5 5M221 757l5 5M227 762l5 -5M233 757l5 5M239 762l5 -5M245 757l5 5M251 757l5 5M257 762l5 -5M263 757l5 5M269 757l5 5M275 757l5 5M281 762l5 -5M287 757l5 5M293 762l5 -5M299 757l6 5M306 757l5 5M312 762l5 -5M318 757l5 5M324 757l5 5M330 757l5 5M336 762l5 -5M342 762l5 -5M348 757l5 5M354 757l5 5M360 762l5 -5M366 757l5 5M372 762l5 -5M378 762l5 -5M384 757l5 5M390 757l5 5M154 763l5 5M160 763l5 5M166 763l5 5M172 763l5 5M178 763l5 5M184 763l6 5M191 763l5 5M197 763l5 5M203 768l5 -5M209 768l5 -5M215 763l5 5M221 763l5 5M227 763l5 5M233 763l5 5M239 763l5 5M245 768l5 -5M251 768l5 -5M257 768l5 -5M263 763l5 5M269 763l5 5M275 768l5 -5M281 763l5 5M287 768l5 -5M293 763l5 5M299 763l6 5M306 763l5 5M312 768l5 -5M318 763l5 5M324 763l5 5M330 763l5 5M336 768l5 -5M342 768l5 -5M348 763l5 5M354 763l5 5M360 763l5 5M366 768l5 -5M372 763l5 5M378 768l5 -5M136 769l5 5M142 769l5 5M148 769l5 5M154 769l5 5M160 769l5 5M166 774l5 -5M172 769l5 5M178 769l5 5M184 774l6 -5M191 774l5 -5M197 769l5 5M203 774l5 -5M209 774l5 -5M215 774l5 -5M221 769l5 5M227 769l5 5M233 769l5 5M239 774l5 -5M245 774l5 -5M251 769l5 5M257 774l5 -5M263 774l5 -5M269 774l5 -5M275 769l5 5M281 769l5 5M287 769l5 5M293 769l5 5M299 769l6 5M306 769l5 5M312 774l5 -5M318 769l5 5M324 774l5 -5M330 769l5 5M336 769l5 5M342 774l5 -5M348 769l5 5M354 774l5 -5M360 769l5 5M366 774l5 -5M136 775l5 5M142 780l5 -5M148 775l5 5M154 775l5 5M160 775l5 5M166 775l5 5M172 775l5 5M178 775l5 5M184 775l6 5M191 775l5 5M197 780l5 -5M203 775l5 5M209 775l5 5M215 775l5 5M221 780l5 -5M227 775l5 5M233 780l5 -5M239 780l5 -5M245 775l5 5M251 780l5 -5M257 775l5 5M263 775l5 5M269 775l5 5M275 775l5 5M281 780l5 -5M287 775l5 5M293 775l5 5M299 780l6 -5M306 775l5 5M312 775l5 5M318 775l5 5M324 775l5 5M330 780l5 -5M336 780l5 -5M342 775l5 5M348 775l5 5M136 781l5 5M142 781l5 5M148 781l5 5M154 786l5 -5M160 781l5 5M166 781l5 5M172 786l5 -5M178 781l5 5M184 786l6 -5M191 781l5 5M197 781l5 5M203 786l5 -5M209 781l5 5M215 781l5 5M221 781l5 5M227 781l5 5M233 781l5 5M239 781l5 5M245 781l5 5M251 781l5 5M257 781l5 5M263 781l5 5M269 781l5 5M275 781l5 5M281 786l5 -5M287 781l5 5M293 781l5 5M299 781l6 5M306 786l5 -5M312 781l5 5M318 786l5 -5M324 781l5 5M330 786l5 -5M142 787l5 5M148 787l5 5M154 792l5 -5M160 787l5 5M166 787l5 5M172 792l5 -5M178 787l5 5M184 792l6 -5M191 787l5 5M197 787l5 5M203 787l5 5M209 787l5 5M215 787l5 5M221 787l5 5M227 787l5 5M233 787l5 5M239 792l5 -5M245 787l5 5M251 792l5 -5M257 787l5 5M263 787l5 5M269 787l5 5M275 787l5 5M281 787l5 5M287 792l5 -5M293 787l5 5M299 787l6 5M306 792l5 -5M312 787l5 5M142 798l5 -5M148 798l5 -5M154 798l5 -5M160 798l5 -5M166 793l5 5M172 798l5 -5M178 793l5 5M184 793l6 5M191 798l5 -5M197 798l5 -5M203 798l5 -5M209 793l5 5M215 793l5 5M221 798l5 -5M227 793l5 5M233 793l5 5M239 793l5 5M245 793l5 5M251 793l5 5M257 798l5 -5M263 793l5 5M269 798l5 -5M275 793l5 5M281 793l5 5M287 798l5 -5M293 798l5 -5M142 799l5 5M148 799l5 5M154 804l5 -5M160 799l5 5M166 799l5 5M172 799l5 5M178 804l5 -5M184 804l6 -5M191 804l5 -5M197 799l5 5M203 799l5 5M209 799l5 5M215 799l5 5M221 804l5 -5M227 804l5 -5M233 804l5 -5M239 804l5 -5M245 799l5 5M251 804l5 -5M257 799l5 5M263 804l5 -5M269 804l5 -5M275 804l5 -5M281 804l5 -5M142 810l5 -5M148 805l5 5M154 810l5 -5M160 805l5 5M166 805l5 5M172 805l5 5M178 810l5 -5M184 810l6 -5M191 810l5 -5M197 810l5 -5M203 805l5 5M209 805l5 5M215 805l5 5M221 805l5 5M227 805l5 5M233 805l5 5M239 805l5 5M245 810l5 -5M251 805l5 5M257 810l5 -5M263 805l5 5M269 810l5 -5M275 805l5 5M148 811l5 5M154 811l5 5M160 811l5 5M166 811l5 5M172 811l5 5M178 811l5 5M184 816l6 -5M191 811l5 5M197 811l5 5M203 816l5 -5M209 811l5 5M215 811l5 5M221 811l5 5M227 811l5 5M233 816l5 -5M239 811l5 5M245 811l5 5M251 811l5 5M257 811l5 5M263 816l5 -5M148 817l5 5M154 822l5 -5M160 822l5 -5M166 817l5 5M172 822l5 -5M178 817l5 5M184 822l6 -5M191 822l5 -5M197 822l5 -5M203 817l5 5M209 822l5 -5M215 817l5 5M221 817l5 5M227 817l5 5M233 817l5 5M239 817l5 5M245 822l5 -5M251 817l5 5M148 828l5 -5M154 828l5 -5M160 823l5 5M166 828l5 -5M172 828l5 -5M178 823l5 5M184 823l6 5M191 828l5 -5M197 823l5 5M203 823l5 5M209 823l5 5M215 828l5 -5M221 828l5 -5M227 828l5 -5M233 828l5 -5M239 828l5 -5M148 834l5 -5M154 829l5 5M160 829l5 5M166 834l5 -5M172 829l5 5M178 829l5 5M184 829l6 5M191 834l5 -5M197 829l5 5M203 834l5 -5M209 834l5 -5M215 829l5 5M221 829l5 5M227 829l5 5M154 835l5 5M160 840l5 -5M166 840l5 -5M172 835l5 5M178 840l5 -5M184 840l6 -5M191 835l5 5M197 840l5 -5M203 835l5 5M209 835l5 5M154 841l5 5M160 841l5 5M166 841l5 5M172 841l5 5M178 846l5 -5M184 841l6 5M191 846l5 -5M154 853l5 -6M160 847l5 6M166 847l5 6M172 847l5 6"/></g>
<polygon points="139.2,776.0 171.3,763.6 173.7,749.3 202.2,730.3 216.5,722.0 233.0,710.0 254.5,700.6 274.7,691.0 313.9,675.6 330.9,659.2 354.7,637.8 392.7,609.2 414.1,581.9 433.1,564.1 447.4,549.8 466.4,526.1 475.9,514.2 490.1,504.7 504.4,498.7 521.0,490.4 544.8,486.8 568.6,477.3 597.1,471.4 644.6,465.4 670.8,459.5 700.0,453.6 724.2,446.9 755.1,436.2 793.1,423.1 826.4,404.1 862.0,389.8 883.4,373.2 911.9,358.9 933.3,345.9 964.2,345.9 1002.2,335.2 1060.0,334.0 1072.3,331.9 1107.9,328.3 1127.0,324.8 1153.1,316.5 1176.9,310.5 1191.1,299.8 1207.8,287.9 1222.0,280.8 1238.7,279.6 1250.5,271.3 1262.4,259.4 1276.7,251.1 1288.6,248.7 1300.4,251.1 1308.8,259.4 1313.5,271.3 1317.1,283.2 1321.8,297.4 1326.6,309.3 1329.0,323.6 1334.9,340.2 1336.1,352.1 1332.5,364.0 1329.0,375.9 1321.8,387.8 1312.3,397.3 1302.8,400.8 1293.3,398.5 1287.4,396.1 1276.7,402.0 1257.7,410.3 1233.9,417.5 1210.1,422.2 1191.1,429.4 1162.2,442.8 1129.0,455.9 1088.6,473.7 1050.5,496.3 1005.4,520.0 972.1,539.0 938.8,554.5 924.6,562.8 907.9,565.2 881.8,583.0 848.5,611.5 835.5,622.6 816.5,635.7 788.0,644.0 761.8,650.0 754.7,645.2 735.7,647.5 728.6,657.0 704.8,662.3 662.0,668.9 626.4,670.6 569.3,671.3 552.7,676.0 528.9,691.5 500.4,707.0 475.5,716.0 428.0,735.0 394.7,754.0 371.0,769.5 347.2,775.5 297.3,792.1 256.9,815.9 233.0,827.8 199.8,839.6 178.4,846.8 159.4,851.5" fill="none" stroke="#0c9bd0" stroke-width="4.2" stroke-linejoin="round"/>
<polygon points="129.7,764.8 190.3,730.3 223.6,712.5 254.5,697.0 302.0,675.7 329.4,649.5 353.5,630.6 387.9,603.3 416.5,573.6 429.5,554.6 454.5,532.0 474.7,507.0 487.8,499.9 534.1,479.7 563.8,473.8 597.1,464.7 642.2,459.5 668.4,454.8 700.0,451.2 719.4,443.3 759.8,431.4 821.6,401.2 866.8,379.1 898.9,360.1 932.1,341.1 966.6,337.5 1004.6,330.4 1037.9,328.0 1074.7,327.2 1115.1,320.0 1155.5,310.5 1192.3,291.5 1222.0,276.1 1236.3,267.7 1254.1,253.5 1276.7,242.8 1314.7,215.4 1327.8,241.6 1367.0,398.5 1349.2,404.4 1293.3,416.3 1248.2,416.8 1222.0,419.8 1210.1,425.8 1176.9,437.7 1130.2,457.0 1092.1,474.9 1051.7,497.4 1005.4,522.4 974.5,540.2 941.2,558.0 915.1,579.4 888.9,597.3 862.8,618.7 840.3,628.5 818.9,648.7 780.9,661.8 763.0,670.1 730.9,668.9 721.4,673.7 657.3,676.1 650.1,679.6 612.1,679.6 607.4,678.4 574.1,677.2 538.4,695.1 499.2,717.6 460.0,733.1 437.5,736.3 414.9,749.3 372.1,770.7 354.3,776.7 302.0,795.7 261.6,821.8 233.1,833.7 202.2,843.2 158.2,858.7" fill="none" stroke="#333" stroke-width="1" stroke-dasharray="1 2" shape-rendering="crispEdges"/>
<path d="M129 764h2v2h-2zM223 711h2v2h-2zM301 675h2v2h-2zM353 630h2v2h-2zM415 573h2v2h-2zM453 531h2v2h-2zM487 499h2v2h-2zM563 473h2v2h-2zM641 459h2v2h-2zM699 450h2v2h-2zM759 430h2v2h-2zM866 378h2v2h-2zM931 340h2v2h-2zM1004 329h2v2h-2zM1074 326h2v2h-2zM1155 309h2v2h-2zM1221 275h2v2h-2zM1253 253h2v2h-2zM1314 214h2v2h-2zM1366 397h2v2h-2zM1292 415h2v2h-2zM1221 419h2v2h-2zM1176 437h2v2h-2zM1091 474h2v2h-2zM1004 521h2v2h-2zM940 557h2v2h-2zM888 596h2v2h-2zM839 627h2v2h-2zM780 661h2v2h-2zM730 668h2v2h-2zM656 675h2v2h-2zM611 679h2v2h-2zM573 676h2v2h-2zM498 717h2v2h-2zM437 735h2v2h-2zM371 770h2v2h-2zM301 795h2v2h-2zM232 833h2v2h-2zM157 858h2v2h-2z" fill="#111" shape-rendering="crispEdges"/>
<path d="M572 546h1v1h-1zM295 767h1v1h-1zM692 466h1v1h-1zM657 585h1v1h-1zM585 537h1v1h-1zM854 573h1v1h-1zM877 556h1v1h-1zM357 674h1v1h-1zM728 455h1v1h-1zM883 554h1v1h-1zM871 448h1v1h-1zM667 518h1v1h-1zM1082 352h1v1h-1zM1278 274h1v1h-1zM530 643h1v1h-1zM353 716h1v1h-1zM782 480h1v1h-1zM176 846h1v1h-1zM1126 385h1v1h-1zM990 352h1v1h-1zM517 540h1v1h-1zM267 718h1v1h-1zM420 644h1v1h-1zM314 740h1v1h-1zM705 614h1v1h-1zM757 573h1v1h-1zM1123 379h1v1h-1zM769 562h1v1h-1zM866 480h1v1h-1zM667 556h1v1h-1zM1187 362h1v1h-1zM243 805h1v1h-1zM458 698h1v1h-1zM791 545h1v1h-1zM874 403h1v1h-1zM1025 444h1v1h-1zM292 738h1v1h-1zM975 501h1v1h-1zM916 562h1v1h-1zM1270 303h1v1h-1zM868 532h1v1h-1zM422 609h1v1h-1zM852 488h1v1h-1zM494 527h1v1h-1zM613 643h1v1h-1zM513 560h1v1h-1zM1081 403h1v1h-1zM265 762h1v1h-1zM987 520h1v1h-1zM871 497h1v1h-1zM641 467h1v1h-1zM750 447h1v1h-1zM1240 305h1v1h-1zM942 360h1v1h-1zM388 677h1v1h-1zM230 773h1v1h-1zM1081 362h1v1h-1zM221 762h1v1h-1zM1024 351h1v1h-1zM897 409h1v1h-1zM595 659h1v1h-1zM1216 298h1v1h-1zM386 735h1v1h-1zM166 768h1v1h-1zM1115 354h1v1h-1zM968 359h1v1h-1zM355 760h1v1h-1zM812 590h1v1h-1zM457 716h1v1h-1zM198 833h1v1h-1zM478 681h1v1h-1zM232 742h1v1h-1zM1282 335h1v1h-1zM857 570h1v1h-1zM1282 377h1v1h-1zM1002 408h1v1h-1zM1032 372h1v1h-1zM1277 291h1v1h-1zM363 634h1v1h-1zM619 553h1v1h-1zM899 366h1v1h-1zM808 527h1v1h-1zM1234 347h1v1h-1zM1305 383h1v1h-1zM648 556h1v1h-1zM310 756h1v1h-1zM1096 430h1v1h-1zM1062 481h1v1h-1zM447 596h1v1h-1zM1067 429h1v1h-1zM992 477h1v1h-1zM571 607h1v1h-1zM520 601h1v1h-1zM434 732h1v1h-1zM683 663h1v1h-1zM1181 342h1v1h-1zM192 819h1v1h-1zM1221 283h1v1h-1zM551 561h1v1h-1zM1007 363h1v1h-1zM255 704h1v1h-1zM244 786h1v1h-1zM1296 376h1v1h-1zM731 528h1v1h-1zM623 572h1v1h-1zM307 723h1v1h-1zM912 422h1v1h-1zM1001 419h1v1h-1zM500 659h1v1h-1zM918 461h1v1h-1zM617 613h1v1h-1zM459 625h1v1h-1zM1139 402h1v1h-1zM957 484h1v1h-1zM736 610h1v1h-1zM612 615h1v1h-1zM851 555h1v1h-1zM181 771h1v1h-1zM1043 405h1v1h-1zM995 405h1v1h-1zM1107 343h1v1h-1zM315 756h1v1h-1zM454 679h1v1h-1zM517 582h1v1h-1zM720 591h1v1h-1zM389 654h1v1h-1zM480 549h1v1h-1zM684 614h1v1h-1zM322 773h1v1h-1zM879 513h1v1h-1zM932 425h1v1h-1zM732 466h1v1h-1zM228 726h1v1h-1zM757 573h1v1h-1zM1291 301h1v1h-1zM1294 337h1v1h-1zM990 482h1v1h-1zM653 555h1v1h-1zM648 584h1v1h-1zM261 727h1v1h-1zM1174 421h1v1h-1zM825 560h1v1h-1zM232 805h1v1h-1zM425 623h1v1h-1zM1295 395h1v1h-1zM913 471h1v1h-1zM481 689h1v1h-1zM238 777h1v1h-1zM1278 280h1v1h-1zM941 503h1v1h-1zM1181 363h1v1h-1zM363 740h1v1h-1zM394 676h1v1h-1zM253 767h1v1h-1zM550 541h1v1h-1zM1308 305h1v1h-1zM871 572h1v1h-1zM1289 324h1v1h-1zM388 639h1v1h-1zM480 703h1v1h-1zM751 599h1v1h-1zM907 405h1v1h-1zM346 732h1v1h-1zM1167 417h1v1h-1zM155 804h1v1h-1zM557 604h1v1h-1zM186 841h1v1h-1zM473 555h1v1h-1zM242 795h1v1h-1zM895 478h1v1h-1zM864 508h1v1h-1zM1253 407h1v1h-1zM1173 400h1v1h-1zM655 635h1v1h-1zM755 478h1v1h-1zM808 565h1v1h-1zM371 706h1v1h-1zM770 466h1v1h-1zM857 553h1v1h-1zM627 532h1v1h-1zM732 467h1v1h-1zM1067 392h1v1h-1zM246 807h1v1h-1zM1111 380h1v1h-1zM584 593h1v1h-1zM656 486h1v1h-1zM844 514h1v1h-1zM315 783h1v1h-1zM731 459h1v1h-1zM442 599h1v1h-1zM252 748h1v1h-1zM229 742h1v1h-1zM931 497h1v1h-1zM454 671h1v1h-1zM369 738h1v1h-1zM379 696h1v1h-1zM1123 418h1v1h-1zM941 440h1v1h-1zM703 579h1v1h-1zM1027 368h1v1h-1zM939 542h1v1h-1zM649 553h1v1h-1zM623 524h1v1h-1zM658 654h1v1h-1zM957 497h1v1h-1zM753 576h1v1h-1zM508 581h1v1h-1zM673 499h1v1h-1zM256 748h1v1h-1zM390 646h1v1h-1zM555 652h1v1h-1zM419 614h1v1h-1zM660 502h1v1h-1zM238 744h1v1h-1zM1004 453h1v1h-1zM280 714h1v1h-1zM910 488h1v1h-1zM892 406h1v1h-1zM963 475h1v1h-1zM679 522h1v1h-1zM906 403h1v1h-1zM1048 407h1v1h-1zM1179 331h1v1h-1zM487 621h1v1h-1zM262 743h1v1h-1zM1033 448h1v1h-1zM1016 357h1v1h-1zM457 719h1v1h-1zM1274 372h1v1h-1zM827 507h1v1h-1zM502 566h1v1h-1zM767 632h1v1h-1zM344 728h1v1h-1zM903 413h1v1h-1zM527 659h1v1h-1zM672 645h1v1h-1zM876 386h1v1h-1zM1019 460h1v1h-1zM1200 339h1v1h-1zM519 503h1v1h-1zM1003 510h1v1h-1zM814 580h1v1h-1zM682 491h1v1h-1zM649 556h1v1h-1zM904 548h1v1h-1zM571 561h1v1h-1zM1299 364h1v1h-1zM1070 365h1v1h-1zM475 556h1v1h-1zM430 601h1v1h-1zM1167 439h1v1h-1zM1079 369h1v1h-1zM258 776h1v1h-1zM737 557h1v1h-1zM994 493h1v1h-1zM628 473h1v1h-1zM658 472h1v1h-1zM1285 339h1v1h-1zM792 505h1v1h-1zM866 421h1v1h-1zM182 764h1v1h-1zM646 631h1v1h-1zM1198 330h1v1h-1zM1066 387h1v1h-1zM747 547h1v1h-1zM619 512h1v1h-1zM930 483h1v1h-1zM1253 403h1v1h-1zM845 604h1v1h-1zM561 660h1v1h-1zM828 613h1v1h-1zM752 493h1v1h-1zM521 563h1v1h-1zM639 484h1v1h-1zM434 700h1v1h-1zM845 594h1v1h-1zM736 518h1v1h-1zM472 540h1v1h-1zM682 553h1v1h-1zM588 597h1v1h-1zM795 601h1v1h-1zM964 403h1v1h-1zM1063 406h1v1h-1zM1004 433h1v1h-1zM1225 332h1v1h-1zM713 532h1v1h-1zM403 703h1v1h-1zM1084 351h1v1h-1zM1281 387h1v1h-1zM788 458h1v1h-1zM587 548h1v1h-1zM1269 370h1v1h-1zM157 827h1v1h-1zM506 615h1v1h-1zM950 503h1v1h-1zM989 375h1v1h-1zM782 616h1v1h-1zM854 435h1v1h-1zM440 625h1v1h-1zM721 449h1v1h-1zM1112 366h1v1h-1zM496 631h1v1h-1zM1275 326h1v1h-1zM286 725h1v1h-1zM1296 303h1v1h-1zM565 583h1v1h-1zM992 433h1v1h-1zM867 430h1v1h-1zM610 557h1v1h-1zM760 643h1v1h-1zM542 631h1v1h-1zM443 661h1v1h-1zM820 541h1v1h-1zM397 715h1v1h-1zM492 545h1v1h-1zM740 545h1v1h-1zM293 781h1v1h-1zM657 591h1v1h-1zM758 475h1v1h-1zM1252 357h1v1h-1zM502 548h1v1h-1zM1221 345h1v1h-1zM1056 427h1v1h-1zM571 489h1v1h-1zM691 550h1v1h-1zM1194 303h1v1h-1zM784 472h1v1h-1zM476 621h1v1h-1zM850 514h1v1h-1zM415 606h1v1h-1zM975 377h1v1h-1zM622 605h1v1h-1zM944 495h1v1h-1zM404 649h1v1h-1zM535 610h1v1h-1zM553 621h1v1h-1zM861 478h1v1h-1zM673 488h1v1h-1zM700 609h1v1h-1zM629 503h1v1h-1zM1326 360h1v1h-1zM795 447h1v1h-1zM793 618h1v1h-1zM237 733h1v1h-1zM813 468h1v1h-1zM497 541h1v1h-1zM390 694h1v1h-1zM1072 452h1v1h-1zM896 501h1v1h-1zM790 641h1v1h-1zM748 642h1v1h-1zM452 548h1v1h-1zM767 464h1v1h-1zM1019 434h1v1h-1zM522 669h1v1h-1zM236 803h1v1h-1zM1014 391h1v1h-1zM551 637h1v1h-1zM417 598h1v1h-1zM841 586h1v1h-1zM228 723h1v1h-1zM506 521h1v1h-1zM422 629h1v1h-1zM735 469h1v1h-1zM995 378h1v1h-1zM895 449h1v1h-1zM670 663h1v1h-1zM753 624h1v1h-1zM597 659h1v1h-1zM873 535h1v1h-1zM233 808h1v1h-1zM567 624h1v1h-1zM1301 339h1v1h-1zM1257 373h1v1h-1zM1300 395h1v1h-1zM319 747h1v1h-1zM375 647h1v1h-1zM784 563h1v1h-1zM265 802h1v1h-1zM1318 364h1v1h-1zM676 505h1v1h-1zM570 593h1v1h-1zM662 481h1v1h-1zM860 573h1v1h-1zM1031 392h1v1h-1zM317 695h1v1h-1zM1026 346h1v1h-1zM1190 339h1v1h-1zM1276 318h1v1h-1zM604 566h1v1h-1zM920 425h1v1h-1zM623 665h1v1h-1zM1071 431h1v1h-1zM419 579h1v1h-1zM943 547h1v1h-1zM678 663h1v1h-1zM164 804h1v1h-1zM1196 397h1v1h-1zM1321 301h1v1h-1zM741 449h1v1h-1zM832 599h1v1h-1zM1017 434h1v1h-1zM703 481h1v1h-1zM615 659h1v1h-1zM662 532h1v1h-1zM253 783h1v1h-1zM191 826h1v1h-1zM808 429h1v1h-1zM634 533h1v1h-1zM289 764h1v1h-1zM299 719h1v1h-1zM864 591h1v1h-1zM541 498h1v1h-1zM277 703h1v1h-1zM477 597h1v1h-1zM530 604h1v1h-1zM819 577h1v1h-1zM934 535h1v1h-1zM848 445h1v1h-1zM385 704h1v1h-1zM532 506h1v1h-1zM805 559h1v1h-1zM695 499h1v1h-1zM993 467h1v1h-1zM1305 326h1v1h-1zM840 554h1v1h-1zM1143 409h1v1h-1zM204 819h1v1h-1zM409 688h1v1h-1zM1215 384h1v1h-1zM331 760h1v1h-1zM1032 377h1v1h-1zM532 614h1v1h-1zM1015 391h1v1h-1zM877 381h1v1h-1zM819 500h1v1h-1zM1067 466h1v1h-1zM244 785h1v1h-1zM1287 271h1v1h-1zM675 652h1v1h-1zM971 449h1v1h-1zM1102 396h1v1h-1zM688 654h1v1h-1zM440 719h1v1h-1zM764 529h1v1h-1zM526 636h1v1h-1zM274 790h1v1h-1zM802 623h1v1h-1zM376 703h1v1h-1zM800 597h1v1h-1zM777 438h1v1h-1zM640 466h1v1h-1zM1006 382h1v1h-1zM938 395h1v1h-1zM982 464h1v1h-1zM503 678h1v1h-1zM601 529h1v1h-1zM753 616h1v1h-1zM1004 458h1v1h-1zM440 672h1v1h-1zM983 465h1v1h-1zM469 564h1v1h-1zM451 710h1v1h-1zM1141 382h1v1h-1zM1256 356h1v1h-1zM596 475h1v1h-1zM1228 410h1v1h-1zM623 575h1v1h-1zM689 578h1v1h-1zM1065 403h1v1h-1zM733 582h1v1h-1zM1212 358h1v1h-1zM160 818h1v1h-1zM626 646h1v1h-1zM797 557h1v1h-1zM849 597h1v1h-1zM345 740h1v1h-1zM436 568h1v1h-1zM1178 409h1v1h-1zM373 760h1v1h-1zM810 604h1v1h-1zM495 589h1v1h-1zM972 504h1v1h-1zM1070 428h1v1h-1zM863 551h1v1h-1zM263 758h1v1h-1zM253 743h1v1h-1zM254 736h1v1h-1zM524 523h1v1h-1zM370 735h1v1h-1zM1041 401h1v1h-1zM743 578h1v1h-1zM792 623h1v1h-1zM1182 351h1v1h-1zM328 703h1v1h-1zM1215 297h1v1h-1zM1142 368h1v1h-1zM1128 352h1v1h-1zM686 601h1v1h-1zM1098 396h1v1h-1zM528 592h1v1h-1zM1117 373h1v1h-1zM578 590h1v1h-1zM562 530h1v1h-1zM1122 378h1v1h-1zM955 398h1v1h-1zM865 588h1v1h-1zM915 361h1v1h-1zM536 568h1v1h-1zM339 763h1v1h-1zM271 773h1v1h-1zM298 684h1v1h-1zM836 600h1v1h-1zM536 491h1v1h-1zM927 473h1v1h-1zM640 551h1v1h-1zM951 349h1v1h-1zM603 599h1v1h-1zM197 817h1v1h-1zM410 634h1v1h-1zM499 649h1v1h-1zM896 542h1v1h-1zM700 604h1v1h-1zM330 711h1v1h-1zM907 538h1v1h-1zM1247 345h1v1h-1zM623 623h1v1h-1zM331 662h1v1h-1zM184 742h1v1h-1zM470 695h1v1h-1zM412 729h1v1h-1zM459 554h1v1h-1zM821 562h1v1h-1zM654 569h1v1h-1zM1211 298h1v1h-1zM1250 395h1v1h-1zM1311 355h1v1h-1zM1223 293h1v1h-1zM401 737h1v1h-1zM1072 341h1v1h-1zM461 698h1v1h-1zM1193 368h1v1h-1zM524 646h1v1h-1zM186 750h1v1h-1zM1011 368h1v1h-1zM532 644h1v1h-1zM1129 344h1v1h-1zM684 622h1v1h-1zM729 488h1v1h-1zM428 652h1v1h-1zM595 544h1v1h-1zM1058 353h1v1h-1zM981 420h1v1h-1zM456 669h1v1h-1zM560 569h1v1h-1zM346 732h1v1h-1zM1231 343h1v1h-1zM964 540h1v1h-1zM196 821h1v1h-1zM630 541h1v1h-1zM1298 328h1v1h-1zM289 714h1v1h-1zM651 513h1v1h-1zM1135 388h1v1h-1zM1011 435h1v1h-1zM274 782h1v1h-1zM552 675h1v1h-1zM568 482h1v1h-1zM1134 323h1v1h-1zM1018 454h1v1h-1zM1146 350h1v1h-1zM791 512h1v1h-1zM815 567h1v1h-1zM517 517h1v1h-1zM931 375h1v1h-1zM188 762h1v1h-1zM1013 389h1v1h-1zM506 519h1v1h-1zM862 567h1v1h-1zM417 611h1v1h-1zM1060 448h1v1h-1zM679 642h1v1h-1zM435 618h1v1h-1zM1085 471h1v1h-1zM1058 438h1v1h-1zM755 451h1v1h-1zM1061 356h1v1h-1zM998 338h1v1h-1zM1257 373h1v1h-1zM227 748h1v1h-1zM194 830h1v1h-1zM847 533h1v1h-1zM336 665h1v1h-1zM695 520h1v1h-1zM1258 369h1v1h-1zM850 489h1v1h-1zM753 454h1v1h-1zM1143 354h1v1h-1zM1272 344h1v1h-1zM743 626h1v1h-1zM916 419h1v1h-1zM384 754h1v1h-1zM645 630h1v1h-1zM1036 429h1v1h-1zM601 494h1v1h-1zM1015 385h1v1h-1zM345 737h1v1h-1zM335 681h1v1h-1zM777 472h1v1h-1zM791 599h1v1h-1zM423 662h1v1h-1zM464 533h1v1h-1zM939 402h1v1h-1zM1298 317h1v1h-1zM462 679h1v1h-1zM887 548h1v1h-1zM1176 344h1v1h-1zM356 716h1v1h-1zM163 776h1v1h-1zM404 667h1v1h-1zM446 677h1v1h-1zM726 469h1v1h-1zM191 795h1v1h-1zM672 526h1v1h-1zM1018 450h1v1h-1zM398 741h1v1h-1zM1141 422h1v1h-1zM717 455h1v1h-1zM602 622h1v1h-1zM582 528h1v1h-1zM649 639h1v1h-1zM781 537h1v1h-1zM864 559h1v1h-1zM522 679h1v1h-1zM241 763h1v1h-1zM355 692h1v1h-1zM229 762h1v1h-1zM697 490h1v1h-1zM868 393h1v1h-1zM521 512h1v1h-1zM1038 338h1v1h-1zM976 364h1v1h-1zM728 526h1v1h-1zM280 793h1v1h-1zM407 668h1v1h-1zM514 504h1v1h-1zM769 436h1v1h-1zM677 498h1v1h-1zM227 768h1v1h-1zM1067 471h1v1h-1zM841 600h1v1h-1zM738 445h1v1h-1zM758 491h1v1h-1zM509 623h1v1h-1zM817 612h1v1h-1zM956 464h1v1h-1zM724 559h1v1h-1zM1123 451h1v1h-1zM474 701h1v1h-1zM542 665h1v1h-1zM548 514h1v1h-1zM665 470h1v1h-1zM1260 330h1v1h-1zM952 361h1v1h-1zM930 440h1v1h-1zM558 599h1v1h-1zM861 533h1v1h-1zM1006 456h1v1h-1zM479 585h1v1h-1zM913 378h1v1h-1zM213 741h1v1h-1zM231 729h1v1h-1zM503 619h1v1h-1zM533 494h1v1h-1zM666 464h1v1h-1zM1047 477h1v1h-1zM645 571h1v1h-1zM1313 279h1v1h-1zM1286 266h1v1h-1zM674 609h1v1h-1zM481 698h1v1h-1zM1000 381h1v1h-1zM858 555h1v1h-1zM776 474h1v1h-1zM563 577h1v1h-1zM513 554h1v1h-1zM1225 379h1v1h-1zM1001 468h1v1h-1zM1246 324h1v1h-1zM994 460h1v1h-1zM280 782h1v1h-1zM1191 396h1v1h-1zM794 454h1v1h-1zM1091 471h1v1h-1zM684 490h1v1h-1zM1225 334h1v1h-1zM177 767h1v1h-1zM472 620h1v1h-1zM997 356h1v1h-1zM1300 362h1v1h-1zM626 584h1v1h-1zM287 760h1v1h-1zM611 665h1v1h-1zM483 569h1v1h-1zM1213 297h1v1h-1zM698 634h1v1h-1zM248 814h1v1h-1zM640 590h1v1h-1zM953 364h1v1h-1zM605 664h1v1h-1zM532 684h1v1h-1zM1056 405h1v1h-1zM342 660h1v1h-1zM145 791h1v1h-1zM394 624h1v1h-1zM688 491h1v1h-1zM1202 350h1v1h-1zM730 561h1v1h-1zM1168 313h1v1h-1zM1024 427h1v1h-1zM512 610h1v1h-1zM1010 422h1v1h-1zM652 632h1v1h-1zM802 557h1v1h-1zM1298 331h1v1h-1zM851 557h1v1h-1zM920 411h1v1h-1zM298 718h1v1h-1zM1177 393h1v1h-1zM597 617h1v1h-1zM1211 369h1v1h-1zM472 522h1v1h-1zM487 702h1v1h-1zM601 503h1v1h-1zM223 778h1v1h-1zM436 650h1v1h-1zM373 717h1v1h-1zM884 431h1v1h-1zM981 464h1v1h-1zM216 808h1v1h-1zM583 509h1v1h-1zM946 411h1v1h-1zM1088 456h1v1h-1zM445 595h1v1h-1zM665 487h1v1h-1zM641 517h1v1h-1zM930 437h1v1h-1zM479 646h1v1h-1zM580 544h1v1h-1zM606 474h1v1h-1zM885 578h1v1h-1zM932 547h1v1h-1zM659 517h1v1h-1zM515 556h1v1h-1zM178 814h1v1h-1zM836 474h1v1h-1zM344 656h1v1h-1zM975 440h1v1h-1zM1177 331h1v1h-1zM540 586h1v1h-1zM814 444h1v1h-1zM839 529h1v1h-1zM380 696h1v1h-1zM599 620h1v1h-1zM426 713h1v1h-1zM1087 372h1v1h-1zM566 564h1v1h-1zM593 634h1v1h-1zM424 624h1v1h-1zM202 757h1v1h-1zM354 661h1v1h-1zM527 617h1v1h-1zM1121 432h1v1h-1zM582 610h1v1h-1zM328 715h1v1h-1zM1129 411h1v1h-1zM779 432h1v1h-1zM870 459h1v1h-1zM1277 383h1v1h-1zM474 688h1v1h-1zM758 568h1v1h-1zM1026 352h1v1h-1zM368 681h1v1h-1zM440 702h1v1h-1zM1287 317h1v1h-1zM839 616h1v1h-1zM280 749h1v1h-1zM944 470h1v1h-1zM1107 454h1v1h-1zM1227 343h1v1h-1zM857 443h1v1h-1zM912 502h1v1h-1zM262 774h1v1h-1zM304 785h1v1h-1zM1099 332h1v1h-1zM714 561h1v1h-1zM1283 303h1v1h-1zM1102 467h1v1h-1zM723 512h1v1h-1zM879 548h1v1h-1zM1013 378h1v1h-1zM629 665h1v1h-1zM664 619h1v1h-1zM400 678h1v1h-1zM785 440h1v1h-1zM940 428h1v1h-1zM737 499h1v1h-1zM1056 374h1v1h-1zM761 575h1v1h-1zM669 627h1v1h-1zM856 597h1v1h-1zM1005 442h1v1h-1zM917 383h1v1h-1zM807 631h1v1h-1zM805 465h1v1h-1zM182 790h1v1h-1zM199 762h1v1h-1zM594 508h1v1h-1zM567 631h1v1h-1zM349 665h1v1h-1zM747 539h1v1h-1zM277 753h1v1h-1zM452 624h1v1h-1zM983 358h1v1h-1zM782 461h1v1h-1zM1281 281h1v1h-1zM603 537h1v1h-1zM1280 339h1v1h-1zM577 543h1v1h-1zM440 697h1v1h-1zM832 523h1v1h-1zM1310 358h1v1h-1zM618 663h1v1h-1zM537 625h1v1h-1zM402 707h1v1h-1zM813 577h1v1h-1zM1022 451h1v1h-1zM998 365h1v1h-1zM797 577h1v1h-1zM215 764h1v1h-1zM792 522h1v1h-1zM442 719h1v1h-1zM448 663h1v1h-1zM917 410h1v1h-1zM938 539h1v1h-1zM356 649h1v1h-1zM295 737h1v1h-1zM344 664h1v1h-1zM804 587h1v1h-1zM992 493h1v1h-1zM1119 351h1v1h-1zM736 602h1v1h-1zM1219 291h1v1h-1zM457 611h1v1h-1zM644 608h1v1h-1zM1269 276h1v1h-1zM739 467h1v1h-1zM506 585h1v1h-1zM1032 458h1v1h-1zM1141 345h1v1h-1zM869 445h1v1h-1zM726 448h1v1h-1zM434 732h1v1h-1zM187 753h1v1h-1zM751 540h1v1h-1zM1303 383h1v1h-1zM554 595h1v1h-1zM1090 461h1v1h-1zM1016 436h1v1h-1zM726 572h1v1h-1zM810 484h1v1h-1zM1239 412h1v1h-1zM901 416h1v1h-1zM315 749h1v1h-1zM954 468h1v1h-1zM1281 367h1v1h-1zM430 673h1v1h-1zM683 595h1v1h-1zM286 739h1v1h-1zM1302 269h1v1h-1zM993 359h1v1h-1zM959 445h1v1h-1zM328 727h1v1h-1zM681 602h1v1h-1zM1100 383h1v1h-1zM1003 483h1v1h-1zM656 623h1v1h-1zM1094 460h1v1h-1zM710 540h1v1h-1zM807 423h1v1h-1zM582 558h1v1h-1zM223 740h1v1h-1zM721 582h1v1h-1zM564 542h1v1h-1zM789 615h1v1h-1zM697 551h1v1h-1zM268 724h1v1h-1zM753 480h1v1h-1zM954 499h1v1h-1zM1170 411h1v1h-1zM668 548h1v1h-1zM772 567h1v1h-1zM559 666h1v1h-1zM607 546h1v1h-1zM1048 346h1v1h-1zM905 465h1v1h-1zM510 693h1v1h-1zM818 478h1v1h-1zM899 548h1v1h-1zM1077 423h1v1h-1zM353 641h1v1h-1zM978 471h1v1h-1zM1023 372h1v1h-1zM1300 304h1v1h-1zM213 783h1v1h-1zM1084 417h1v1h-1zM788 571h1v1h-1zM744 587h1v1h-1zM608 650h1v1h-1zM501 659h1v1h-1zM498 665h1v1h-1zM520 650h1v1h-1zM1269 396h1v1h-1zM284 795h1v1h-1zM760 448h1v1h-1zM727 538h1v1h-1zM1262 267h1v1h-1zM621 624h1v1h-1zM664 567h1v1h-1zM712 625h1v1h-1zM302 693h1v1h-1zM882 454h1v1h-1zM1200 423h1v1h-1zM785 619h1v1h-1zM511 607h1v1h-1zM757 452h1v1h-1zM786 481h1v1h-1zM1121 415h1v1h-1zM803 544h1v1h-1zM753 534h1v1h-1zM860 596h1v1h-1zM1109 379h1v1h-1zM938 542h1v1h-1zM424 602h1v1h-1zM281 737h1v1h-1zM1139 322h1v1h-1zM836 582h1v1h-1zM561 605h1v1h-1zM744 609h1v1h-1zM793 505h1v1h-1zM958 433h1v1h-1zM402 674h1v1h-1zM838 490h1v1h-1zM1099 340h1v1h-1zM1135 413h1v1h-1zM200 792h1v1h-1zM908 402h1v1h-1zM276 725h1v1h-1zM732 645h1v1h-1zM809 556h1v1h-1zM473 528h1v1h-1zM689 553h1v1h-1zM245 800h1v1h-1zM1080 333h1v1h-1zM830 605h1v1h-1zM1243 356h1v1h-1zM543 582h1v1h-1zM1240 293h1v1h-1zM574 545h1v1h-1zM935 547h1v1h-1zM1016 349h1v1h-1zM1300 372h1v1h-1zM1280 254h1v1h-1zM477 686h1v1h-1zM911 546h1v1h-1zM732 557h1v1h-1zM281 794h1v1h-1zM575 565h1v1h-1zM1258 407h1v1h-1zM1292 321h1v1h-1zM1280 291h1v1h-1zM772 597h1v1h-1zM708 659h1v1h-1zM693 515h1v1h-1zM452 572h1v1h-1zM502 519h1v1h-1zM443 578h1v1h-1zM715 488h1v1h-1zM846 523h1v1h-1zM1223 356h1v1h-1zM758 643h1v1h-1zM769 644h1v1h-1zM344 661h1v1h-1zM1032 464h1v1h-1zM1117 425h1v1h-1zM157 775h1v1h-1zM817 422h1v1h-1zM618 470h1v1h-1zM448 651h1v1h-1zM583 607h1v1h-1zM1153 408h1v1h-1zM1083 392h1v1h-1zM1135 418h1v1h-1zM755 452h1v1h-1zM1219 385h1v1h-1zM415 618h1v1h-1zM917 554h1v1h-1zM1084 457h1v1h-1zM788 573h1v1h-1zM846 448h1v1h-1zM1178 403h1v1h-1zM1060 413h1v1h-1zM1015 473h1v1h-1zM995 354h1v1h-1zM161 813h1v1h-1zM612 588h1v1h-1zM1190 387h1v1h-1zM1169 317h1v1h-1zM853 482h1v1h-1zM1259 277h1v1h-1zM530 657h1v1h-1zM921 389h1v1h-1zM147 782h1v1h-1zM858 565h1v1h-1zM429 733h1v1h-1zM948 432h1v1h-1zM713 643h1v1h-1zM921 436h1v1h-1zM1254 379h1v1h-1zM625 488h1v1h-1zM374 674h1v1h-1zM483 559h1v1h-1zM1133 328h1v1h-1zM946 383h1v1h-1zM1151 438h1v1h-1zM625 472h1v1h-1zM797 566h1v1h-1zM1118 457h1v1h-1zM462 544h1v1h-1zM150 809h1v1h-1zM195 830h1v1h-1zM1064 462h1v1h-1zM678 638h1v1h-1zM179 796h1v1h-1zM710 588h1v1h-1zM958 523h1v1h-1zM909 421h1v1h-1zM245 754h1v1h-1zM191 771h1v1h-1zM1144 345h1v1h-1zM1040 419h1v1h-1zM323 776h1v1h-1zM490 661h1v1h-1zM1046 443h1v1h-1zM961 540h1v1h-1zM697 483h1v1h-1zM683 593h1v1h-1zM517 575h1v1h-1zM819 583h1v1h-1zM807 625h1v1h-1zM841 566h1v1h-1zM496 700h1v1h-1zM1085 356h1v1h-1zM427 715h1v1h-1zM408 711h1v1h-1zM604 560h1v1h-1zM659 564h1v1h-1zM769 558h1v1h-1zM454 683h1v1h-1zM878 386h1v1h-1zM1187 309h1v1h-1zM476 592h1v1h-1zM473 657h1v1h-1zM609 486h1v1h-1zM735 543h1v1h-1zM654 566h1v1h-1zM803 493h1v1h-1zM1054 474h1v1h-1zM146 791h1v1h-1zM960 510h1v1h-1zM1032 472h1v1h-1zM641 638h1v1h-1zM1165 368h1v1h-1zM801 449h1v1h-1zM746 504h1v1h-1zM1240 311h1v1h-1zM845 421h1v1h-1zM255 708h1v1h-1zM1292 361h1v1h-1zM816 437h1v1h-1zM824 627h1v1h-1zM925 359h1v1h-1zM1103 422h1v1h-1zM403 716h1v1h-1zM1325 378h1v1h-1zM504 641h1v1h-1zM892 551h1v1h-1zM277 756h1v1h-1zM340 664h1v1h-1zM1099 387h1v1h-1zM596 496h1v1h-1zM698 612h1v1h-1zM1249 319h1v1h-1zM1070 481h1v1h-1zM1256 336h1v1h-1zM1216 323h1v1h-1zM378 705h1v1h-1zM935 511h1v1h-1zM996 433h1v1h-1zM1105 350h1v1h-1zM514 621h1v1h-1zM509 602h1v1h-1zM1116 395h1v1h-1zM899 518h1v1h-1zM1096 381h1v1h-1zM609 611h1v1h-1zM298 730h1v1h-1zM440 654h1v1h-1zM541 600h1v1h-1zM1181 368h1v1h-1zM1297 265h1v1h-1zM388 665h1v1h-1zM207 774h1v1h-1zM915 395h1v1h-1zM249 739h1v1h-1zM389 713h1v1h-1zM848 593h1v1h-1zM648 583h1v1h-1zM1035 336h1v1h-1zM1227 324h1v1h-1zM673 653h1v1h-1zM912 537h1v1h-1zM1197 410h1v1h-1zM574 656h1v1h-1zM883 450h1v1h-1zM997 342h1v1h-1zM807 529h1v1h-1zM566 566h1v1h-1zM584 536h1v1h-1zM661 626h1v1h-1zM606 598h1v1h-1zM766 508h1v1h-1zM799 436h1v1h-1zM426 638h1v1h-1zM1265 290h1v1h-1zM412 623h1v1h-1zM842 509h1v1h-1zM509 614h1v1h-1zM763 490h1v1h-1zM324 764h1v1h-1zM1316 335h1v1h-1zM197 767h1v1h-1zM475 561h1v1h-1zM204 784h1v1h-1zM933 527h1v1h-1zM1166 342h1v1h-1zM224 768h1v1h-1zM667 661h1v1h-1zM276 705h1v1h-1zM925 389h1v1h-1zM692 517h1v1h-1zM1025 482h1v1h-1zM798 458h1v1h-1zM1197 340h1v1h-1zM169 799h1v1h-1zM1149 435h1v1h-1zM694 604h1v1h-1zM1197 309h1v1h-1zM526 545h1v1h-1zM1105 377h1v1h-1zM991 499h1v1h-1zM252 766h1v1h-1zM510 638h1v1h-1zM441 630h1v1h-1zM805 486h1v1h-1zM1000 478h1v1h-1zM662 496h1v1h-1zM680 528h1v1h-1zM731 599h1v1h-1zM915 527h1v1h-1zM868 447h1v1h-1zM784 618h1v1h-1zM394 631h1v1h-1zM918 416h1v1h-1zM1202 376h1v1h-1zM613 512h1v1h-1zM772 626h1v1h-1zM589 571h1v1h-1zM249 723h1v1h-1zM698 595h1v1h-1zM757 638h1v1h-1zM1011 433h1v1h-1zM569 590h1v1h-1zM1170 325h1v1h-1zM282 712h1v1h-1zM887 563h1v1h-1zM587 501h1v1h-1zM796 638h1v1h-1zM430 684h1v1h-1zM657 649h1v1h-1zM1126 441h1v1h-1zM508 636h1v1h-1zM703 521h1v1h-1zM710 624h1v1h-1zM1130 352h1v1h-1zM1058 460h1v1h-1zM807 522h1v1h-1zM894 472h1v1h-1zM493 632h1v1h-1zM329 690h1v1h-1zM148 803h1v1h-1zM629 489h1v1h-1zM670 598h1v1h-1zM684 459h1v1h-1zM727 649h1v1h-1zM299 771h1v1h-1zM1086 334h1v1h-1zM664 585h1v1h-1zM955 491h1v1h-1zM852 410h1v1h-1zM422 637h1v1h-1zM1162 408h1v1h-1zM1157 332h1v1h-1zM707 542h1v1h-1zM1071 382h1v1h-1zM834 452h1v1h-1zM882 402h1v1h-1zM538 676h1v1h-1zM1199 395h1v1h-1zM274 789h1v1h-1zM588 568h1v1h-1zM631 658h1v1h-1zM387 670h1v1h-1zM957 352h1v1h-1zM1068 448h1v1h-1zM1215 357h1v1h-1zM730 575h1v1h-1zM994 373h1v1h-1zM349 733h1v1h-1zM554 567h1v1h-1zM545 625h1v1h-1zM949 493h1v1h-1zM1229 309h1v1h-1zM1333 352h1v1h-1zM414 641h1v1h-1zM693 486h1v1h-1zM1231 359h1v1h-1zM1015 445h1v1h-1zM1023 418h1v1h-1zM269 774h1v1h-1zM1048 445h1v1h-1zM241 707h1v1h-1zM1018 492h1v1h-1zM335 674h1v1h-1zM276 718h1v1h-1zM984 360h1v1h-1zM1125 397h1v1h-1zM1085 334h1v1h-1zM940 549h1v1h-1zM656 598h1v1h-1zM555 520h1v1h-1zM1156 387h1v1h-1zM1127 425h1v1h-1zM196 777h1v1h-1zM1124 436h1v1h-1zM499 617h1v1h-1zM891 548h1v1h-1zM910 367h1v1h-1zM1190 310h1v1h-1zM821 626h1v1h-1zM473 685h1v1h-1zM483 618h1v1h-1zM701 509h1v1h-1zM1305 337h1v1h-1zM842 608h1v1h-1zM1290 250h1v1h-1zM392 754h1v1h-1zM936 405h1v1h-1zM1095 334h1v1h-1zM490 533h1v1h-1zM1155 383h1v1h-1zM670 488h1v1h-1zM907 552h1v1h-1zM167 805h1v1h-1zM209 726h1v1h-1zM832 609h1v1h-1zM957 538h1v1h-1zM520 613h1v1h-1zM817 506h1v1h-1zM639 556h1v1h-1zM283 745h1v1h-1zM869 414h1v1h-1zM233 725h1v1h-1zM523 561h1v1h-1zM976 436h1v1h-1zM747 596h1v1h-1zM401 605h1v1h-1zM1212 404h1v1h-1zM765 594h1v1h-1zM193 737h1v1h-1zM411 733h1v1h-1zM338 760h1v1h-1zM1107 392h1v1h-1zM237 721h1v1h-1zM1212 336h1v1h-1zM568 500h1v1h-1zM625 633h1v1h-1zM440 652h1v1h-1zM719 647h1v1h-1zM875 467h1v1h-1zM718 527h1v1h-1zM1192 300h1v1h-1zM915 554h1v1h-1zM487 593h1v1h-1zM862 513h1v1h-1zM965 368h1v1h-1zM829 561h1v1h-1zM407 650h1v1h-1zM1248 389h1v1h-1zM985 511h1v1h-1zM668 613h1v1h-1zM615 535h1v1h-1zM1002 335h1v1h-1zM250 766h1v1h-1zM351 711h1v1h-1zM974 470h1v1h-1zM783 622h1v1h-1zM1272 334h1v1h-1zM425 678h1v1h-1zM935 504h1v1h-1zM270 739h1v1h-1zM467 551h1v1h-1zM878 379h1v1h-1zM855 413h1v1h-1zM836 511h1v1h-1zM1018 455h1v1h-1zM499 532h1v1h-1zM289 705h1v1h-1zM653 498h1v1h-1zM191 787h1v1h-1zM815 574h1v1h-1zM497 518h1v1h-1zM820 463h1v1h-1zM801 487h1v1h-1zM1219 397h1v1h-1zM873 468h1v1h-1zM1006 400h1v1h-1zM645 490h1v1h-1zM924 395h1v1h-1zM1199 386h1v1h-1zM1173 432h1v1h-1zM804 567h1v1h-1zM1066 340h1v1h-1zM528 489h1v1h-1zM1194 391h1v1h-1zM1000 498h1v1h-1zM461 711h1v1h-1zM970 362h1v1h-1zM755 554h1v1h-1zM558 557h1v1h-1zM167 767h1v1h-1zM403 734h1v1h-1zM175 803h1v1h-1zM442 688h1v1h-1zM1111 345h1v1h-1zM665 595h1v1h-1zM1166 334h1v1h-1zM1170 384h1v1h-1zM699 600h1v1h-1zM807 489h1v1h-1zM885 464h1v1h-1zM1218 399h1v1h-1zM1006 368h1v1h-1zM794 507h1v1h-1zM595 661h1v1h-1zM488 664h1v1h-1zM1079 445h1v1h-1zM403 636h1v1h-1zM367 654h1v1h-1zM710 503h1v1h-1zM627 492h1v1h-1zM392 609h1v1h-1zM704 637h1v1h-1zM831 575h1v1h-1zM700 608h1v1h-1zM1184 314h1v1h-1zM427 694h1v1h-1zM291 774h1v1h-1zM902 394h1v1h-1zM759 501h1v1h-1zM367 715h1v1h-1zM616 571h1v1h-1zM692 524h1v1h-1zM163 850h1v1h-1zM333 657h1v1h-1zM1087 353h1v1h-1zM701 615h1v1h-1zM821 629h1v1h-1zM795 529h1v1h-1zM1304 288h1v1h-1zM813 561h1v1h-1zM759 511h1v1h-1zM757 492h1v1h-1zM593 665h1v1h-1zM1309 312h1v1h-1zM1287 276h1v1h-1zM386 618h1v1h-1zM1202 368h1v1h-1zM1168 354h1v1h-1zM310 726h1v1h-1zM246 724h1v1h-1zM774 605h1v1h-1zM898 472h1v1h-1zM644 509h1v1h-1zM754 451h1v1h-1zM624 654h1v1h-1zM363 714h1v1h-1zM295 761h1v1h-1zM1058 413h1v1h-1zM621 622h1v1h-1zM943 504h1v1h-1zM1059 353h1v1h-1zM456 679h1v1h-1zM557 531h1v1h-1zM677 490h1v1h-1zM410 724h1v1h-1zM750 539h1v1h-1zM520 654h1v1h-1zM718 611h1v1h-1zM1127 378h1v1h-1zM430 623h1v1h-1zM228 796h1v1h-1zM251 782h1v1h-1zM566 552h1v1h-1zM383 663h1v1h-1zM1152 432h1v1h-1zM731 508h1v1h-1zM251 794h1v1h-1zM781 504h1v1h-1zM565 480h1v1h-1zM610 656h1v1h-1zM530 528h1v1h-1zM1198 377h1v1h-1zM515 684h1v1h-1zM603 495h1v1h-1zM493 584h1v1h-1zM456 667h1v1h-1zM1265 309h1v1h-1zM761 550h1v1h-1zM459 576h1v1h-1zM932 411h1v1h-1zM968 536h1v1h-1zM1324 348h1v1h-1zM888 525h1v1h-1zM448 716h1v1h-1zM219 755h1v1h-1zM622 601h1v1h-1zM768 468h1v1h-1zM798 503h1v1h-1zM914 406h1v1h-1zM852 431h1v1h-1zM1257 322h1v1h-1zM391 722h1v1h-1zM405 698h1v1h-1zM1133 323h1v1h-1zM270 699h1v1h-1zM479 556h1v1h-1zM432 604h1v1h-1zM1144 331h1v1h-1zM592 525h1v1h-1zM167 783h1v1h-1zM1293 305h1v1h-1zM165 775h1v1h-1zM1104 394h1v1h-1zM238 774h1v1h-1zM712 485h1v1h-1zM985 434h1v1h-1zM506 666h1v1h-1zM1267 360h1v1h-1zM616 556h1v1h-1zM225 750h1v1h-1zM889 496h1v1h-1zM585 635h1v1h-1zM1146 348h1v1h-1zM527 556h1v1h-1zM592 667h1v1h-1zM831 588h1v1h-1zM520 613h1v1h-1zM681 538h1v1h-1zM998 493h1v1h-1zM949 502h1v1h-1zM585 513h1v1h-1zM1208 337h1v1h-1zM533 524h1v1h-1zM1181 329h1v1h-1zM968 399h1v1h-1zM573 657h1v1h-1zM935 437h1v1h-1zM1232 417h1v1h-1zM885 416h1v1h-1zM443 680h1v1h-1zM1236 320h1v1h-1zM726 485h1v1h-1zM551 577h1v1h-1zM789 599h1v1h-1zM424 574h1v1h-1zM941 350h1v1h-1zM940 368h1v1h-1zM518 557h1v1h-1zM673 655h1v1h-1zM764 495h1v1h-1zM754 448h1v1h-1zM767 504h1v1h-1zM1090 381h1v1h-1zM308 678h1v1h-1zM944 539h1v1h-1zM968 520h1v1h-1zM371 733h1v1h-1zM861 533h1v1h-1zM821 572h1v1h-1zM1081 358h1v1h-1zM710 538h1v1h-1zM163 845h1v1h-1zM1300 355h1v1h-1zM742 632h1v1h-1zM1009 375h1v1h-1zM851 571h1v1h-1zM929 513h1v1h-1zM321 668h1v1h-1zM572 627h1v1h-1zM971 525h1v1h-1zM199 829h1v1h-1zM680 507h1v1h-1zM519 518h1v1h-1zM451 649h1v1h-1zM438 649h1v1h-1zM1245 345h1v1h-1zM583 581h1v1h-1zM968 351h1v1h-1zM1002 372h1v1h-1zM1256 362h1v1h-1zM1133 389h1v1h-1zM1040 495h1v1h-1zM593 518h1v1h-1zM524 531h1v1h-1zM883 437h1v1h-1zM743 508h1v1h-1zM706 553h1v1h-1zM1176 403h1v1h-1zM1037 496h1v1h-1zM711 635h1v1h-1zM434 641h1v1h-1zM858 585h1v1h-1zM769 520h1v1h-1zM919 418h1v1h-1zM1232 293h1v1h-1zM540 652h1v1h-1zM509 588h1v1h-1zM1182 380h1v1h-1zM455 598h1v1h-1zM382 748h1v1h-1zM821 585h1v1h-1zM762 624h1v1h-1zM1019 490h1v1h-1zM941 410h1v1h-1zM999 401h1v1h-1zM1189 303h1v1h-1zM394 684h1v1h-1zM511 601h1v1h-1zM866 387h1v1h-1zM1047 434h1v1h-1zM1106 407h1v1h-1zM1126 347h1v1h-1zM631 479h1v1h-1zM1086 409h1v1h-1zM901 557h1v1h-1zM985 355h1v1h-1zM593 558h1v1h-1zM1245 376h1v1h-1zM912 393h1v1h-1zM888 423h1v1h-1zM623 665h1v1h-1zM242 763h1v1h-1zM341 729h1v1h-1zM931 354h1v1h-1zM453 594h1v1h-1zM920 556h1v1h-1zM448 593h1v1h-1zM1179 386h1v1h-1zM944 410h1v1h-1zM671 666h1v1h-1zM504 624h1v1h-1zM845 472h1v1h-1zM208 752h1v1h-1zM560 556h1v1h-1zM230 781h1v1h-1zM731 591h1v1h-1zM1166 359h1v1h-1zM812 520h1v1h-1zM685 634h1v1h-1zM545 610h1v1h-1zM1302 293h1v1h-1zM225 794h1v1h-1zM919 459h1v1h-1zM452 653h1v1h-1zM1206 423h1v1h-1zM285 733h1v1h-1zM757 440h1v1h-1zM823 494h1v1h-1zM390 691h1v1h-1zM1029 391h1v1h-1zM1022 502h1v1h-1zM1264 401h1v1h-1zM705 526h1v1h-1zM692 599h1v1h-1zM796 541h1v1h-1zM1133 424h1v1h-1zM1148 373h1v1h-1zM1066 429h1v1h-1zM1250 396h1v1h-1zM1004 391h1v1h-1zM719 547h1v1h-1zM270 720h1v1h-1zM921 404h1v1h-1zM850 412h1v1h-1zM381 677h1v1h-1zM1206 380h1v1h-1zM1221 412h1v1h-1zM1031 492h1v1h-1zM1023 396h1v1h-1zM1136 370h1v1h-1zM1045 364h1v1h-1zM656 483h1v1h-1zM695 652h1v1h-1zM755 553h1v1h-1zM919 407h1v1h-1zM402 628h1v1h-1zM739 540h1v1h-1zM1035 429h1v1h-1zM582 637h1v1h-1zM834 588h1v1h-1zM810 509h1v1h-1zM206 782h1v1h-1zM278 730h1v1h-1zM861 570h1v1h-1zM657 484h1v1h-1zM621 568h1v1h-1zM757 537h1v1h-1zM896 367h1v1h-1zM385 658h1v1h-1zM770 638h1v1h-1zM290 714h1v1h-1zM601 621h1v1h-1zM567 648h1v1h-1zM459 682h1v1h-1zM798 602h1v1h-1zM972 510h1v1h-1zM564 495h1v1h-1zM920 556h1v1h-1zM902 527h1v1h-1zM219 755h1v1h-1zM996 418h1v1h-1zM951 347h1v1h-1zM711 498h1v1h-1zM1099 383h1v1h-1zM763 460h1v1h-1zM1298 277h1v1h-1zM925 503h1v1h-1zM820 588h1v1h-1zM932 365h1v1h-1zM795 466h1v1h-1zM963 365h1v1h-1zM956 391h1v1h-1zM519 650h1v1h-1zM724 643h1v1h-1zM1157 322h1v1h-1zM632 596h1v1h-1zM630 581h1v1h-1zM432 688h1v1h-1zM340 701h1v1h-1zM283 793h1v1h-1zM1001 337h1v1h-1zM564 542h1v1h-1zM282 786h1v1h-1zM619 531h1v1h-1zM702 469h1v1h-1zM690 567h1v1h-1zM431 630h1v1h-1zM1083 352h1v1h-1zM657 660h1v1h-1zM423 676h1v1h-1zM821 558h1v1h-1zM935 453h1v1h-1zM974 368h1v1h-1zM922 526h1v1h-1zM449 717h1v1h-1zM666 467h1v1h-1zM263 800h1v1h-1zM871 537h1v1h-1zM1289 294h1v1h-1zM970 450h1v1h-1zM547 550h1v1h-1zM497 645h1v1h-1zM460 701h1v1h-1zM1142 358h1v1h-1zM1009 395h1v1h-1zM772 589h1v1h-1zM467 537h1v1h-1zM888 488h1v1h-1zM959 482h1v1h-1zM1064 362h1v1h-1zM1191 379h1v1h-1zM845 605h1v1h-1zM508 513h1v1h-1zM1225 392h1v1h-1zM189 803h1v1h-1zM1145 428h1v1h-1zM985 443h1v1h-1zM996 363h1v1h-1zM912 390h1v1h-1zM1004 378h1v1h-1zM1325 351h1v1h-1zM967 429h1v1h-1zM797 579h1v1h-1zM999 396h1v1h-1zM355 668h1v1h-1zM825 539h1v1h-1zM919 479h1v1h-1zM391 640h1v1h-1zM854 532h1v1h-1zM978 496h1v1h-1zM1165 402h1v1h-1zM504 621h1v1h-1zM1306 268h1v1h-1zM473 543h1v1h-1zM161 795h1v1h-1zM598 497h1v1h-1zM862 591h1v1h-1zM524 559h1v1h-1zM865 585h1v1h-1zM1156 435h1v1h-1zM839 412h1v1h-1zM432 648h1v1h-1zM357 709h1v1h-1zM972 365h1v1h-1zM166 792h1v1h-1zM172 759h1v1h-1zM1198 354h1v1h-1zM1233 335h1v1h-1zM505 634h1v1h-1zM1062 462h1v1h-1zM745 527h1v1h-1zM597 535h1v1h-1zM437 586h1v1h-1zM980 375h1v1h-1zM836 423h1v1h-1zM904 489h1v1h-1zM607 562h1v1h-1zM1093 427h1v1h-1zM468 578h1v1h-1zM676 554h1v1h-1zM322 762h1v1h-1zM677 604h1v1h-1zM1099 332h1v1h-1zM360 700h1v1h-1zM530 614h1v1h-1zM200 778h1v1h-1zM692 637h1v1h-1zM299 713h1v1h-1zM885 380h1v1h-1zM917 458h1v1h-1zM1106 331h1v1h-1zM600 521h1v1h-1zM1026 452h1v1h-1zM767 498h1v1h-1zM749 445h1v1h-1zM1309 351h1v1h-1zM1063 465h1v1h-1zM381 715h1v1h-1zM187 777h1v1h-1zM563 638h1v1h-1zM721 516h1v1h-1zM814 614h1v1h-1zM525 633h1v1h-1zM905 474h1v1h-1zM227 820h1v1h-1zM533 684h1v1h-1zM619 557h1v1h-1zM328 717h1v1h-1zM1008 490h1v1h-1zM735 588h1v1h-1zM854 413h1v1h-1zM537 662h1v1h-1zM622 586h1v1h-1zM994 375h1v1h-1zM365 763h1v1h-1zM506 534h1v1h-1zM332 765h1v1h-1zM962 476h1v1h-1zM354 677h1v1h-1zM966 484h1v1h-1zM955 521h1v1h-1zM1020 437h1v1h-1zM544 579h1v1h-1zM776 435h1v1h-1zM930 373h1v1h-1zM252 776h1v1h-1zM457 572h1v1h-1zM671 631h1v1h-1zM742 579h1v1h-1zM1047 442h1v1h-1zM214 724h1v1h-1zM1271 262h1v1h-1zM799 479h1v1h-1zM526 664h1v1h-1zM720 530h1v1h-1zM204 785h1v1h-1zM203 769h1v1h-1zM1054 357h1v1h-1zM142 787h1v1h-1zM948 412h1v1h-1zM320 770h1v1h-1zM706 509h1v1h-1zM687 483h1v1h-1zM1063 476h1v1h-1zM710 539h1v1h-1zM1026 346h1v1h-1zM1318 288h1v1h-1zM1330 338h1v1h-1zM1031 467h1v1h-1zM698 632h1v1h-1zM960 482h1v1h-1zM876 509h1v1h-1zM751 591h1v1h-1zM309 759h1v1h-1zM258 805h1v1h-1zM1116 450h1v1h-1zM602 507h1v1h-1zM999 511h1v1h-1zM917 473h1v1h-1zM758 531h1v1h-1zM1219 339h1v1h-1zM455 586h1v1h-1zM816 555h1v1h-1zM428 695h1v1h-1zM1158 444h1v1h-1zM217 817h1v1h-1zM849 550h1v1h-1zM1290 289h1v1h-1zM1003 413h1v1h-1zM661 633h1v1h-1zM950 435h1v1h-1zM736 454h1v1h-1zM935 388h1v1h-1zM667 545h1v1h-1zM976 525h1v1h-1zM1058 396h1v1h-1zM806 628h1v1h-1zM347 722h1v1h-1zM530 626h1v1h-1zM913 532h1v1h-1zM488 680h1v1h-1zM1210 381h1v1h-1zM1301 276h1v1h-1zM663 654h1v1h-1zM1082 415h1v1h-1zM1105 368h1v1h-1zM186 826h1v1h-1zM760 575h1v1h-1zM463 593h1v1h-1zM915 560h1v1h-1zM666 575h1v1h-1zM1115 422h1v1h-1zM614 557h1v1h-1zM448 571h1v1h-1zM610 579h1v1h-1zM665 571h1v1h-1zM214 815h1v1h-1zM625 637h1v1h-1zM417 640h1v1h-1zM1028 358h1v1h-1zM197 736h1v1h-1zM491 508h1v1h-1zM1159 341h1v1h-1zM994 405h1v1h-1zM1240 300h1v1h-1zM851 505h1v1h-1zM970 483h1v1h-1zM754 516h1v1h-1zM1333 357h1v1h-1zM674 533h1v1h-1zM782 461h1v1h-1zM919 395h1v1h-1zM718 526h1v1h-1zM942 391h1v1h-1zM477 634h1v1h-1zM627 516h1v1h-1zM571 582h1v1h-1zM358 696h1v1h-1zM841 488h1v1h-1zM331 748h1v1h-1zM657 474h1v1h-1zM577 534h1v1h-1zM275 708h1v1h-1zM894 407h1v1h-1zM1230 400h1v1h-1zM883 406h1v1h-1zM1242 324h1v1h-1zM1270 307h1v1h-1zM938 456h1v1h-1zM417 689h1v1h-1zM893 520h1v1h-1zM1057 447h1v1h-1zM912 508h1v1h-1zM504 500h1v1h-1zM227 824h1v1h-1zM1091 411h1v1h-1zM993 515h1v1h-1zM958 456h1v1h-1zM242 719h1v1h-1zM979 430h1v1h-1zM1148 390h1v1h-1zM571 575h1v1h-1zM233 765h1v1h-1zM454 682h1v1h-1zM722 568h1v1h-1zM392 614h1v1h-1zM375 702h1v1h-1zM474 678h1v1h-1zM1272 359h1v1h-1zM669 656h1v1h-1zM844 532h1v1h-1zM700 516h1v1h-1zM1273 372h1v1h-1zM441 675h1v1h-1zM259 789h1v1h-1zM378 721h1v1h-1zM714 522h1v1h-1zM877 469h1v1h-1zM525 562h1v1h-1zM973 358h1v1h-1zM1098 374h1v1h-1zM542 553h1v1h-1zM407 740h1v1h-1zM1105 414h1v1h-1zM869 477h1v1h-1zM301 785h1v1h-1zM459 686h1v1h-1zM888 519h1v1h-1zM1244 395h1v1h-1zM762 462h1v1h-1zM627 481h1v1h-1zM371 704h1v1h-1zM644 605h1v1h-1zM245 769h1v1h-1zM1005 337h1v1h-1zM771 594h1v1h-1zM579 539h1v1h-1zM1012 489h1v1h-1zM396 617h1v1h-1zM182 813h1v1h-1zM868 546h1v1h-1zM1259 409h1v1h-1zM409 654h1v1h-1zM1197 406h1v1h-1zM347 704h1v1h-1zM403 697h1v1h-1zM674 469h1v1h-1zM906 422h1v1h-1zM995 468h1v1h-1zM1039 470h1v1h-1zM839 483h1v1h-1zM671 578h1v1h-1zM262 739h1v1h-1zM646 611h1v1h-1zM1189 312h1v1h-1zM375 650h1v1h-1zM650 639h1v1h-1zM662 506h1v1h-1zM664 551h1v1h-1zM622 503h1v1h-1zM878 585h1v1h-1zM885 401h1v1h-1zM1094 461h1v1h-1zM1046 342h1v1h-1zM147 789h1v1h-1zM821 542h1v1h-1zM684 507h1v1h-1zM727 528h1v1h-1zM226 769h1v1h-1zM1145 416h1v1h-1zM381 740h1v1h-1zM278 691h1v1h-1zM1017 405h1v1h-1zM1126 416h1v1h-1zM1075 473h1v1h-1zM957 388h1v1h-1zM813 551h1v1h-1zM466 607h1v1h-1zM1222 319h1v1h-1zM1211 404h1v1h-1zM181 751h1v1h-1zM1199 367h1v1h-1zM958 419h1v1h-1zM429 603h1v1h-1zM302 728h1v1h-1zM660 586h1v1h-1zM421 591h1v1h-1zM925 466h1v1h-1zM569 635h1v1h-1zM656 575h1v1h-1zM849 535h1v1h-1zM576 523h1v1h-1zM584 620h1v1h-1zM1037 477h1v1h-1zM525 506h1v1h-1zM299 733h1v1h-1zM1152 332h1v1h-1zM1162 386h1v1h-1zM978 525h1v1h-1zM1079 402h1v1h-1zM584 651h1v1h-1zM1068 425h1v1h-1zM950 540h1v1h-1zM823 607h1v1h-1zM747 601h1v1h-1zM642 512h1v1h-1zM974 488h1v1h-1zM453 645h1v1h-1zM757 436h1v1h-1zM536 592h1v1h-1zM781 591h1v1h-1zM1019 402h1v1h-1zM670 658h1v1h-1zM510 692h1v1h-1zM606 528h1v1h-1zM782 468h1v1h-1zM1244 384h1v1h-1zM971 500h1v1h-1zM179 839h1v1h-1zM842 495h1v1h-1zM1186 338h1v1h-1zM1009 407h1v1h-1zM968 347h1v1h-1zM465 621h1v1h-1zM686 619h1v1h-1zM1005 402h1v1h-1zM1312 358h1v1h-1zM434 637h1v1h-1zM194 768h1v1h-1zM844 502h1v1h-1zM348 772h1v1h-1zM767 559h1v1h-1zM715 516h1v1h-1zM1005 434h1v1h-1zM476 559h1v1h-1zM706 652h1v1h-1zM1289 261h1v1h-1zM986 430h1v1h-1zM723 639h1v1h-1zM1023 386h1v1h-1zM903 495h1v1h-1zM466 541h1v1h-1zM1158 378h1v1h-1zM800 462h1v1h-1zM1270 292h1v1h-1zM237 789h1v1h-1zM620 565h1v1h-1zM647 548h1v1h-1zM359 739h1v1h-1zM1202 344h1v1h-1zM855 422h1v1h-1zM1326 372h1v1h-1zM835 576h1v1h-1zM1098 356h1v1h-1zM1220 337h1v1h-1zM518 684h1v1h-1zM1054 417h1v1h-1zM709 506h1v1h-1zM205 736h1v1h-1zM628 653h1v1h-1zM902 462h1v1h-1zM736 629h1v1h-1zM617 531h1v1h-1zM300 691h1v1h-1zM262 707h1v1h-1zM692 573h1v1h-1zM656 527h1v1h-1zM737 502h1v1h-1zM189 768h1v1h-1zM690 583h1v1h-1zM301 680h1v1h-1zM548 538h1v1h-1zM355 745h1v1h-1zM592 529h1v1h-1zM1051 425h1v1h-1zM876 571h1v1h-1zM272 719h1v1h-1zM824 560h1v1h-1zM677 587h1v1h-1zM710 634h1v1h-1zM854 402h1v1h-1zM496 521h1v1h-1zM348 747h1v1h-1zM709 560h1v1h-1zM862 552h1v1h-1zM304 704h1v1h-1zM873 569h1v1h-1zM1069 413h1v1h-1zM261 760h1v1h-1zM935 384h1v1h-1zM191 794h1v1h-1zM737 631h1v1h-1zM363 692h1v1h-1zM275 744h1v1h-1zM341 709h1v1h-1zM1028 502h1v1h-1zM497 587h1v1h-1zM959 473h1v1h-1zM618 564h1v1h-1zM1266 333h1v1h-1zM506 690h1v1h-1zM763 467h1v1h-1zM550 552h1v1h-1zM415 636h1v1h-1zM153 805h1v1h-1zM764 499h1v1h-1zM390 734h1v1h-1zM865 509h1v1h-1zM1124 450h1v1h-1zM502 550h1v1h-1zM582 550h1v1h-1zM459 679h1v1h-1zM587 526h1v1h-1zM1158 349h1v1h-1zM711 532h1v1h-1zM466 706h1v1h-1zM1290 345h1v1h-1zM619 568h1v1h-1zM633 538h1v1h-1zM224 767h1v1h-1zM490 543h1v1h-1zM930 360h1v1h-1zM770 446h1v1h-1zM350 658h1v1h-1zM225 735h1v1h-1zM885 389h1v1h-1zM1113 410h1v1h-1zM250 726h1v1h-1zM549 648h1v1h-1zM366 670h1v1h-1zM947 445h1v1h-1zM1039 434h1v1h-1zM1142 408h1v1h-1zM906 428h1v1h-1zM452 610h1v1h-1zM439 571h1v1h-1zM1060 428h1v1h-1zM738 517h1v1h-1zM1262 266h1v1h-1zM1278 346h1v1h-1zM673 617h1v1h-1zM467 552h1v1h-1zM870 576h1v1h-1zM240 713h1v1h-1zM1021 401h1v1h-1zM652 603h1v1h-1zM805 517h1v1h-1zM407 594h1v1h-1zM157 772h1v1h-1zM397 689h1v1h-1zM1075 372h1v1h-1zM778 435h1v1h-1zM745 594h1v1h-1zM702 456h1v1h-1zM552 541h1v1h-1zM195 785h1v1h-1zM721 603h1v1h-1zM826 427h1v1h-1zM230 712h1v1h-1zM497 542h1v1h-1zM778 633h1v1h-1zM1295 296h1v1h-1zM593 516h1v1h-1zM1136 398h1v1h-1zM794 545h1v1h-1zM729 551h1v1h-1zM482 601h1v1h-1zM691 524h1v1h-1zM426 672h1v1h-1zM340 683h1v1h-1zM921 498h1v1h-1zM886 522h1v1h-1zM932 401h1v1h-1zM787 547h1v1h-1zM450 556h1v1h-1zM876 538h1v1h-1zM1056 479h1v1h-1zM808 631h1v1h-1zM509 648h1v1h-1z" fill="#9a8a80" shape-rendering="crispEdges"/>
<path d="M737 470l-4 1M739 456l-4 3M800 458l4 -3M187 782l3 -3M436 588l4 -3M496 707l-4 1M945 493l-3 3M1075 373l-3 1M410 670l3 -1M1306 375l4 1M1053 426l-4 -1M280 788l-3 1M251 710l4 1M1338 299l-3 1M1003 469l-3 3M430 665l-4 -1M479 713l4 -1M670 502l-3 3M506 617l-4 -3M686 581l4 1M741 470l-3 -1M138 783l3 3M470 561l4 1M692 495l4 -3M272 699l4 1M835 624l-3 3M762 642l-3 -3M1229 368l3 3M532 492l-4 -3M1028 455l-3 1M1014 440l-3 3M605 615l3 -3M663 623l3 1M747 585l-3 1M388 624l4 1M143 781l-4 3M745 496l-3 3M491 659l-3 3M1175 399l4 -1M1031 343l3 3M480 699l3 1M1030 359l-3 1M479 546l3 -1M845 503l3 1M1025 437l3 -1M296 787l-4 -1M1161 442l4 1M904 490l4 -1M730 546l-3 -3M850 431l-4 3M1293 291l4 -1M1314 282l3 1M976 480l-4 1M1134 410l-4 -1M150 811l4 1M1271 390l-4 1M1044 351l-3 -3M739 532l-3 3M698 633l-4 -1M1352 354l-4 -3M173 809l4 -1M1067 410l-3 -1M816 599l4 -1M1054 431l-3 -3M656 487l4 -1M823 449l4 -1M1331 274l-4 1M1022 470l4 -1M861 452l-3 -3M1253 367l-3 3M445 666l4 3M1014 512l-3 -3M1025 503l4 -1M554 585l3 -3M355 680l3 -3M535 606l-4 1M637 618l3 -3M1341 388l3 3M1252 322l-3 3M1069 476l4 3M190 748l3 -1M973 461l3 -1M289 805l4 -1M458 650l4 -1M392 746l4 1M1199 340l4 1M1078 472l3 1M602 586l4 1M1280 375l-3 1M719 573l4 3M784 606l4 -3M251 780l3 3M1055 392l-4 1M560 636l4 3M506 673l-4 1M987 476l3 1M217 775l-4 -1M942 493l-4 1M815 563l4 -3M676 617l-4 -1M423 718l-3 3M622 524l3 -3M971 412l4 -3M976 506l3 -3M622 581l-4 3M820 502l3 1M1348 356l4 -3M641 544l-3 3M916 542l-4 3M1202 364l3 -3M537 591l3 3M1173 434l3 1M306 726l-4 -3M603 587l-4 1M248 809l-4 1M470 550l4 1M635 576l-3 -3M794 586l-3 3M555 479l3 3M368 656l-3 -1M521 522l-3 3M600 504l-4 -3M260 697l3 -1M1279 401l-4 -1M437 661l4 3M670 636l-3 -1M628 589l4 -1M896 565l3 -1M265 718l4 3M1052 445l-4 3M909 417l3 3M245 759l-3 3M1320 268l-3 -1M558 645l4 -1M1078 433l4 -1M1227 415l3 3M838 479l4 -3M799 529l-4 -3M385 681l-3 3M314 773l4 -1M1174 319l-3 -3M800 451l-3 3M525 614l-3 3M786 640l-3 1M452 586l4 -1M655 558l-3 -1M1197 312l-3 -1M613 518l3 -3M662 518l-4 3M749 637l-3 1M499 531l-4 -3M895 511l-4 1M525 694l4 -3M1249 361l3 3M852 550l-4 -1M1051 457l4 1M595 541l-3 1M755 661l3 -3M275 789l3 3M333 780l4 -1M439 626l-3 -1M1308 302l-4 -1M389 723l3 1M1333 355l4 -1M1057 489l-3 -1M759 521l4 1M865 574l-4 1M1198 296l4 -1M825 608l-4 -1M586 496l4 3M527 521l-3 -3M1204 384l4 3M1257 275l-4 1M1135 370l3 1M970 455l3 -3M855 617l-4 1M547 500l3 -1M504 632l4 3M710 549l3 -3M901 544l4 1M936 538l-4 3M284 799l-3 -1M650 677l-3 -1M460 713l3 -3M897 527l-3 -1M949 404l-4 3M739 463l-4 1M587 531l-3 1M938 406l-3 1M668 545l4 -3M993 435l-3 -3M1103 451l3 -1M371 625l-4 1M325 706l3 -1M789 622l4 3M1011 426l3 -3M1308 338l-3 1M1265 354l-4 1M916 429l-3 3M852 444l4 3M357 642l3 -1M1252 366l-3 -1M703 667l3 -3M660 608l4 -3M1283 291l-4 -3M1247 416l3 -3M896 497l4 -1M955 534l-3 -3M1160 316l3 -3M417 624l-4 -3" stroke="#8a8a8a" stroke-width="1" fill="none" shape-rendering="crispEdges" transform="translate(.5 .5)"/>
<path d="M736 469h2v2h-2zM738 455h2v2h-2zM799 457h2v2h-2zM186 781h2v2h-2zM435 587h2v2h-2zM495 706h2v2h-2zM944 492h2v2h-2zM1074 372h2v2h-2zM409 669h2v2h-2zM1305 374h2v2h-2zM1052 425h2v2h-2zM279 787h2v2h-2zM250 709h2v2h-2zM1337 298h2v2h-2zM1002 468h2v2h-2zM429 664h2v2h-2zM478 712h2v2h-2zM669 501h2v2h-2zM505 616h2v2h-2zM685 580h2v2h-2zM740 469h2v2h-2zM137 782h2v2h-2zM469 560h2v2h-2zM691 494h2v2h-2zM271 698h2v2h-2zM834 623h2v2h-2zM761 641h2v2h-2zM1228 367h2v2h-2zM531 491h2v2h-2zM1027 454h2v2h-2zM1013 439h2v2h-2zM604 614h2v2h-2zM662 622h2v2h-2zM746 584h2v2h-2zM387 623h2v2h-2zM142 780h2v2h-2zM744 495h2v2h-2zM490 658h2v2h-2zM1174 398h2v2h-2zM1030 342h2v2h-2zM479 698h2v2h-2zM1029 358h2v2h-2zM478 545h2v2h-2zM844 502h2v2h-2zM1024 436h2v2h-2zM295 786h2v2h-2zM1160 441h2v2h-2zM903 489h2v2h-2zM729 545h2v2h-2zM849 430h2v2h-2zM1292 290h2v2h-2zM1313 281h2v2h-2zM975 479h2v2h-2zM1133 409h2v2h-2zM149 810h2v2h-2zM1270 389h2v2h-2zM1043 350h2v2h-2zM738 531h2v2h-2zM697 632h2v2h-2zM1351 353h2v2h-2zM172 808h2v2h-2zM1066 409h2v2h-2zM815 598h2v2h-2zM1053 430h2v2h-2zM655 486h2v2h-2zM822 448h2v2h-2zM1330 273h2v2h-2zM1021 469h2v2h-2zM860 451h2v2h-2zM1252 366h2v2h-2zM444 665h2v2h-2zM1013 511h2v2h-2zM1024 502h2v2h-2zM553 584h2v2h-2zM354 679h2v2h-2zM534 605h2v2h-2zM636 617h2v2h-2zM1340 387h2v2h-2zM1251 321h2v2h-2zM1068 475h2v2h-2zM189 747h2v2h-2zM972 460h2v2h-2zM288 804h2v2h-2zM457 649h2v2h-2zM391 745h2v2h-2zM1198 339h2v2h-2zM1077 471h2v2h-2zM601 585h2v2h-2zM1279 374h2v2h-2zM718 572h2v2h-2zM783 605h2v2h-2zM250 779h2v2h-2zM1054 391h2v2h-2zM559 635h2v2h-2zM505 672h2v2h-2zM986 475h2v2h-2zM216 774h2v2h-2zM941 492h2v2h-2zM814 562h2v2h-2zM675 616h2v2h-2zM422 717h2v2h-2zM621 523h2v2h-2zM970 411h2v2h-2zM975 505h2v2h-2zM621 580h2v2h-2zM819 501h2v2h-2zM1347 355h2v2h-2zM640 543h2v2h-2zM915 541h2v2h-2zM1201 363h2v2h-2zM536 590h2v2h-2zM1172 433h2v2h-2zM305 725h2v2h-2zM602 586h2v2h-2zM247 808h2v2h-2zM469 549h2v2h-2zM634 575h2v2h-2zM793 585h2v2h-2zM554 478h2v2h-2zM367 655h2v2h-2zM520 521h2v2h-2zM599 503h2v2h-2zM259 696h2v2h-2zM1278 400h2v2h-2zM436 660h2v2h-2zM669 635h2v2h-2zM627 588h2v2h-2zM895 564h2v2h-2zM264 717h2v2h-2zM1051 444h2v2h-2zM908 416h2v2h-2zM244 758h2v2h-2zM1319 267h2v2h-2zM557 644h2v2h-2zM1077 432h2v2h-2zM1226 414h2v2h-2zM837 478h2v2h-2zM798 528h2v2h-2zM384 680h2v2h-2zM313 772h2v2h-2zM1173 318h2v2h-2zM799 450h2v2h-2zM524 613h2v2h-2zM785 639h2v2h-2zM451 585h2v2h-2zM654 557h2v2h-2zM1196 311h2v2h-2zM612 517h2v2h-2zM661 517h2v2h-2zM748 636h2v2h-2zM498 530h2v2h-2zM894 510h2v2h-2zM524 693h2v2h-2zM1248 360h2v2h-2zM851 549h2v2h-2zM1050 456h2v2h-2zM594 540h2v2h-2zM754 660h2v2h-2zM274 788h2v2h-2zM332 779h2v2h-2zM438 625h2v2h-2zM1307 301h2v2h-2zM388 722h2v2h-2zM1332 354h2v2h-2zM1056 488h2v2h-2zM758 520h2v2h-2zM864 573h2v2h-2zM1197 295h2v2h-2zM824 607h2v2h-2zM585 495h2v2h-2zM526 520h2v2h-2zM1203 383h2v2h-2zM1256 274h2v2h-2zM1134 369h2v2h-2zM969 454h2v2h-2zM854 616h2v2h-2zM546 499h2v2h-2zM503 631h2v2h-2zM709 548h2v2h-2zM900 543h2v2h-2zM935 537h2v2h-2zM283 798h2v2h-2zM649 676h2v2h-2zM459 712h2v2h-2zM896 526h2v2h-2zM948 403h2v2h-2zM738 462h2v2h-2zM586 530h2v2h-2zM937 405h2v2h-2zM667 544h2v2h-2zM992 434h2v2h-2zM1102 450h2v2h-2zM370 624h2v2h-2zM324 705h2v2h-2zM788 621h2v2h-2zM1010 425h2v2h-2zM1307 337h2v2h-2zM1264 353h2v2h-2zM915 428h2v2h-2zM851 443h2v2h-2zM356 641h2v2h-2zM1251 365h2v2h-2zM702 666h2v2h-2zM659 607h2v2h-2zM1282 290h2v2h-2zM1246 415h2v2h-2zM895 496h2v2h-2zM954 533h2v2h-2zM1159 315h2v2h-2zM416 623h2v2h-2z" fill="#000" shape-rendering="crispEdges"/><g shape-rendering="crispEdges" stroke="#000" stroke-width="1" fill="none"><path d="M1421 176.5H1785M1603.5 174V357"/><rect x="1595.5" y="173.5" width="16" height="11"/></g><g font-family="Liberation Sans, sans-serif" fill="#000"><rect x="1139.5" y="550.5" width="673" height="195" fill="#fff" stroke="#000" stroke-width="1" shape-rendering="crispEdges"/><rect x="1146.5" y="557.5" width="659" height="183" rx="3" fill="none" stroke="#000" stroke-width="3"/><g stroke="#000" shape-rendering="crispEdges"><path d="M1147 586.5H1805" stroke-width="1"/><path d="M1147 607H1805" stroke-width="2"/><path d="M1147 629H1805" stroke-width="2"/><path d="M1147 651H1805" stroke-width="2"/><path d="M1147 673H1805" stroke-width="2"/><path d="M1147 695.5H1805" stroke-width="1"/><path d="M1147 718H1805" stroke-width="2"/><path d="M1191.5 586V740" stroke-width="1"/><path d="M1537.5 586V740" stroke-width="1"/><path d="M1671.5 586V740" stroke-width="1"/></g><rect x="1149" y="676" width="40" height="15" fill="#0099cc"/><rect x="1149" y="698" width="40" height="15" fill="#857540"/><text x="1474.5" y="578" font-size="21.6" text-anchor="middle">Cálculo de Inundação</text><text x="1150.5" y="603" font-size="15.6" text-anchor="start">COR</text><text x="1362.5" y="603" font-size="15.8" text-anchor="middle">Descrição</text><text x="1603.5" y="603" font-size="15.8" text-anchor="middle">Valores</text><text x="1737.5" y="603" font-size="15.8" text-anchor="middle">Percentuais</text><text x="1364" y="625" font-size="19.8" text-anchor="middle">COTA</text><text x="1603.5" y="625" font-size="19.8" text-anchor="middle">324.000</text><text x="1364" y="647.5" font-size="19.8" text-anchor="middle">Volume Inund.(m³)</text><text x="1603.5" y="647.5" font-size="19.8" text-anchor="middle">226.680,788</text><text x="1364" y="669.5" font-size="19.8" text-anchor="middle">Área de Superfície Inund. (m²)</text><text x="1603.5" y="669.5" font-size="19.8" text-anchor="middle">142.764,537</text><text x="1364" y="692" font-size="19.8" text-anchor="middle">Área Inund.(m²)</text><text x="1603.5" y="692" font-size="19.8" text-anchor="middle">142.500,000</text><text x="1738" y="692" font-size="19.8" text-anchor="middle">94,57 %</text><text x="1364" y="714" font-size="19.8" text-anchor="middle">Área Seca.(m²)</text><text x="1603.5" y="714" font-size="19.8" text-anchor="middle">8.187,500</text><text x="1738" y="714" font-size="19.8" text-anchor="middle">5,43 %</text><text x="1364" y="736" font-size="19.8" text-anchor="middle">Total. (m²)</text><text x="1603.5" y="736" font-size="19.8" text-anchor="middle">150.687,500</text><text x="1738" y="736" font-size="19.8" text-anchor="middle">100,00 %</text></g></svg><div class="a" id="btabs"><div class="a" style="left:1px;top:-1px;width:65px;height:25px;background:#fff;font-size:13px;font-weight:bold;letter-spacing:3.2px;line-height:27px;text-align:center;padding-left:3px">CAD</div><div class="a" style="left:68px;top:0px;width:77px;height:24px;background:#f0f0f0;border-right:1px solid #dcdcdc;border-top:1px solid #e4e4e4;font-size:13px;line-height:23px;text-align:center">RASTER</div></div><div class="a" id="stat"></div><div class="a" id="statl"><div class="a" style="left:3px;top:0;font-size:13px;line-height:19px;white-space:nowrap;letter-spacing:-.1px">267108.71600 , 7647102.82984</div><div class="sb" style="left:220px;width:72px">Ortho - F8</div><div class="sb" style="left:292px;width:72px">Osnap - F3</div><div class="sb" style="left:364px;width:72px">Atrib - F4</div><div class="sb" style="left:436px;width:72px">SGrip - F5</div><div class="sb" style="left:508px;width:72px">Grid - F7</div><div class="sb" style="left:580px;width:72px">Snap - F9</div><div class="sb" style="left:652px;width:81px">RTexto - F10</div><div class="sb" style="left:733px;width:74px">Nome - F11</div><div class="sb" style="left:807px;width:72px">Filtro - F12</div><div class="sb" style="left:879px;width:72px">Snap Pto</div><div class="sb" style="left:951px;width:72px">Snap 3D</div><div class="sb" style="left:1023px;width:63px">Georref.</div><div class="sb" style="left:1086px;width:1px"></div></div><div class="a" id="statline"></div><div class="a" id="cmd"><div style="top:3px">1 "Bloco" encontrado na camada "0".</div><div style="top:23px">1 "Bloco" encontrado na camada "0".</div><div style="top:43px;left:3px;font-weight:bold;color:#17315a;font-size:15px;letter-spacing:.2px;background:#f4f4f4;padding-right:3px">Comando:</div><div class="a" style="left:1906px;top:1px;width:11px;height:42px;background:#e8e8e8"><div class="a" style="left:1px;top:8px;width:10px;height:14px;background:#7a7a7a"></div><div class="a" style="left:2px;top:24px;width:9px;height:1px;background:#999"></div><div class="dd" style="left:3px;top:2px;border-width:0 3px 3px 3px;border-color:transparent transparent #555 transparent;border-style:solid"></div><div class="dd" style="left:2px;top:31px;border-width:4px 4px 0 4px;border-color:#555 transparent transparent transparent;border-style:solid"></div></div></div></body></html>
